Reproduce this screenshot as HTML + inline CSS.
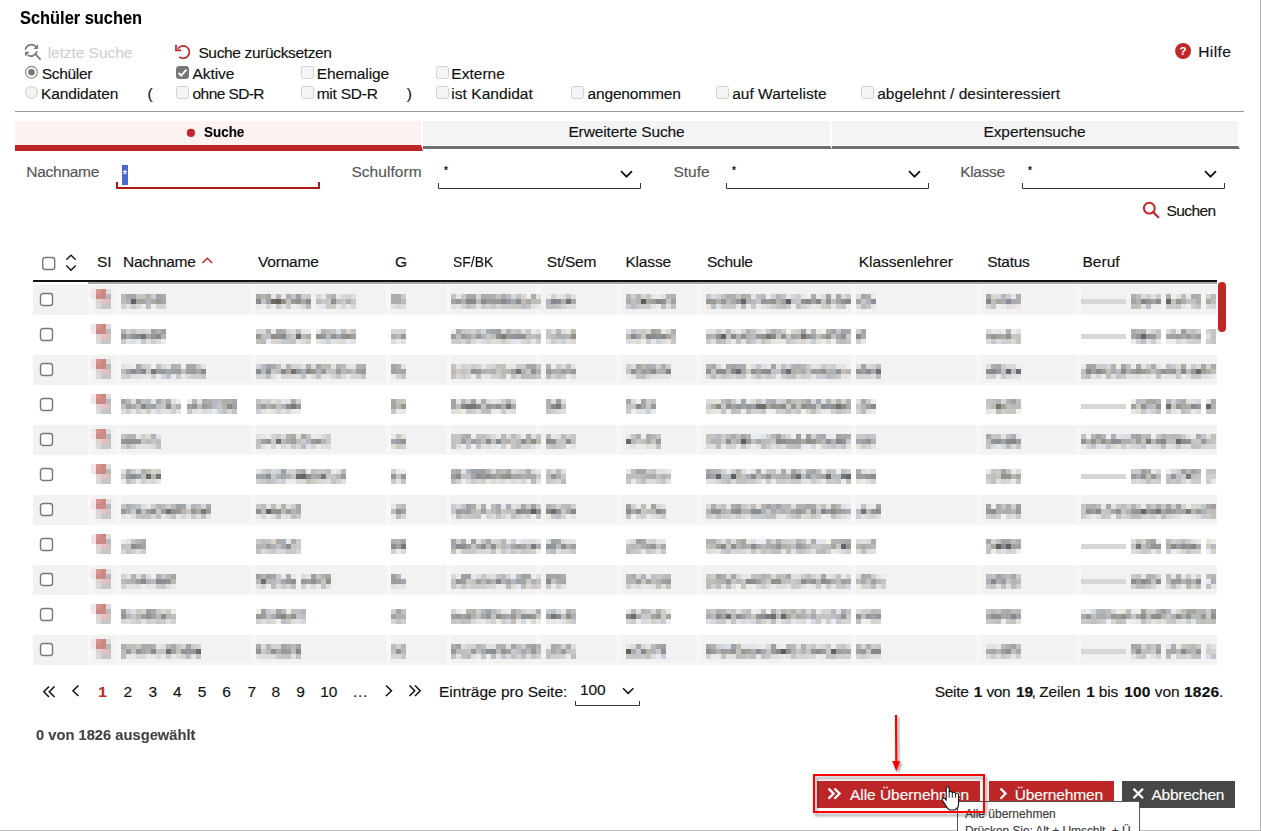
<!DOCTYPE html>
<html><head><meta charset="utf-8"><style>
html,body{margin:0;padding:0;}
body{width:1261px;height:831px;position:relative;overflow:hidden;background:#fff;font-family:"Liberation Sans",sans-serif;}
.t{position:absolute;white-space:pre;line-height:1;-webkit-text-stroke:0.15px currentColor;}
svg{overflow:visible}
</style></head><body>
<div style="position:absolute;left:1260px;top:0px;width:1px;height:831px;background:#b4b4b4"></div>
<div style="position:absolute;left:0px;top:830px;width:1260px;height:1px;background:#bdbdbd"></div>
<svg style="position:absolute;left:20px;top:40px;" width="30" height="24" viewBox="0 0 30 24"><g fill="none" stroke="#7a7a7a" stroke-width="1.8">
<path d="M25.4 49.6 A6.2 6.2 0 0 1 36.2 46.8" transform="translate(-20,-40)"/>
<path d="M37 51.3 A6.2 6.2 0 0 1 27.6 55" transform="translate(-20,-40)"/>
<path d="M35.6 54.4 L40.6 59.6" transform="translate(-20,-40)"/></g>
<g fill="#7a7a7a" transform="translate(-20,-40)"><path d="M33.6 49 L38.2 49 L38 44.3 Z"/><path d="M25 51.8 L29.6 51.8 L25 56.4 Z"/></g></svg>
<svg style="position:absolute;left:170px;top:40px;" width="30" height="24" viewBox="0 0 30 24"><g transform="translate(-170,-40)" fill="none" stroke="#c6232a" stroke-width="1.7">
<path d="M177.8 48.9 A6.2 6.2 0 1 1 179.2 56.8"/>
<path d="M176 44.8 L176 50.3 L181.2 50.3"/></g></svg>
<svg style="position:absolute;left:24px;top:65px;" width="16" height="36" viewBox="0 0 16 36"><circle cx="7.5" cy="7.3" r="5.9" fill="#fff" stroke="#858585" stroke-width="1.1"/>
<circle cx="7.5" cy="7.3" r="3.3" fill="#777"/>
<circle cx="7.5" cy="27.4" r="5.9" fill="#f4f4f4" stroke="#d0d0d0" stroke-width="1.1"/></svg>
<svg style="position:absolute;left:176px;top:66px;" width="13" height="13" viewBox="0 0 13 13"><rect x="0.5" y="0.5" width="12" height="12" rx="2.2" fill="#777" stroke="#777"/><path d="M2.6 7 L5.2 9.6 L10.4 3.6" fill="none" stroke="#fff" stroke-width="1.9"/></svg>
<svg style="position:absolute;left:176px;top:86px;" width="13" height="13" viewBox="0 0 13 13"><rect x="0.5" y="0.5" width="12" height="12" rx="2.2" fill="#f5f5f5" stroke="#d2d2d2"/></svg>
<svg style="position:absolute;left:301px;top:66px;" width="13" height="13" viewBox="0 0 13 13"><rect x="0.5" y="0.5" width="12" height="12" rx="2.2" fill="#f5f5f5" stroke="#d2d2d2"/></svg>
<svg style="position:absolute;left:301px;top:86px;" width="13" height="13" viewBox="0 0 13 13"><rect x="0.5" y="0.5" width="12" height="12" rx="2.2" fill="#f5f5f5" stroke="#d2d2d2"/></svg>
<svg style="position:absolute;left:436px;top:66px;" width="13" height="13" viewBox="0 0 13 13"><rect x="0.5" y="0.5" width="12" height="12" rx="2.2" fill="#f5f5f5" stroke="#d2d2d2"/></svg>
<svg style="position:absolute;left:436px;top:86px;" width="13" height="13" viewBox="0 0 13 13"><rect x="0.5" y="0.5" width="12" height="12" rx="2.2" fill="#f5f5f5" stroke="#d2d2d2"/></svg>
<svg style="position:absolute;left:571px;top:86px;" width="13" height="13" viewBox="0 0 13 13"><rect x="0.5" y="0.5" width="12" height="12" rx="2.2" fill="#f5f5f5" stroke="#d2d2d2"/></svg>
<svg style="position:absolute;left:716px;top:86px;" width="13" height="13" viewBox="0 0 13 13"><rect x="0.5" y="0.5" width="12" height="12" rx="2.2" fill="#f5f5f5" stroke="#d2d2d2"/></svg>
<svg style="position:absolute;left:861px;top:86px;" width="13" height="13" viewBox="0 0 13 13"><rect x="0.5" y="0.5" width="12" height="12" rx="2.2" fill="#f5f5f5" stroke="#d2d2d2"/></svg>
<svg style="position:absolute;left:1175px;top:43px;" width="17" height="17" viewBox="0 0 17 17"><circle cx="8.1" cy="8" r="8" fill="#c0272b"/><text x="8.1" y="12.3" text-anchor="middle" font-family="Liberation Sans" font-weight="bold" font-size="11.5" fill="#fff">?</text></svg>
<div style="position:absolute;left:15px;top:111px;width:1229px;height:1px;background:#999"></div>
<div style="position:absolute;left:15px;top:121px;width:406px;height:24px;background:#fcf2f2"></div>
<div style="position:absolute;left:423px;top:121px;width:407px;height:24px;background:#f4f4f4"></div>
<div style="position:absolute;left:832px;top:121px;width:406px;height:24px;background:#f4f4f4"></div>
<svg style="position:absolute;left:15px;top:145px;" width="409" height="6" viewBox="0 0 409 6"><path d="M0 0 H406 L408 6 H0 Z" fill="#bd2525"/></svg>
<svg style="position:absolute;left:423px;top:146px;" width="410" height="3" viewBox="0 0 410 3"><path d="M0 0 H407 L409 3 H0 Z" fill="#6f6f6f"/></svg>
<svg style="position:absolute;left:832px;top:146px;" width="410" height="3" viewBox="0 0 410 3"><path d="M0 0 H406 L408 3 H0 Z" fill="#6f6f6f"/></svg>
<svg style="position:absolute;left:186px;top:128px;" width="10" height="10" viewBox="0 0 10 10"><circle cx="4.9" cy="4.9" r="4.1" fill="#c0272b"/></svg>
<div style="position:absolute;left:122px;top:165px;width:6px;height:20px;background:#4a68d2"></div>
<svg style="position:absolute;left:122px;top:165px;" width="6" height="20" viewBox="0 0 6 20"><path d="M3 5.3 V9.3 M1.2 6.2 L4.8 8.4 M4.8 6.2 L1.2 8.4" stroke="#fff" stroke-width="1.1"/></svg>
<svg style="position:absolute;left:116px;top:182px;" width="204" height="7" viewBox="0 0 204 7"><path d="M1 0 V6 H203 V0" fill="none" stroke="#ac1a1a" stroke-width="2"/></svg>
<svg style="position:absolute;left:438px;top:183px;" width="203" height="6" viewBox="0 0 203 6"><path d="M0.5 0 V5.5 H202.5 V0" fill="none" stroke="#333" stroke-width="1"/></svg>
<svg style="position:absolute;left:444px;top:166px;" width="6" height="8" viewBox="0 0 6 8"><text x="0" y="8" font-family="Liberation Sans" font-weight="bold" font-size="10" fill="#111">*</text></svg>
<svg style="position:absolute;left:619.5px;top:170px;" width="13" height="8" viewBox="0 0 13 8"><path d="M1 1.2 L6.5 6.7 L12 1.2" fill="none" stroke="#111" stroke-width="1.7"/></svg>
<svg style="position:absolute;left:726px;top:183px;" width="203" height="6" viewBox="0 0 203 6"><path d="M0.5 0 V5.5 H202.5 V0" fill="none" stroke="#333" stroke-width="1"/></svg>
<svg style="position:absolute;left:732px;top:166px;" width="6" height="8" viewBox="0 0 6 8"><text x="0" y="8" font-family="Liberation Sans" font-weight="bold" font-size="10" fill="#111">*</text></svg>
<svg style="position:absolute;left:907.5px;top:170px;" width="13" height="8" viewBox="0 0 13 8"><path d="M1 1.2 L6.5 6.7 L12 1.2" fill="none" stroke="#111" stroke-width="1.7"/></svg>
<svg style="position:absolute;left:1022px;top:183px;" width="203" height="6" viewBox="0 0 203 6"><path d="M0.5 0 V5.5 H202.5 V0" fill="none" stroke="#333" stroke-width="1"/></svg>
<svg style="position:absolute;left:1028px;top:166px;" width="6" height="8" viewBox="0 0 6 8"><text x="0" y="8" font-family="Liberation Sans" font-weight="bold" font-size="10" fill="#111">*</text></svg>
<svg style="position:absolute;left:1203.5px;top:170px;" width="13" height="8" viewBox="0 0 13 8"><path d="M1 1.2 L6.5 6.7 L12 1.2" fill="none" stroke="#111" stroke-width="1.7"/></svg>
<svg style="position:absolute;left:1141px;top:200px;" width="20" height="20" viewBox="0 0 20 20"><circle cx="8.3" cy="8.2" r="5.4" fill="none" stroke="#c0272b" stroke-width="2"/><path d="M12.2 12.1 L17.3 17.2" stroke="#c0272b" stroke-width="2.2" stroke-linecap="round"/></svg>
<svg style="position:absolute;left:41px;top:256px;" width="16" height="16" viewBox="0 0 16 16"><rect x="1.7" y="1.5" width="12" height="12" rx="2.6" fill="#fff" stroke="#777" stroke-width="1.4"/></svg>
<svg style="position:absolute;left:64px;top:253px;" width="14" height="20" viewBox="0 0 14 20"><path d="M2.3 6.8 L7 2.2 L11.7 6.8 M2.3 12.5 L7 17.3 L11.7 12.5" fill="none" stroke="#111" stroke-width="1.3"/></svg>
<svg style="position:absolute;left:200px;top:255px;" width="14" height="10" viewBox="0 0 14 10"><path d="M2.5 8 L7.3 3.3 L12.1 8" fill="none" stroke="#c0272b" stroke-width="1.5"/></svg>
<div style="position:absolute;left:33px;top:280px;width:1184px;height:2px;background:#111"></div>
<div style="position:absolute;left:88px;top:282px;width:1129px;height:2px;background:#a9a9a9"></div>
<div style="position:absolute;left:1218px;top:282px;width:8px;height:50px;background:#c02626;border-radius:4px"></div>
<div style="position:absolute;left:33px;top:285px;width:1184px;height:30px;background:#f2f2f2"></div>
<div style="position:absolute;left:88px;top:285px;width:5px;height:30px;background:#f7f7f7"></div>
<div style="position:absolute;left:116px;top:285px;width:5px;height:30px;background:#f7f7f7"></div>
<div style="position:absolute;left:251px;top:285px;width:5px;height:30px;background:#f7f7f7"></div>
<div style="position:absolute;left:386px;top:285px;width:5px;height:30px;background:#f7f7f7"></div>
<div style="position:absolute;left:446px;top:285px;width:5px;height:30px;background:#f7f7f7"></div>
<div style="position:absolute;left:536px;top:285px;width:5px;height:30px;background:#f7f7f7"></div>
<div style="position:absolute;left:616px;top:285px;width:5px;height:30px;background:#f7f7f7"></div>
<div style="position:absolute;left:696px;top:285px;width:5px;height:30px;background:#f7f7f7"></div>
<div style="position:absolute;left:851px;top:285px;width:5px;height:30px;background:#f7f7f7"></div>
<div style="position:absolute;left:976px;top:285px;width:5px;height:30px;background:#f7f7f7"></div>
<div style="position:absolute;left:1076px;top:285px;width:5px;height:30px;background:#f7f7f7"></div>
<div style="position:absolute;left:88px;top:313px;width:1128px;height:2px;background:#f6f6f6"></div>
<svg style="position:absolute;left:39px;top:292px;" width="15" height="15" viewBox="0 0 15 15"><rect x="1.5" y="1.5" width="12" height="12" rx="2.6" fill="#fff" stroke="#777" stroke-width="1.4"/></svg>
<div style="position:absolute;left:91px;top:289px;width:20px;height:20px;background:linear-gradient(90deg,#f3e6e6 0 5px,#d8948f 5px 10px,#c9897f 10px 15px,#dcdcdc 15px) 0 0/100% 5px no-repeat,linear-gradient(90deg,#f3e5e5 0 5px,#c98a88 5px 15px,#b9b9b9 15px) 0 5px/100% 5px no-repeat,linear-gradient(90deg,transparent 0 5px,#e0d3d3 5px 10px,#e7c2c2 10px 15px,#d8c0c0 15px) 0 10px/100% 5px no-repeat,linear-gradient(90deg,transparent 0 5px,#dadada 5px 10px,#c6c6c6 10px) 0 15px/100% 5px no-repeat"></div>
<div style="position:absolute;left:121px;top:294px;width:45px;height:15px;background:linear-gradient(90deg,#b8b8b8 0px 5px,#a0a6ac 5px 10px,#a9a59f 10px 15px,#c7c3bd 15px 20px,#c6c2bc 20px 25px,#b0b0b0 25px 30px,#cdcdcd 30px 35px,#9ea4aa 35px 40px,#a6acb2 40px 45px) 0 0/100% 5px no-repeat,linear-gradient(90deg,#bdbdbd 0px 5px,#b1b1b1 5px 10px,#636363 10px 15px,#a3a3a3 15px 20px,#a4a4a4 20px 25px,#b5b5b5 25px 30px,#a9a9a9 30px 35px,#9f9b95 35px 40px,#a8a49e 40px 45px) 0 5px/100% 5px no-repeat,linear-gradient(90deg,#d3d3d3 0px 5px,#e1e1e1 5px 10px,#cacaca 10px 15px,#d8d8d8 15px 20px,#ebebeb 20px 25px,#bdbdbd 25px 30px,#e9eff5 30px 35px,#d4d0ca 35px 40px,#d8d4ce 40px 45px) 0 10px/100% 5px no-repeat"></div>
<div style="position:absolute;left:256px;top:294px;width:55px;height:15px;background:linear-gradient(90deg,#a9a59f 0px 5px,#b2b2b2 5px 10px,#a5a5a5 10px 15px,#e5e5e5 15px 20px,#b1b7bd 20px 25px,#ebe7e1 25px 30px,#a9afb5 30px 35px,#c1c7cd 35px 40px,#9ba1a7 40px 45px,#cccccc 45px 50px,#c8c8c8 50px 55px) 0 0/100% 5px no-repeat,linear-gradient(90deg,#898989 0px 5px,#bdc3c9 5px 10px,#a1a1a1 10px 15px,#69655f 15px 20px,#635f59 20px 25px,#928e88 25px 30px,#c7c3bd 30px 35px,#93999f 35px 40px,#8e8e8e 40px 45px,#aba7a1 45px 50px,#888e94 50px 55px) 0 5px/100% 5px no-repeat,linear-gradient(90deg,#ebe7e1 0px 5px,#f1ede7 5px 10px,#d6d6d6 10px 15px,#ececec 15px 20px,#cdc9c3 20px 25px,#e2e2e2 25px 30px,#cbcbcb 30px 35px,#ededed 35px 40px,#e0e6ec 40px 45px,#dad6d0 45px 50px,#b7bdc3 50px 55px) 0 10px/100% 5px no-repeat"></div>
<div style="position:absolute;left:316px;top:294px;width:40px;height:15px;background:linear-gradient(90deg,#d6d6d6 0px 5px,#e9e9e9 5px 10px,#b8bec4 10px 15px,#aeaeae 15px 20px,#e7e7e7 20px 25px,#d9d5cf 25px 30px,#d3d3d3 30px 35px,#e1ddd7 35px 40px) 0 0/100% 5px no-repeat,linear-gradient(90deg,#bbbbbb 0px 5px,#c8c8c8 5px 10px,#ccc8c2 10px 15px,#8e8e8e 15px 20px,#bcbcbc 20px 25px,#c4cad0 25px 30px,#b1ada7 30px 35px,#c8c8c8 35px 40px) 0 5px/100% 5px no-repeat,linear-gradient(90deg,#eaeaea 0px 5px,#e0e6ec 5px 10px,#c9c9c9 10px 15px,#cdc9c3 15px 20px,#e9e9e9 20px 25px,#d8d8d8 25px 30px,#e9e9e9 30px 35px,#d5d5d5 35px 40px) 0 10px/100% 5px no-repeat"></div>
<div style="position:absolute;left:391px;top:294px;width:15px;height:15px;background:linear-gradient(90deg,#adadad 0px 5px,#acacac 5px 10px,#cbcbcb 10px 15px) 0 0/100% 5px no-repeat,linear-gradient(90deg,#b1ada7 0px 5px,#a8aeb4 5px 10px,#bababa 10px 15px) 0 5px/100% 5px no-repeat,linear-gradient(90deg,#e1e1e1 0px 5px,#d9d9d9 5px 10px,#dedede 10px 15px) 0 10px/100% 5px no-repeat"></div>
<div style="position:absolute;left:451px;top:294px;width:90px;height:15px;background:linear-gradient(90deg,#c5c5c5 0px 5px,#e1e7ed 5px 10px,#cbcbcb 10px 15px,#a9a9a9 15px 20px,#aaa6a0 20px 25px,#d4d4d4 25px 30px,#ababab 30px 35px,#aaaaaa 35px 40px,#acb2b8 40px 45px,#c5c5c5 45px 50px,#ababab 50px 55px,#b6bcc2 55px 60px,#d8d8d8 60px 65px,#bec4ca 65px 70px,#d6d2cc 70px 75px,#ededed 75px 80px,#ada9a3 80px 85px,#e3dfd9 85px 90px) 0 0/100% 5px no-repeat,linear-gradient(90deg,#a2a2a2 0px 5px,#979797 5px 10px,#b2aea8 10px 15px,#898989 15px 20px,#8a8a8a 20px 25px,#bcbcbc 25px 30px,#8a8a8a 30px 35px,#9d9d9d 35px 40px,#989898 40px 45px,#9c9892 45px 50px,#858b91 50px 55px,#969ca2 55px 60px,#a4aab0 60px 65px,#8d8983 65px 70px,#bdb9b3 70px 75px,#aca8a2 75px 80px,#bdbdbd 80px 85px,#bebebe 85px 90px) 0 5px/100% 5px no-repeat,linear-gradient(90deg,#d9dfe5 0px 5px,#e5e5e5 5px 10px,#d5d1cb 10px 15px,#c0c0c0 15px 20px,#cdc9c3 20px 25px,#e5e5e5 25px 30px,#c4cad0 30px 35px,#d1d1d1 35px 40px,#c7c7c7 40px 45px,#d6d6d6 45px 50px,#d0ccc6 50px 55px,#cdcdcd 55px 60px,#cac6c0 60px 65px,#c3c9cf 65px 70px,#b8bec4 70px 75px,#c6c6c6 75px 80px,#e1e1e1 80px 85px,#e3e9ef 85px 90px) 0 10px/100% 5px no-repeat"></div>
<div style="position:absolute;left:546px;top:294px;width:30px;height:15px;background:linear-gradient(90deg,#ededed 0px 5px,#d2d2d2 5px 10px,#e6e6e6 10px 15px,#dfdfdf 15px 20px,#c7c7c7 20px 25px,#e1e1e1 25px 30px) 0 0/100% 5px no-repeat,linear-gradient(90deg,#b0b6bc 0px 5px,#848a90 5px 10px,#8d8d8d 10px 15px,#b0b0b0 15px 20px,#747474 20px 25px,#a8a8a8 25px 30px) 0 5px/100% 5px no-repeat,linear-gradient(90deg,#b9bfc5 0px 5px,#bdbdbd 5px 10px,#c4c4c4 10px 15px,#d3d3d3 15px 20px,#dddddd 20px 25px,#e1ddd7 25px 30px) 0 10px/100% 5px no-repeat"></div>
<div style="position:absolute;left:626px;top:294px;width:50px;height:15px;background:linear-gradient(90deg,#afb5bb 0px 5px,#d2cec8 5px 10px,#b4b4b4 10px 15px,#d5d5d5 15px 20px,#cac6c0 20px 25px,#e6e6e6 25px 30px,#e9e9e9 30px 35px,#e0e0e0 35px 40px,#b4b4b4 40px 45px,#b5b1ab 45px 50px) 0 0/100% 5px no-repeat,linear-gradient(90deg,#afaba5 0px 5px,#bdbdbd 5px 10px,#b5b5b5 10px 15px,#5d5d5d 15px 20px,#aaa6a0 20px 25px,#9d9d9d 25px 30px,#868686 30px 35px,#8e8e8e 35px 40px,#bfc5cb 40px 45px,#a0a0a0 45px 50px) 0 5px/100% 5px no-repeat,linear-gradient(90deg,#c8ced4 0px 5px,#bcbcbc 5px 10px,#c4cad0 10px 15px,#cdc9c3 15px 20px,#cdcdcd 20px 25px,#e4e4e4 25px 30px,#eaeaea 30px 35px,#bcbcbc 35px 40px,#dde3e9 40px 45px,#c2beb8 45px 50px) 0 10px/100% 5px no-repeat"></div>
<div style="position:absolute;left:706px;top:294px;width:145px;height:15px;background:linear-gradient(90deg,#c0c6cc 0px 5px,#d6dce2 5px 10px,#d3d3d3 10px 15px,#c4c0ba 15px 20px,#afafaf 20px 25px,#b0b0b0 25px 30px,#c8c4be 30px 35px,#aca8a2 35px 40px,#b2b2b2 40px 45px,#e5e5e5 45px 50px,#bcc2c8 50px 55px,#b6bcc2 55px 60px,#ececec 60px 65px,#cdd3d9 65px 70px,#b0b6bc 70px 75px,#c2c2c2 75px 80px,#eae6e0 80px 85px,#d7d7d7 85px 90px,#c9cfd5 90px 95px,#e9e9e9 95px 100px,#f2eee8 100px 105px,#ababab 105px 110px,#eaeaea 110px 115px,#dcdcdc 115px 120px,#9ea4aa 120px 125px,#e4eaf0 125px 130px,#a9a9a9 130px 135px,#dcd8d2 135px 140px,#c4cad0 140px 145px) 0 0/100% 5px no-repeat,linear-gradient(90deg,#9b9791 0px 5px,#9a9a9a 5px 10px,#b1b1b1 10px 15px,#959595 15px 20px,#bbb7b1 20px 25px,#a7a7a7 25px 30px,#979797 30px 35px,#676767 35px 40px,#b4b4b4 40px 45px,#b4bac0 45px 50px,#c7c7c7 50px 55px,#959595 55px 60px,#9a9a9a 60px 65px,#929292 65px 70px,#b9b5af 70px 75px,#a0a0a0 75px 80px,#5a6066 80px 85px,#c3c3c3 85px 90px,#c5cbd1 90px 95px,#929292 95px 100px,#848a90 100px 105px,#a5a19b 105px 110px,#82888e 110px 115px,#c6c6c6 115px 120px,#949494 120px 125px,#c3bfb9 125px 130px,#a6a6a6 130px 135px,#939393 135px 140px,#888888 140px 145px) 0 5px/100% 5px no-repeat,linear-gradient(90deg,#e7e3dd 0px 5px,#b9bfc5 5px 10px,#dce2e8 10px 15px,#c8c8c8 15px 20px,#c3c9cf 20px 25px,#c8c8c8 25px 30px,#e9e9e9 30px 35px,#bbbbbb 35px 40px,#e7edf3 40px 45px,#c7c7c7 45px 50px,#eaeaea 50px 55px,#e0e0e0 55px 60px,#d5dbe1 60px 65px,#d2cec8 65px 70px,#c0c6cc 70px 75px,#bdbdbd 75px 80px,#cacaca 80px 85px,#f3efe9 85px 90px,#bfbfbf 90px 95px,#d1d1d1 95px 100px,#dadada 100px 105px,#ece8e2 105px 110px,#e5e5e5 110px 115px,#d3cfc9 115px 120px,#ccc8c2 120px 125px,#e3e9ef 125px 130px,#cecece 130px 135px,#c6c6c6 135px 140px,#ededed 140px 145px) 0 10px/100% 5px no-repeat"></div>
<div style="position:absolute;left:856px;top:294px;width:20px;height:15px;background:linear-gradient(90deg,#e0e0e0 0px 5px,#a8a49e 5px 10px,#aeaeae 10px 15px,#e9e9e9 15px 20px) 0 0/100% 5px no-repeat,linear-gradient(90deg,#a4a4a4 0px 5px,#c6c6c6 5px 10px,#acb2b8 10px 15px,#8b9197 15px 20px) 0 5px/100% 5px no-repeat,linear-gradient(90deg,#d5dbe1 0px 5px,#bababa 5px 10px,#bfc5cb 10px 15px,#e9e5df 15px 20px) 0 10px/100% 5px no-repeat"></div>
<div style="position:absolute;left:986px;top:294px;width:35px;height:15px;background:linear-gradient(90deg,#a7a7a7 0px 5px,#d8d4ce 5px 10px,#d2d8de 10px 15px,#b3b9bf 15px 20px,#cccccc 20px 25px,#e0e6ec 25px 30px,#aab0b6 30px 35px) 0 0/100% 5px no-repeat,linear-gradient(90deg,#868686 0px 5px,#bdbdbd 5px 10px,#aba7a1 10px 15px,#ababab 15px 20px,#888e94 20px 25px,#a4aab0 25px 30px,#afaba5 30px 35px) 0 5px/100% 5px no-repeat,linear-gradient(90deg,#d3d3d3 0px 5px,#c4c4c4 5px 10px,#f2eee8 10px 15px,#eaeaea 15px 20px,#e0dcd6 20px 25px,#e2e2e2 25px 30px,#ece8e2 30px 35px) 0 10px/100% 5px no-repeat"></div>
<div style="position:absolute;left:1081px;top:299px;width:45px;height:5px;background:#d9d6d6"></div>
<div style="position:absolute;left:1131px;top:294px;width:30px;height:15px;background:linear-gradient(90deg,#b0b0b0 0px 5px,#b9bfc5 5px 10px,#dedad4 10px 15px,#d1cdc7 15px 20px,#e2e2e2 20px 25px,#c7cdd3 25px 30px) 0 0/100% 5px no-repeat,linear-gradient(90deg,#a2a2a2 0px 5px,#b2b2b2 5px 10px,#878787 10px 15px,#959595 15px 20px,#a5a5a5 20px 25px,#8d8d8d 25px 30px) 0 5px/100% 5px no-repeat,linear-gradient(90deg,#bebebe 0px 5px,#c2beb8 5px 10px,#e0e0e0 10px 15px,#b8bec4 15px 20px,#ebebeb 20px 25px,#ededed 25px 30px) 0 10px/100% 5px no-repeat"></div>
<div style="position:absolute;left:1166px;top:294px;width:35px;height:15px;background:linear-gradient(90deg,#aeaeae 0px 5px,#f1ede7 5px 10px,#e4e0da 10px 15px,#c1bdb7 15px 20px,#e6e6e6 20px 25px,#aaaaaa 25px 30px,#afafaf 30px 35px) 0 0/100% 5px no-repeat,linear-gradient(90deg,#68645e 0px 5px,#c5c5c5 5px 10px,#97938d 10px 15px,#a6acb2 15px 20px,#c1c1c1 20px 25px,#c2c2c2 25px 30px,#b0b0b0 30px 35px) 0 5px/100% 5px no-repeat,linear-gradient(90deg,#c7c7c7 0px 5px,#cccccc 5px 10px,#c9c5bf 10px 15px,#e4e4e4 15px 20px,#ededed 20px 25px,#d0ccc6 25px 30px,#c1c1c1 30px 35px) 0 10px/100% 5px no-repeat"></div>
<div style="position:absolute;left:1206px;top:294px;width:10px;height:15px;background:linear-gradient(90deg,#d4d0ca 0px 5px,#bdb9b3 5px 10px) 0 0/100% 5px no-repeat,linear-gradient(90deg,#aca8a2 0px 5px,#bebebe 5px 10px) 0 5px/100% 5px no-repeat,linear-gradient(90deg,#dbdbdb 0px 5px,#d5d5d5 5px 10px) 0 10px/100% 5px no-repeat"></div>
<svg style="position:absolute;left:39px;top:327px;" width="15" height="15" viewBox="0 0 15 15"><rect x="1.5" y="1.5" width="12" height="12" rx="2.6" fill="#fff" stroke="#777" stroke-width="1.4"/></svg>
<div style="position:absolute;left:91px;top:324px;width:20px;height:20px;background:linear-gradient(90deg,#f3e6e6 0 5px,#d8948f 5px 10px,#c9897f 10px 15px,#dcdcdc 15px) 0 0/100% 5px no-repeat,linear-gradient(90deg,#f3e5e5 0 5px,#c98a88 5px 15px,#b9b9b9 15px) 0 5px/100% 5px no-repeat,linear-gradient(90deg,transparent 0 5px,#e0d3d3 5px 10px,#e7c2c2 10px 15px,#d8c0c0 15px) 0 10px/100% 5px no-repeat,linear-gradient(90deg,transparent 0 5px,#dadada 5px 10px,#c6c6c6 10px) 0 15px/100% 5px no-repeat"></div>
<div style="position:absolute;left:121px;top:329px;width:45px;height:15px;background:linear-gradient(90deg,#b8b4ae 0px 5px,#d2d2d2 5px 10px,#c5c1bb 10px 15px,#ced4da 15px 20px,#d2d2d2 20px 25px,#d9d9d9 25px 30px,#a2a2a2 30px 35px,#b2b2b2 35px 40px,#9f9f9f 40px 45px) 0 0/100% 5px no-repeat,linear-gradient(90deg,#8f8f8f 0px 5px,#a8a8a8 5px 10px,#8d9399 10px 15px,#898989 15px 20px,#767676 20px 25px,#a5a5a5 25px 30px,#91979d 30px 35px,#888888 35px 40px,#b5b5b5 40px 45px) 0 5px/100% 5px no-repeat,linear-gradient(90deg,#c7c7c7 0px 5px,#dee4ea 5px 10px,#d7dde3 10px 15px,#e3e9ef 15px 20px,#c6c6c6 20px 25px,#e0e0e0 25px 30px,#cbcbcb 30px 35px,#dadada 35px 40px,#ececec 40px 45px) 0 10px/100% 5px no-repeat"></div>
<div style="position:absolute;left:256px;top:329px;width:55px;height:15px;background:linear-gradient(90deg,#d6d6d6 0px 5px,#d4dae0 5px 10px,#b5b1ab 10px 15px,#ede9e3 15px 20px,#a3a9af 20px 25px,#b0aca6 25px 30px,#d6d6d6 30px 35px,#d9d9d9 35px 40px,#bcbcbc 40px 45px,#e6e6e6 45px 50px,#eeeae4 50px 55px) 0 0/100% 5px no-repeat,linear-gradient(90deg,#99958f 0px 5px,#bfbfbf 5px 10px,#bac0c6 10px 15px,#8c8c8c 15px 20px,#939393 20px 25px,#83898f 25px 30px,#b2b8be 30px 35px,#c7c7c7 35px 40px,#696969 40px 45px,#bababa 45px 50px,#aaaaaa 50px 55px) 0 5px/100% 5px no-repeat,linear-gradient(90deg,#c4c0ba 0px 5px,#bababa 5px 10px,#ececec 10px 15px,#d9d5cf 15px 20px,#d3d3d3 20px 25px,#c3c9cf 25px 30px,#c5c5c5 30px 35px,#c5c1bb 35px 40px,#e2e2e2 40px 45px,#dadada 45px 50px,#d4d0ca 50px 55px) 0 10px/100% 5px no-repeat"></div>
<div style="position:absolute;left:316px;top:329px;width:40px;height:15px;background:linear-gradient(90deg,#e2e8ee 0px 5px,#b4b4b4 5px 10px,#b9bfc5 10px 15px,#c3c3c3 15px 20px,#d7dde3 20px 25px,#b9b9b9 25px 30px,#d9d5cf 30px 35px,#c2c2c2 35px 40px) 0 0/100% 5px no-repeat,linear-gradient(90deg,#8e8e8e 0px 5px,#92989e 5px 10px,#bbb7b1 10px 15px,#8c9298 15px 20px,#a5abb1 20px 25px,#929292 25px 30px,#928e88 30px 35px,#a0a0a0 35px 40px) 0 5px/100% 5px no-repeat,linear-gradient(90deg,#e6e2dc 0px 5px,#d7dde3 5px 10px,#cad0d6 10px 15px,#e3e3e3 15px 20px,#e0dcd6 20px 25px,#d9d9d9 25px 30px,#e9e9e9 30px 35px,#dce2e8 35px 40px) 0 10px/100% 5px no-repeat"></div>
<div style="position:absolute;left:391px;top:329px;width:15px;height:15px;background:linear-gradient(90deg,#d8d8d8 0px 5px,#d7d7d7 5px 10px,#ced4da 10px 15px) 0 0/100% 5px no-repeat,linear-gradient(90deg,#b0b0b0 0px 5px,#bbbbbb 5px 10px,#979797 10px 15px) 0 5px/100% 5px no-repeat,linear-gradient(90deg,#dadada 0px 5px,#eaeaea 5px 10px,#e2e2e2 10px 15px) 0 10px/100% 5px no-repeat"></div>
<div style="position:absolute;left:451px;top:329px;width:90px;height:15px;background:linear-gradient(90deg,#ececec 0px 5px,#ababab 5px 10px,#c8c8c8 10px 15px,#cacaca 15px 20px,#d2d2d2 20px 25px,#bbc1c7 25px 30px,#d5d5d5 30px 35px,#a4aab0 35px 40px,#9fa5ab 40px 45px,#a0a0a0 45px 50px,#d2d8de 50px 55px,#b0b0b0 55px 60px,#c9c9c9 60px 65px,#c4c0ba 65px 70px,#dddddd 70px 75px,#c0c6cc 75px 80px,#ececec 80px 85px,#e0e0e0 85px 90px) 0 0/100% 5px no-repeat,linear-gradient(90deg,#a09c96 0px 5px,#bebebe 5px 10px,#949aa0 10px 15px,#a8a49e 15px 20px,#b3b9bf 20px 25px,#9a9a9a 25px 30px,#adb3b9 30px 35px,#cbc7c1 35px 40px,#bebebe 40px 45px,#8f8f8f 45px 50px,#797979 50px 55px,#9d9993 55px 60px,#91979d 60px 65px,#909090 65px 70px,#919191 70px 75px,#bbbbbb 75px 80px,#c1bdb7 80px 85px,#b5b5b5 85px 90px) 0 5px/100% 5px no-repeat,linear-gradient(90deg,#d0d0d0 0px 5px,#cdc9c3 5px 10px,#d3d3d3 10px 15px,#c1c1c1 15px 20px,#dcd8d2 20px 25px,#e5e5e5 25px 30px,#d8dee4 30px 35px,#d5d1cb 35px 40px,#e1ddd7 40px 45px,#d9d9d9 45px 50px,#cbcbcb 50px 55px,#d9d5cf 55px 60px,#dbe1e7 60px 65px,#e6e6e6 65px 70px,#d1d7dd 70px 75px,#d0d0d0 75px 80px,#e4e4e4 80px 85px,#cad0d6 85px 90px) 0 10px/100% 5px no-repeat"></div>
<div style="position:absolute;left:546px;top:329px;width:30px;height:15px;background:linear-gradient(90deg,#c7c7c7 0px 5px,#dae0e6 5px 10px,#b6b6b6 10px 15px,#dddddd 15px 20px,#ebe7e1 20px 25px,#bdb9b3 25px 30px) 0 0/100% 5px no-repeat,linear-gradient(90deg,#c4c4c4 0px 5px,#bbbbbb 5px 10px,#afafaf 10px 15px,#aab0b6 15px 20px,#b3b3b3 20px 25px,#928e88 25px 30px) 0 5px/100% 5px no-repeat,linear-gradient(90deg,#e2e2e2 0px 5px,#cdcdcd 5px 10px,#d3d9df 10px 15px,#cfcfcf 15px 20px,#e1ddd7 20px 25px,#ddd9d3 25px 30px) 0 10px/100% 5px no-repeat"></div>
<div style="position:absolute;left:626px;top:329px;width:50px;height:15px;background:linear-gradient(90deg,#dfdfdf 0px 5px,#bec4ca 5px 10px,#cecece 10px 15px,#cbc7c1 15px 20px,#d8d4ce 20px 25px,#a0a0a0 25px 30px,#aeaaa4 30px 35px,#eae6e0 35px 40px,#d8d8d8 40px 45px,#adadad 45px 50px) 0 0/100% 5px no-repeat,linear-gradient(90deg,#b6b6b6 0px 5px,#8b8b8b 5px 10px,#a1a7ad 10px 15px,#cdc9c3 15px 20px,#878787 20px 25px,#8b8b8b 25px 30px,#919191 30px 35px,#8a8a8a 35px 40px,#a9a59f 40px 45px,#bcbcbc 45px 50px) 0 5px/100% 5px no-repeat,linear-gradient(90deg,#d6dce2 0px 5px,#e2e2e2 5px 10px,#ddd9d3 10px 15px,#ececec 15px 20px,#cbcbcb 20px 25px,#e1e7ed 25px 30px,#ccd2d8 30px 35px,#dddddd 35px 40px,#e9e5df 40px 45px,#c7c7c7 45px 50px) 0 10px/100% 5px no-repeat"></div>
<div style="position:absolute;left:706px;top:329px;width:145px;height:15px;background:linear-gradient(90deg,#e6e2dc 0px 5px,#e1e1e1 5px 10px,#cccccc 10px 15px,#dfdfdf 15px 20px,#bababa 20px 25px,#dedede 25px 30px,#e9e9e9 30px 35px,#d1d7dd 35px 40px,#b3b3b3 40px 45px,#c3c3c3 45px 50px,#dcdcdc 50px 55px,#e6e6e6 55px 60px,#cbc7c1 60px 65px,#aeaeae 65px 70px,#bcbcbc 70px 75px,#cecac4 75px 80px,#f4f0ea 80px 85px,#d7d3cd 85px 90px,#cecece 90px 95px,#a0a0a0 95px 100px,#e4e4e4 100px 105px,#b3b3b3 105px 110px,#eaeaea 110px 115px,#f2eee8 115px 120px,#b5b1ab 120px 125px,#a3a3a3 125px 130px,#c3c3c3 130px 135px,#a0a6ac 135px 140px,#a4aab0 140px 145px) 0 0/100% 5px no-repeat,linear-gradient(90deg,#acacac 0px 5px,#b3b3b3 5px 10px,#909090 10px 15px,#60666c 15px 20px,#c3c3c3 20px 25px,#898989 25px 30px,#b7b3ad 30px 35px,#8f8f8f 35px 40px,#b4b4b4 40px 45px,#b5bbc1 45px 50px,#979797 50px 55px,#97938d 55px 60px,#78746e 60px 65px,#848a90 65px 70px,#c5c5c5 70px 75px,#95918b 75px 80px,#c5c5c5 80px 85px,#a4a4a4 85px 90px,#aca8a2 90px 95px,#727272 95px 100px,#8b9197 100px 105px,#9ea4aa 105px 110px,#c5c1bb 110px 115px,#a7a7a7 115px 120px,#938f89 120px 125px,#bec4ca 125px 130px,#a2a8ae 130px 135px,#939393 135px 140px,#cfcbc5 140px 145px) 0 5px/100% 5px no-repeat,linear-gradient(90deg,#cfcbc5 0px 5px,#dfdfdf 5px 10px,#b6bcc2 10px 15px,#c1c1c1 15px 20px,#d5d5d5 20px 25px,#e9e9e9 25px 30px,#c1c1c1 30px 35px,#e5e1db 35px 40px,#bebebe 40px 45px,#c8c8c8 45px 50px,#dedede 50px 55px,#c4c4c4 55px 60px,#d5d1cb 60px 65px,#e4e4e4 65px 70px,#ece8e2 70px 75px,#e9e9e9 75px 80px,#c7c7c7 80px 85px,#c9cfd5 85px 90px,#d8d8d8 90px 95px,#d7d3cd 95px 100px,#dfdfdf 100px 105px,#c6ccd2 105px 110px,#e1e1e1 110px 115px,#ebebeb 115px 120px,#dbd7d1 120px 125px,#f2eee8 125px 130px,#bfbfbf 130px 135px,#bbbbbb 135px 140px,#c4c4c4 140px 145px) 0 10px/100% 5px no-repeat"></div>
<div style="position:absolute;left:856px;top:329px;width:10px;height:15px;background:linear-gradient(90deg,#cdcdcd 0px 5px,#a7a7a7 5px 10px) 0 0/100% 5px no-repeat,linear-gradient(90deg,#898989 0px 5px,#aeaaa4 5px 10px) 0 5px/100% 5px no-repeat,linear-gradient(90deg,#cfcfcf 0px 5px,#e6e6e6 5px 10px) 0 10px/100% 5px no-repeat"></div>
<div style="position:absolute;left:986px;top:329px;width:35px;height:15px;background:linear-gradient(90deg,#dadada 0px 5px,#eaeaea 5px 10px,#dee4ea 10px 15px,#e6ecf2 15px 20px,#b2b2b2 20px 25px,#ededed 25px 30px,#e6e2dc 30px 35px) 0 0/100% 5px no-repeat,linear-gradient(90deg,#a9a9a9 0px 5px,#969696 5px 10px,#a4a09a 10px 15px,#a9a59f 15px 20px,#8f8f8f 20px 25px,#c5c5c5 25px 30px,#c8c4be 30px 35px) 0 5px/100% 5px no-repeat,linear-gradient(90deg,#dbdbdb 0px 5px,#c8c8c8 5px 10px,#dadada 10px 15px,#ccd2d8 15px 20px,#cfcbc5 20px 25px,#d8d8d8 25px 30px,#c7c7c7 30px 35px) 0 10px/100% 5px no-repeat"></div>
<div style="position:absolute;left:1081px;top:334px;width:45px;height:5px;background:#d9d6d6"></div>
<div style="position:absolute;left:1131px;top:329px;width:30px;height:15px;background:linear-gradient(90deg,#b0aca6 0px 5px,#b2b8be 5px 10px,#b2b2b2 10px 15px,#e2e2e2 15px 20px,#d3d3d3 20px 25px,#c3c3c3 25px 30px) 0 0/100% 5px no-repeat,linear-gradient(90deg,#a1a7ad 0px 5px,#91979d 5px 10px,#676767 10px 15px,#969696 15px 20px,#959ba1 20px 25px,#c0bcb6 25px 30px) 0 5px/100% 5px no-repeat,linear-gradient(90deg,#ede9e3 0px 5px,#cecece 5px 10px,#bfbfbf 10px 15px,#dce2e8 15px 20px,#cccccc 20px 25px,#e6e6e6 25px 30px) 0 10px/100% 5px no-repeat"></div>
<div style="position:absolute;left:1166px;top:329px;width:35px;height:15px;background:linear-gradient(90deg,#dadada 0px 5px,#c5c5c5 5px 10px,#e8e8e8 10px 15px,#9f9f9f 15px 20px,#c6c6c6 20px 25px,#c0c0c0 25px 30px,#cfcfcf 30px 35px) 0 0/100% 5px no-repeat,linear-gradient(90deg,#a1a7ad 0px 5px,#9ca2a8 5px 10px,#9b9b9b 10px 15px,#ada9a3 15px 20px,#9a9a9a 20px 25px,#adadad 25px 30px,#9c9c9c 30px 35px) 0 5px/100% 5px no-repeat,linear-gradient(90deg,#ebebeb 0px 5px,#efebe5 5px 10px,#d7d7d7 10px 15px,#e2e2e2 15px 20px,#d4d4d4 20px 25px,#cecece 25px 30px,#cccccc 30px 35px) 0 10px/100% 5px no-repeat"></div>
<div style="position:absolute;left:1206px;top:329px;width:10px;height:15px;background:linear-gradient(90deg,#cbd1d7 0px 5px,#c5c5c5 5px 10px) 0 0/100% 5px no-repeat,linear-gradient(90deg,#e1e1e1 0px 5px,#c3c3c3 5px 10px) 0 5px/100% 5px no-repeat,linear-gradient(90deg,#cecece 0px 5px,#c5c5c5 5px 10px) 0 10px/100% 5px no-repeat"></div>
<div style="position:absolute;left:33px;top:355px;width:1184px;height:30px;background:#f2f2f2"></div>
<div style="position:absolute;left:88px;top:355px;width:5px;height:30px;background:#f7f7f7"></div>
<div style="position:absolute;left:116px;top:355px;width:5px;height:30px;background:#f7f7f7"></div>
<div style="position:absolute;left:251px;top:355px;width:5px;height:30px;background:#f7f7f7"></div>
<div style="position:absolute;left:386px;top:355px;width:5px;height:30px;background:#f7f7f7"></div>
<div style="position:absolute;left:446px;top:355px;width:5px;height:30px;background:#f7f7f7"></div>
<div style="position:absolute;left:536px;top:355px;width:5px;height:30px;background:#f7f7f7"></div>
<div style="position:absolute;left:616px;top:355px;width:5px;height:30px;background:#f7f7f7"></div>
<div style="position:absolute;left:696px;top:355px;width:5px;height:30px;background:#f7f7f7"></div>
<div style="position:absolute;left:851px;top:355px;width:5px;height:30px;background:#f7f7f7"></div>
<div style="position:absolute;left:976px;top:355px;width:5px;height:30px;background:#f7f7f7"></div>
<div style="position:absolute;left:1076px;top:355px;width:5px;height:30px;background:#f7f7f7"></div>
<div style="position:absolute;left:88px;top:383px;width:1128px;height:2px;background:#f6f6f6"></div>
<svg style="position:absolute;left:39px;top:362px;" width="15" height="15" viewBox="0 0 15 15"><rect x="1.5" y="1.5" width="12" height="12" rx="2.6" fill="#fff" stroke="#777" stroke-width="1.4"/></svg>
<div style="position:absolute;left:91px;top:359px;width:20px;height:20px;background:linear-gradient(90deg,#f3e6e6 0 5px,#d8948f 5px 10px,#c9897f 10px 15px,#dcdcdc 15px) 0 0/100% 5px no-repeat,linear-gradient(90deg,#f3e5e5 0 5px,#c98a88 5px 15px,#b9b9b9 15px) 0 5px/100% 5px no-repeat,linear-gradient(90deg,transparent 0 5px,#e0d3d3 5px 10px,#e7c2c2 10px 15px,#d8c0c0 15px) 0 10px/100% 5px no-repeat,linear-gradient(90deg,transparent 0 5px,#dadada 5px 10px,#c6c6c6 10px) 0 15px/100% 5px no-repeat"></div>
<div style="position:absolute;left:121px;top:364px;width:85px;height:15px;background:linear-gradient(90deg,#e7e3dd 0px 5px,#e6e6e6 5px 10px,#eeeeee 10px 15px,#ababab 15px 20px,#cdc9c3 20px 25px,#cdd3d9 25px 30px,#f4f0ea 30px 35px,#bbc1c7 35px 40px,#d2d8de 40px 45px,#e2e2e2 45px 50px,#aeaeae 50px 55px,#b4b4b4 55px 60px,#eeeeee 60px 65px,#a8a8a8 65px 70px,#ada9a3 70px 75px,#c8c8c8 75px 80px,#e5e1db 80px 85px) 0 0/100% 5px no-repeat,linear-gradient(90deg,#bababa 0px 5px,#9aa0a6 5px 10px,#8c8c8c 10px 15px,#999fa5 15px 20px,#898989 20px 25px,#c7c7c7 25px 30px,#787878 30px 35px,#9b9b9b 35px 40px,#9a9a9a 40px 45px,#a3a9af 45px 50px,#9ca2a8 50px 55px,#9b9b9b 55px 60px,#c1bdb7 60px 65px,#9e9e9e 65px 70px,#9f9b95 70px 75px,#aaaaaa 75px 80px,#8a8a8a 80px 85px) 0 5px/100% 5px no-repeat,linear-gradient(90deg,#d2cec8 0px 5px,#cecac4 5px 10px,#e2ded8 10px 15px,#dae0e6 15px 20px,#e5e5e5 20px 25px,#ebe7e1 25px 30px,#c8ced4 30px 35px,#ebebeb 35px 40px,#d4d4d4 40px 45px,#bcc2c8 45px 50px,#e4eaf0 50px 55px,#c2c8ce 55px 60px,#e7e7e7 60px 65px,#d6d6d6 65px 70px,#cecece 70px 75px,#d0ccc6 75px 80px,#bfc5cb 80px 85px) 0 10px/100% 5px no-repeat"></div>
<div style="position:absolute;left:256px;top:364px;width:110px;height:15px;background:linear-gradient(90deg,#d4d4d4 0px 5px,#b7bdc3 5px 10px,#a0a6ac 10px 15px,#a5abb1 15px 20px,#bfbfbf 20px 25px,#ebe7e1 25px 30px,#b5b5b5 30px 35px,#d4d4d4 35px 40px,#cfd5db 40px 45px,#e2e2e2 45px 50px,#adadad 50px 55px,#dfdbd5 55px 60px,#a8a49e 60px 65px,#bdb9b3 65px 70px,#bdb9b3 70px 75px,#e2e2e2 75px 80px,#b3b3b3 80px 85px,#bababa 85px 90px,#e3dfd9 90px 95px,#e9e5df 95px 100px,#b2b2b2 100px 105px,#afafaf 105px 110px) 0 0/100% 5px no-repeat,linear-gradient(90deg,#878d93 0px 5px,#b4bac0 5px 10px,#8c8c8c 10px 15px,#c5c5c5 15px 20px,#bebebe 20px 25px,#898989 25px 30px,#aeaaa4 30px 35px,#727272 35px 40px,#979797 40px 45px,#adb3b9 45px 50px,#8a8a8a 50px 55px,#99958f 55px 60px,#b2b8be 60px 65px,#969696 65px 70px,#c1c7cd 70px 75px,#c2c2c2 75px 80px,#9c9c9c 80px 85px,#b9b9b9 85px 90px,#aeaeae 90px 95px,#bac0c6 95px 100px,#a4a09a 100px 105px,#999999 105px 110px) 0 5px/100% 5px no-repeat,linear-gradient(90deg,#cdd3d9 0px 5px,#d8d4ce 5px 10px,#bdbdbd 10px 15px,#e1e1e1 15px 20px,#f2eee8 20px 25px,#d9d5cf 25px 30px,#d6d6d6 30px 35px,#dbdbdb 35px 40px,#d7dde3 40px 45px,#c1c1c1 45px 50px,#ebe7e1 50px 55px,#dbdbdb 55px 60px,#c2c2c2 60px 65px,#e6e2dc 65px 70px,#e0e6ec 70px 75px,#d6d6d6 75px 80px,#c6c6c6 80px 85px,#dadada 85px 90px,#e9e9e9 90px 95px,#cfd5db 95px 100px,#d8d8d8 100px 105px,#c2c2c2 105px 110px) 0 10px/100% 5px no-repeat"></div>
<div style="position:absolute;left:391px;top:364px;width:15px;height:15px;background:linear-gradient(90deg,#a6a6a6 0px 5px,#b4b0aa 5px 10px,#e2e2e2 10px 15px) 0 0/100% 5px no-repeat,linear-gradient(90deg,#a2a2a2 0px 5px,#a4aab0 5px 10px,#a3a3a3 10px 15px) 0 5px/100% 5px no-repeat,linear-gradient(90deg,#e5ebf1 0px 5px,#cdd3d9 5px 10px,#c0c6cc 10px 15px) 0 10px/100% 5px no-repeat"></div>
<div style="position:absolute;left:451px;top:364px;width:90px;height:15px;background:linear-gradient(90deg,#c3c3c3 0px 5px,#e4e4e4 5px 10px,#d6d2cc 10px 15px,#d1d7dd 15px 20px,#cccccc 20px 25px,#ced4da 25px 30px,#ebe7e1 30px 35px,#dbd7d1 35px 40px,#d3d3d3 40px 45px,#c0c0c0 45px 50px,#c4c0ba 50px 55px,#ece8e2 55px 60px,#e9e5df 60px 65px,#c9c9c9 65px 70px,#cbcbcb 70px 75px,#a8a8a8 75px 80px,#aba7a1 80px 85px,#c2c2c2 85px 90px) 0 0/100% 5px no-repeat,linear-gradient(90deg,#bcb8b2 0px 5px,#cfcbc5 5px 10px,#c4c0ba 10px 15px,#c7c7c7 15px 20px,#95918b 20px 25px,#9c9892 25px 30px,#aab0b6 30px 35px,#b6b6b6 35px 40px,#b0b0b0 40px 45px,#cac6c0 45px 50px,#b8b8b8 50px 55px,#bab6b0 55px 60px,#9f9f9f 60px 65px,#75716b 65px 70px,#b1ada7 70px 75px,#c0c6cc 75px 80px,#939393 80px 85px,#b3afa9 85px 90px) 0 5px/100% 5px no-repeat,linear-gradient(90deg,#c5c1bb 0px 5px,#d6d6d6 5px 10px,#cdcdcd 10px 15px,#d5d5d5 15px 20px,#e7edf3 20px 25px,#c1c1c1 25px 30px,#e9e5df 30px 35px,#e0e6ec 35px 40px,#d2d2d2 40px 45px,#cecece 45px 50px,#b9bfc5 50px 55px,#eeeae4 55px 60px,#c2c2c2 60px 65px,#d4dae0 65px 70px,#b6bcc2 70px 75px,#bbbbbb 75px 80px,#bcbcbc 80px 85px,#c8c8c8 85px 90px) 0 10px/100% 5px no-repeat"></div>
<div style="position:absolute;left:546px;top:364px;width:30px;height:15px;background:linear-gradient(90deg,#b3b3b3 0px 5px,#f1ede7 5px 10px,#cbcbcb 10px 15px,#dcdcdc 15px 20px,#bcbcbc 20px 25px,#e4e4e4 25px 30px) 0 0/100% 5px no-repeat,linear-gradient(90deg,#9a9a9a 0px 5px,#a4aab0 5px 10px,#b1ada7 10px 15px,#9c9c9c 15px 20px,#a2a8ae 20px 25px,#9b9791 25px 30px) 0 5px/100% 5px no-repeat,linear-gradient(90deg,#bababa 0px 5px,#cdd3d9 5px 10px,#bec4ca 10px 15px,#cacaca 15px 20px,#eaeaea 20px 25px,#dedad4 25px 30px) 0 10px/100% 5px no-repeat"></div>
<div style="position:absolute;left:626px;top:364px;width:45px;height:15px;background:linear-gradient(90deg,#c9cfd5 0px 5px,#dcdcdc 5px 10px,#a4a4a4 10px 15px,#bbb7b1 15px 20px,#acacac 20px 25px,#acb2b8 25px 30px,#cfcfcf 30px 35px,#aeaeae 35px 40px,#cfcfcf 40px 45px) 0 0/100% 5px no-repeat,linear-gradient(90deg,#c7c3bd 0px 5px,#929292 5px 10px,#adb3b9 10px 15px,#9c9c9c 15px 20px,#9da3a9 20px 25px,#8f8b85 25px 30px,#b0b0b0 30px 35px,#aeaeae 35px 40px,#868686 40px 45px) 0 5px/100% 5px no-repeat,linear-gradient(90deg,#ededed 0px 5px,#e5e1db 5px 10px,#c2c2c2 10px 15px,#bebebe 15px 20px,#d6d6d6 20px 25px,#d8dee4 25px 30px,#e0e0e0 30px 35px,#dde3e9 35px 40px,#e2e2e2 40px 45px) 0 10px/100% 5px no-repeat"></div>
<div style="position:absolute;left:706px;top:364px;width:145px;height:15px;background:linear-gradient(90deg,#b5b5b5 0px 5px,#a9a9a9 5px 10px,#cfd5db 10px 15px,#eeeeee 15px 20px,#aca8a2 20px 25px,#a3a3a3 25px 30px,#a9afb5 30px 35px,#aaaaaa 35px 40px,#eeeae4 40px 45px,#dddddd 45px 50px,#c2c8ce 50px 55px,#dbe1e7 55px 60px,#e7e7e7 60px 65px,#a4a4a4 65px 70px,#e4e4e4 70px 75px,#bfbfbf 75px 80px,#cdd3d9 80px 85px,#afb5bb 85px 90px,#afafaf 90px 95px,#b2b8be 95px 100px,#cccccc 100px 105px,#e4e4e4 105px 110px,#dce2e8 110px 115px,#cbc7c1 115px 120px,#d5d5d5 120px 125px,#c9cfd5 125px 130px,#e5e5e5 130px 135px,#e4e4e4 135px 140px,#f4f0ea 140px 145px) 0 0/100% 5px no-repeat,linear-gradient(90deg,#938f89 0px 5px,#c3c3c3 5px 10px,#8c8c8c 10px 15px,#8c8c8c 15px 20px,#b6b6b6 20px 25px,#888888 25px 30px,#686e74 30px 35px,#a9a59f 35px 40px,#c9c9c9 40px 45px,#94908a 45px 50px,#a3a3a3 50px 55px,#909090 55px 60px,#8d8d8d 60px 65px,#c0c6cc 65px 70px,#c7c7c7 70px 75px,#949aa0 75px 80px,#6c6c6c 80px 85px,#b1ada7 85px 90px,#b4b4b4 90px 95px,#ababab 95px 100px,#bdc3c9 100px 105px,#9b9b9b 105px 110px,#a0a0a0 110px 115px,#95918b 115px 120px,#abb1b7 120px 125px,#abb1b7 125px 130px,#939393 130px 135px,#c1bdb7 135px 140px,#b5b5b5 140px 145px) 0 5px/100% 5px no-repeat,linear-gradient(90deg,#d6d6d6 0px 5px,#bababa 5px 10px,#d4d4d4 10px 15px,#c6c6c6 15px 20px,#c9cfd5 20px 25px,#d5d5d5 25px 30px,#cacaca 30px 35px,#c1c7cd 35px 40px,#e9e9e9 40px 45px,#d1d7dd 45px 50px,#c1c1c1 50px 55px,#d5d5d5 55px 60px,#c6c6c6 60px 65px,#d1d1d1 65px 70px,#eeeae4 70px 75px,#cdcdcd 75px 80px,#bcc2c8 80px 85px,#bfbfbf 85px 90px,#dbd7d1 90px 95px,#cecece 95px 100px,#d1d1d1 100px 105px,#e1e1e1 105px 110px,#c9cfd5 110px 115px,#c9cfd5 115px 120px,#bababa 120px 125px,#bdbdbd 125px 130px,#c4cad0 130px 135px,#e5e5e5 135px 140px,#e6e6e6 140px 145px) 0 10px/100% 5px no-repeat"></div>
<div style="position:absolute;left:856px;top:364px;width:25px;height:15px;background:linear-gradient(90deg,#dae0e6 0px 5px,#9ea4aa 5px 10px,#d8d8d8 10px 15px,#ced4da 15px 20px,#bdbdbd 20px 25px) 0 0/100% 5px no-repeat,linear-gradient(90deg,#939393 0px 5px,#9ba1a7 5px 10px,#868c92 10px 15px,#a9a9a9 15px 20px,#6e6e6e 20px 25px) 0 5px/100% 5px no-repeat,linear-gradient(90deg,#d2d2d2 0px 5px,#d2d2d2 5px 10px,#d3d3d3 10px 15px,#dcdcdc 15px 20px,#bcbcbc 20px 25px) 0 10px/100% 5px no-repeat"></div>
<div style="position:absolute;left:986px;top:364px;width:35px;height:15px;background:linear-gradient(90deg,#e2ded8 0px 5px,#b0b0b0 5px 10px,#a7a7a7 10px 15px,#cccccc 15px 20px,#ddd9d3 20px 25px,#d6d6d6 25px 30px,#eeeeee 30px 35px) 0 0/100% 5px no-repeat,linear-gradient(90deg,#8f8f8f 0px 5px,#82888e 5px 10px,#93999f 10px 15px,#c0c0c0 15px 20px,#666666 20px 25px,#b8bec4 25px 30px,#696f75 30px 35px) 0 5px/100% 5px no-repeat,linear-gradient(90deg,#d2d2d2 0px 5px,#c9cfd5 5px 10px,#efebe5 10px 15px,#cacaca 15px 20px,#d3d9df 20px 25px,#e3e3e3 25px 30px,#e3e3e3 30px 35px) 0 10px/100% 5px no-repeat"></div>
<div style="position:absolute;left:1081px;top:364px;width:135px;height:15px;background:linear-gradient(90deg,#e9e9e9 0px 5px,#a3a3a3 5px 10px,#a8a49e 10px 15px,#cecece 15px 20px,#cbcbcb 20px 25px,#d0d6dc 25px 30px,#b5b1ab 30px 35px,#eeeae4 35px 40px,#a6a6a6 40px 45px,#bcc2c8 45px 50px,#ede9e3 50px 55px,#a9a59f 55px 60px,#dde3e9 60px 65px,#cdcdcd 65px 70px,#a7adb3 70px 75px,#e2e2e2 75px 80px,#f3efe9 80px 85px,#b9bfc5 85px 90px,#cacaca 90px 95px,#d9d9d9 95px 100px,#aeaaa4 100px 105px,#e8e8e8 105px 110px,#c5cbd1 110px 115px,#dbdbdb 115px 120px,#a6a6a6 120px 125px,#d4d0ca 125px 130px,#aaaaaa 130px 135px) 0 0/100% 5px no-repeat,linear-gradient(90deg,#bfbfbf 0px 5px,#888888 5px 10px,#9d9d9d 10px 15px,#898989 15px 20px,#9c9892 20px 25px,#c1bdb7 25px 30px,#acacac 30px 35px,#bbbbbb 35px 40px,#8e8a84 40px 45px,#b1b1b1 45px 50px,#9d9d9d 50px 55px,#919191 55px 60px,#9c9c9c 60px 65px,#aca8a2 65px 70px,#c1c1c1 70px 75px,#aaaaaa 75px 80px,#919191 80px 85px,#9e9e9e 85px 90px,#8f959b 90px 95px,#c1c1c1 95px 100px,#878787 100px 105px,#bbbbbb 105px 110px,#9b9791 110px 115px,#686868 115px 120px,#9f9b95 120px 125px,#adadad 125px 130px,#c1bdb7 130px 135px) 0 5px/100% 5px no-repeat,linear-gradient(90deg,#c6c6c6 0px 5px,#bcbcbc 5px 10px,#e4e4e4 10px 15px,#d8d4ce 15px 20px,#eaeaea 20px 25px,#bebebe 25px 30px,#d9dfe5 30px 35px,#bdc3c9 35px 40px,#cbcbcb 40px 45px,#e3e3e3 45px 50px,#e2e2e2 50px 55px,#dbdbdb 55px 60px,#ebe7e1 60px 65px,#e5e1db 65px 70px,#ececec 70px 75px,#c1c1c1 75px 80px,#e9e9e9 80px 85px,#e3e3e3 85px 90px,#e4e4e4 90px 95px,#c9c9c9 95px 100px,#ebebeb 100px 105px,#e2e2e2 105px 110px,#c6c6c6 110px 115px,#c6c6c6 115px 120px,#d9dfe5 120px 125px,#e2e2e2 125px 130px,#eaeaea 130px 135px) 0 10px/100% 5px no-repeat"></div>
<svg style="position:absolute;left:39px;top:397px;" width="15" height="15" viewBox="0 0 15 15"><rect x="1.5" y="1.5" width="12" height="12" rx="2.6" fill="#fff" stroke="#777" stroke-width="1.4"/></svg>
<div style="position:absolute;left:91px;top:394px;width:20px;height:20px;background:linear-gradient(90deg,#f3e6e6 0 5px,#d8948f 5px 10px,#c9897f 10px 15px,#dcdcdc 15px) 0 0/100% 5px no-repeat,linear-gradient(90deg,#f3e5e5 0 5px,#c98a88 5px 15px,#b9b9b9 15px) 0 5px/100% 5px no-repeat,linear-gradient(90deg,transparent 0 5px,#e0d3d3 5px 10px,#e7c2c2 10px 15px,#d8c0c0 15px) 0 10px/100% 5px no-repeat,linear-gradient(90deg,transparent 0 5px,#dadada 5px 10px,#c6c6c6 10px) 0 15px/100% 5px no-repeat"></div>
<div style="position:absolute;left:121px;top:399px;width:60px;height:15px;background:linear-gradient(90deg,#a5a5a5 0px 5px,#bababa 5px 10px,#dedede 10px 15px,#a0a0a0 15px 20px,#c0c0c0 20px 25px,#b5bbc1 25px 30px,#dee4ea 30px 35px,#a6a6a6 35px 40px,#c2c2c2 40px 45px,#aeaaa4 45px 50px,#dce2e8 50px 55px,#e7edf3 55px 60px) 0 0/100% 5px no-repeat,linear-gradient(90deg,#c2c2c2 0px 5px,#a0a0a0 5px 10px,#aeaaa4 10px 15px,#bebebe 15px 20px,#868686 20px 25px,#a0a6ac 25px 30px,#9d9d9d 30px 35px,#bcc2c8 35px 40px,#c5c5c5 40px 45px,#8b8b8b 45px 50px,#c7c7c7 50px 55px,#b0b0b0 55px 60px) 0 5px/100% 5px no-repeat,linear-gradient(90deg,#dddddd 0px 5px,#d2cec8 5px 10px,#e5e5e5 10px 15px,#d1d1d1 15px 20px,#e5e1db 20px 25px,#cacaca 25px 30px,#e8e8e8 30px 35px,#d3d9df 35px 40px,#dce2e8 40px 45px,#e1e1e1 45px 50px,#cfcfcf 50px 55px,#dfe5eb 55px 60px) 0 10px/100% 5px no-repeat"></div>
<div style="position:absolute;left:187px;top:399px;width:50px;height:15px;background:linear-gradient(90deg,#ececec 0px 5px,#b5b5b5 5px 10px,#dde3e9 10px 15px,#aaaaaa 15px 20px,#b1ada7 20px 25px,#b3b9bf 25px 30px,#bdbdbd 30px 35px,#adadad 35px 40px,#aeaeae 40px 45px,#a3a9af 45px 50px) 0 0/100% 5px no-repeat,linear-gradient(90deg,#9ca2a8 0px 5px,#939393 5px 10px,#bebebe 10px 15px,#9b9b9b 15px 20px,#a5a5a5 20px 25px,#b5bbc1 25px 30px,#c0c6cc 30px 35px,#b0b0b0 35px 40px,#888888 40px 45px,#9aa0a6 45px 50px) 0 5px/100% 5px no-repeat,linear-gradient(90deg,#c6c6c6 0px 5px,#e1e1e1 5px 10px,#e0e6ec 10px 15px,#dbdbdb 15px 20px,#d9dfe5 20px 25px,#e6ecf2 25px 30px,#cad0d6 30px 35px,#c3c3c3 35px 40px,#d5d5d5 40px 45px,#c6c2bc 45px 50px) 0 10px/100% 5px no-repeat"></div>
<div style="position:absolute;left:256px;top:399px;width:45px;height:15px;background:linear-gradient(90deg,#c0c0c0 0px 5px,#d4d4d4 5px 10px,#cccccc 10px 15px,#e4e0da 15px 20px,#d4d4d4 20px 25px,#e6e6e6 25px 30px,#e0e0e0 30px 35px,#a9a9a9 35px 40px,#d5d1cb 40px 45px) 0 0/100% 5px no-repeat,linear-gradient(90deg,#abb1b7 0px 5px,#9a9690 5px 10px,#b3b3b3 10px 15px,#a4a09a 15px 20px,#c5c1bb 20px 25px,#acb2b8 25px 30px,#8a8a8a 30px 35px,#7b7771 35px 40px,#91979d 40px 45px) 0 5px/100% 5px no-repeat,linear-gradient(90deg,#c7cdd3 0px 5px,#e3e3e3 5px 10px,#eae6e0 10px 15px,#e2e2e2 15px 20px,#d0d0d0 20px 25px,#dfdfdf 25px 30px,#d0d6dc 30px 35px,#e7e7e7 35px 40px,#ebebeb 40px 45px) 0 10px/100% 5px no-repeat"></div>
<div style="position:absolute;left:391px;top:399px;width:15px;height:15px;background:linear-gradient(90deg,#aaa6a0 0px 5px,#c3c3c3 5px 10px,#c9c5bf 10px 15px) 0 0/100% 5px no-repeat,linear-gradient(90deg,#a7a39d 0px 5px,#b8b8b8 5px 10px,#99958f 10px 15px) 0 5px/100% 5px no-repeat,linear-gradient(90deg,#c7c7c7 0px 5px,#ececec 5px 10px,#e9e9e9 10px 15px) 0 10px/100% 5px no-repeat"></div>
<div style="position:absolute;left:451px;top:399px;width:65px;height:15px;background:linear-gradient(90deg,#aaa6a0 0px 5px,#e4e4e4 5px 10px,#bab6b0 10px 15px,#cdd3d9 15px 20px,#9ea4aa 20px 25px,#e6e6e6 25px 30px,#ada9a3 30px 35px,#dddddd 35px 40px,#e7e7e7 40px 45px,#e6e2dc 45px 50px,#c8ced4 50px 55px,#b3b3b3 55px 60px,#d7d7d7 60px 65px) 0 0/100% 5px no-repeat,linear-gradient(90deg,#9fa5ab 0px 5px,#c3bfb9 5px 10px,#868686 10px 15px,#757575 15px 20px,#777777 20px 25px,#8a8a8a 25px 30px,#c2c2c2 30px 35px,#939393 35px 40px,#a0a0a0 40px 45px,#8e8e8e 45px 50px,#adadad 50px 55px,#78746e 55px 60px,#a6a6a6 60px 65px) 0 5px/100% 5px no-repeat,linear-gradient(90deg,#dfdfdf 0px 5px,#e3dfd9 5px 10px,#efebe5 10px 15px,#c2c8ce 15px 20px,#cecece 20px 25px,#e0dcd6 25px 30px,#bebebe 30px 35px,#b7bdc3 35px 40px,#eaeaea 40px 45px,#eaeaea 45px 50px,#cdc9c3 50px 55px,#e1e1e1 55px 60px,#dedede 60px 65px) 0 10px/100% 5px no-repeat"></div>
<div style="position:absolute;left:546px;top:399px;width:20px;height:15px;background:linear-gradient(90deg,#b2aea8 0px 5px,#dddddd 5px 10px,#9f9f9f 10px 15px,#e0e0e0 15px 20px) 0 0/100% 5px no-repeat,linear-gradient(90deg,#b4b0aa 0px 5px,#858b91 5px 10px,#79756f 10px 15px,#bebebe 15px 20px) 0 5px/100% 5px no-repeat,linear-gradient(90deg,#bcc2c8 0px 5px,#d0d0d0 5px 10px,#dcd8d2 10px 15px,#dfdfdf 15px 20px) 0 10px/100% 5px no-repeat"></div>
<div style="position:absolute;left:626px;top:399px;width:30px;height:15px;background:linear-gradient(90deg,#a3a9af 0px 5px,#dbdbdb 5px 10px,#f3efe9 10px 15px,#a4a4a4 15px 20px,#cecece 20px 25px,#bfbfbf 25px 30px) 0 0/100% 5px no-repeat,linear-gradient(90deg,#c4c4c4 0px 5px,#c4c4c4 5px 10px,#888888 10px 15px,#a9a59f 15px 20px,#c6c6c6 20px 25px,#93999f 25px 30px) 0 5px/100% 5px no-repeat,linear-gradient(90deg,#cacaca 0px 5px,#ededed 5px 10px,#e1e1e1 10px 15px,#dde3e9 15px 20px,#cbd1d7 20px 25px,#e4eaf0 25px 30px) 0 10px/100% 5px no-repeat"></div>
<div style="position:absolute;left:706px;top:399px;width:145px;height:15px;background:linear-gradient(90deg,#dcdcdc 0px 5px,#e4e0da 5px 10px,#e1e1e1 10px 15px,#bcbcbc 15px 20px,#ababab 20px 25px,#cacaca 25px 30px,#e8e8e8 30px 35px,#a2a8ae 35px 40px,#e3e9ef 40px 45px,#dedad4 45px 50px,#c2c2c2 50px 55px,#d6dce2 55px 60px,#b3b3b3 60px 65px,#afafaf 65px 70px,#d2d2d2 70px 75px,#cad0d6 75px 80px,#aaa6a0 80px 85px,#c1bdb7 85px 90px,#c6c6c6 90px 95px,#bab6b0 95px 100px,#a7a7a7 100px 105px,#d6d6d6 105px 110px,#a2a8ae 110px 115px,#e1e1e1 115px 120px,#b1b1b1 120px 125px,#dad6d0 125px 130px,#b4b0aa 130px 135px,#d3d3d3 135px 140px,#b3afa9 140px 145px) 0 0/100% 5px no-repeat,linear-gradient(90deg,#c8c8c8 0px 5px,#b2aea8 5px 10px,#8d8983 10px 15px,#c7c7c7 15px 20px,#8b9197 20px 25px,#a4a09a 25px 30px,#92989e 30px 35px,#9ba1a7 35px 40px,#8f959b 40px 45px,#9e9e9e 45px 50px,#707070 50px 55px,#706c66 55px 60px,#aba7a1 60px 65px,#94908a 65px 70px,#9b9791 70px 75px,#8a8a8a 75px 80px,#cbc7c1 80px 85px,#959595 85px 90px,#c1c1c1 90px 95px,#8d8d8d 95px 100px,#969696 100px 105px,#90969c 105px 110px,#c4c4c4 110px 115px,#878d93 115px 120px,#8f959b 120px 125px,#8e8e8e 125px 130px,#707070 130px 135px,#878787 135px 140px,#aaaaaa 140px 145px) 0 5px/100% 5px no-repeat,linear-gradient(90deg,#dfdbd5 0px 5px,#e3e3e3 5px 10px,#e6e6e6 10px 15px,#c3c3c3 15px 20px,#e4eaf0 20px 25px,#c1bdb7 25px 30px,#c3c3c3 30px 35px,#eaeaea 35px 40px,#b6bcc2 40px 45px,#d2d2d2 45px 50px,#d3d3d3 50px 55px,#c1c7cd 55px 60px,#e9eff5 60px 65px,#ebebeb 65px 70px,#d1cdc7 70px 75px,#cdcdcd 75px 80px,#b6bcc2 80px 85px,#d1d1d1 85px 90px,#c7c3bd 90px 95px,#f1ede7 95px 100px,#d5d5d5 100px 105px,#c2beb8 105px 110px,#d8d8d8 110px 115px,#e8e8e8 115px 120px,#ebebeb 120px 125px,#cfcfcf 125px 130px,#bbc1c7 130px 135px,#c9c9c9 135px 140px,#cfcfcf 140px 145px) 0 10px/100% 5px no-repeat"></div>
<div style="position:absolute;left:856px;top:399px;width:20px;height:15px;background:linear-gradient(90deg,#dfdfdf 0px 5px,#a8a8a8 5px 10px,#cdcdcd 10px 15px,#f1ede7 15px 20px) 0 0/100% 5px no-repeat,linear-gradient(90deg,#c9c5bf 0px 5px,#b1b7bd 5px 10px,#9e9e9e 10px 15px,#8a8a8a 15px 20px) 0 5px/100% 5px no-repeat,linear-gradient(90deg,#d2d2d2 0px 5px,#bababa 5px 10px,#e4e0da 10px 15px,#e7edf3 15px 20px) 0 10px/100% 5px no-repeat"></div>
<div style="position:absolute;left:986px;top:399px;width:35px;height:15px;background:linear-gradient(90deg,#bdc3c9 0px 5px,#bfbfbf 5px 10px,#adb3b9 10px 15px,#dad6d0 15px 20px,#acb2b8 20px 25px,#a1a1a1 25px 30px,#c0c0c0 30px 35px) 0 0/100% 5px no-repeat,linear-gradient(90deg,#c2c8ce 0px 5px,#bbb7b1 5px 10px,#77736d 10px 15px,#9f9f9f 15px 20px,#bebebe 20px 25px,#bbb7b1 25px 30px,#b6bcc2 30px 35px) 0 5px/100% 5px no-repeat,linear-gradient(90deg,#e4e4e4 0px 5px,#ede9e3 5px 10px,#bababa 10px 15px,#cecac4 15px 20px,#c9c5bf 20px 25px,#c5c5c5 25px 30px,#f3efe9 30px 35px) 0 10px/100% 5px no-repeat"></div>
<div style="position:absolute;left:1081px;top:404px;width:45px;height:5px;background:#d9d6d6"></div>
<div style="position:absolute;left:1131px;top:399px;width:30px;height:15px;background:linear-gradient(90deg,#efebe5 0px 5px,#b5bbc1 5px 10px,#bcc2c8 10px 15px,#a9a59f 15px 20px,#a6a6a6 20px 25px,#b4b4b4 25px 30px) 0 0/100% 5px no-repeat,linear-gradient(90deg,#a39f99 0px 5px,#cbc7c1 5px 10px,#8c9298 10px 15px,#b6b6b6 15px 20px,#bcbcbc 20px 25px,#939393 25px 30px) 0 5px/100% 5px no-repeat,linear-gradient(90deg,#e9e5df 0px 5px,#e2ded8 5px 10px,#cac6c0 10px 15px,#d6dce2 15px 20px,#d0d0d0 20px 25px,#b7bdc3 25px 30px) 0 10px/100% 5px no-repeat"></div>
<div style="position:absolute;left:1166px;top:399px;width:35px;height:15px;background:linear-gradient(90deg,#b6b6b6 0px 5px,#ccd2d8 5px 10px,#b3b9bf 10px 15px,#ababab 15px 20px,#e1e1e1 20px 25px,#dae0e6 25px 30px,#d8d8d8 30px 35px) 0 0/100% 5px no-repeat,linear-gradient(90deg,#726e68 0px 5px,#c5c5c5 5px 10px,#939393 10px 15px,#a9a9a9 15px 20px,#afaba5 20px 25px,#8a8a8a 25px 30px,#93999f 30px 35px) 0 5px/100% 5px no-repeat,linear-gradient(90deg,#cacaca 0px 5px,#e2e2e2 5px 10px,#eaeaea 10px 15px,#bfbfbf 15px 20px,#c8c8c8 20px 25px,#e9e9e9 25px 30px,#e0dcd6 30px 35px) 0 10px/100% 5px no-repeat"></div>
<div style="position:absolute;left:1206px;top:399px;width:10px;height:15px;background:linear-gradient(90deg,#e1e1e1 0px 5px,#b1ada7 5px 10px) 0 0/100% 5px no-repeat,linear-gradient(90deg,#656565 0px 5px,#b5b1ab 5px 10px) 0 5px/100% 5px no-repeat,linear-gradient(90deg,#c5c5c5 0px 5px,#c5c5c5 5px 10px) 0 10px/100% 5px no-repeat"></div>
<div style="position:absolute;left:33px;top:425px;width:1184px;height:30px;background:#f2f2f2"></div>
<div style="position:absolute;left:88px;top:425px;width:5px;height:30px;background:#f7f7f7"></div>
<div style="position:absolute;left:116px;top:425px;width:5px;height:30px;background:#f7f7f7"></div>
<div style="position:absolute;left:251px;top:425px;width:5px;height:30px;background:#f7f7f7"></div>
<div style="position:absolute;left:386px;top:425px;width:5px;height:30px;background:#f7f7f7"></div>
<div style="position:absolute;left:446px;top:425px;width:5px;height:30px;background:#f7f7f7"></div>
<div style="position:absolute;left:536px;top:425px;width:5px;height:30px;background:#f7f7f7"></div>
<div style="position:absolute;left:616px;top:425px;width:5px;height:30px;background:#f7f7f7"></div>
<div style="position:absolute;left:696px;top:425px;width:5px;height:30px;background:#f7f7f7"></div>
<div style="position:absolute;left:851px;top:425px;width:5px;height:30px;background:#f7f7f7"></div>
<div style="position:absolute;left:976px;top:425px;width:5px;height:30px;background:#f7f7f7"></div>
<div style="position:absolute;left:1076px;top:425px;width:5px;height:30px;background:#f7f7f7"></div>
<div style="position:absolute;left:88px;top:453px;width:1128px;height:2px;background:#f6f6f6"></div>
<svg style="position:absolute;left:39px;top:432px;" width="15" height="15" viewBox="0 0 15 15"><rect x="1.5" y="1.5" width="12" height="12" rx="2.6" fill="#fff" stroke="#777" stroke-width="1.4"/></svg>
<div style="position:absolute;left:91px;top:429px;width:20px;height:20px;background:linear-gradient(90deg,#f3e6e6 0 5px,#d8948f 5px 10px,#c9897f 10px 15px,#dcdcdc 15px) 0 0/100% 5px no-repeat,linear-gradient(90deg,#f3e5e5 0 5px,#c98a88 5px 15px,#b9b9b9 15px) 0 5px/100% 5px no-repeat,linear-gradient(90deg,transparent 0 5px,#e0d3d3 5px 10px,#e7c2c2 10px 15px,#d8c0c0 15px) 0 10px/100% 5px no-repeat,linear-gradient(90deg,transparent 0 5px,#dadada 5px 10px,#c6c6c6 10px) 0 15px/100% 5px no-repeat"></div>
<div style="position:absolute;left:121px;top:434px;width:40px;height:15px;background:linear-gradient(90deg,#c7c3bd 0px 5px,#b8b4ae 5px 10px,#b3b3b3 10px 15px,#e7e7e7 15px 20px,#cfcfcf 20px 25px,#dedad4 25px 30px,#b4b0aa 30px 35px,#dce2e8 35px 40px) 0 0/100% 5px no-repeat,linear-gradient(90deg,#979797 0px 5px,#8c9298 5px 10px,#8d9399 10px 15px,#929292 15px 20px,#c6c2bc 20px 25px,#b9b9b9 25px 30px,#c6c6c6 30px 35px,#b9bfc5 35px 40px) 0 5px/100% 5px no-repeat,linear-gradient(90deg,#c9cfd5 0px 5px,#bfbfbf 5px 10px,#cfcfcf 10px 15px,#e1e1e1 15px 20px,#e3e3e3 20px 25px,#dde3e9 25px 30px,#dcdcdc 30px 35px,#bcc2c8 35px 40px) 0 10px/100% 5px no-repeat"></div>
<div style="position:absolute;left:256px;top:434px;width:75px;height:15px;background:linear-gradient(90deg,#e0e0e0 0px 5px,#e8e4de 5px 10px,#eaeaea 10px 15px,#d3d3d3 15px 20px,#c6ccd2 20px 25px,#dddddd 25px 30px,#acb2b8 30px 35px,#ada9a3 35px 40px,#e4e0da 40px 45px,#aaa6a0 45px 50px,#c3c3c3 50px 55px,#ebebeb 55px 60px,#e6e6e6 60px 65px,#d9d9d9 65px 70px,#cccccc 70px 75px) 0 0/100% 5px no-repeat,linear-gradient(90deg,#bebebe 0px 5px,#a2a2a2 5px 10px,#90969c 10px 15px,#cdc9c3 15px 20px,#6e6e6e 20px 25px,#bcb8b2 25px 30px,#a9a9a9 30px 35px,#9e9e9e 35px 40px,#bcbcbc 40px 45px,#c5cbd1 45px 50px,#b2b8be 50px 55px,#9a9a9a 55px 60px,#929292 60px 65px,#b3b3b3 65px 70px,#c9c9c9 70px 75px) 0 5px/100% 5px no-repeat,linear-gradient(90deg,#c3c3c3 0px 5px,#dde3e9 5px 10px,#f0ece6 10px 15px,#d4d4d4 15px 20px,#ebebeb 20px 25px,#d7d7d7 25px 30px,#e3e3e3 30px 35px,#c7c7c7 35px 40px,#dad6d0 40px 45px,#bababa 45px 50px,#dce2e8 50px 55px,#d4d4d4 55px 60px,#e9e9e9 60px 65px,#dfdfdf 65px 70px,#dedede 70px 75px) 0 10px/100% 5px no-repeat"></div>
<div style="position:absolute;left:391px;top:434px;width:15px;height:15px;background:linear-gradient(90deg,#e9e9e9 0px 5px,#c8c4be 5px 10px,#e4e0da 10px 15px) 0 0/100% 5px no-repeat,linear-gradient(90deg,#a5a5a5 0px 5px,#989ea4 5px 10px,#939393 10px 15px) 0 5px/100% 5px no-repeat,linear-gradient(90deg,#e0dcd6 0px 5px,#cbc7c1 5px 10px,#d0ccc6 10px 15px) 0 10px/100% 5px no-repeat"></div>
<div style="position:absolute;left:451px;top:434px;width:90px;height:15px;background:linear-gradient(90deg,#c5c5c5 0px 5px,#c5c5c5 5px 10px,#b4b0aa 10px 15px,#acacac 15px 20px,#e8eef4 20px 25px,#c1c1c1 25px 30px,#bebebe 30px 35px,#cccccc 35px 40px,#d9d9d9 40px 45px,#e8e8e8 45px 50px,#b6b6b6 50px 55px,#dfdbd5 55px 60px,#bcbcbc 60px 65px,#cad0d6 65px 70px,#eaeaea 70px 75px,#adadad 75px 80px,#dbe1e7 80px 85px,#c1c7cd 85px 90px) 0 0/100% 5px no-repeat,linear-gradient(90deg,#c2c2c2 0px 5px,#c5c5c5 5px 10px,#9c9c9c 10px 15px,#b7bdc3 15px 20px,#a0a0a0 20px 25px,#a6acb2 25px 30px,#bdbdbd 30px 35px,#8d8983 35px 40px,#b8bec4 40px 45px,#898989 45px 50px,#b6b6b6 50px 55px,#b1ada7 55px 60px,#cac6c0 60px 65px,#b4bac0 65px 70px,#8c8c8c 70px 75px,#b4b0aa 75px 80px,#8f8b85 80px 85px,#bcb8b2 85px 90px) 0 5px/100% 5px no-repeat,linear-gradient(90deg,#c2c2c2 0px 5px,#d8dee4 5px 10px,#e8eef4 10px 15px,#c7c7c7 15px 20px,#f3efe9 20px 25px,#bfc5cb 25px 30px,#e0e0e0 30px 35px,#dddddd 35px 40px,#e3e3e3 40px 45px,#e3e9ef 45px 50px,#cecece 50px 55px,#efebe5 55px 60px,#c3c3c3 60px 65px,#bababa 65px 70px,#d4d4d4 70px 75px,#cfcfcf 75px 80px,#dfdfdf 80px 85px,#ebebeb 85px 90px) 0 10px/100% 5px no-repeat"></div>
<div style="position:absolute;left:546px;top:434px;width:30px;height:15px;background:linear-gradient(90deg,#b4bac0 0px 5px,#e7e7e7 5px 10px,#e0e0e0 10px 15px,#b4bac0 15px 20px,#cfcfcf 20px 25px,#c6c6c6 25px 30px) 0 0/100% 5px no-repeat,linear-gradient(90deg,#8b8b8b 0px 5px,#909090 5px 10px,#c3c3c3 10px 15px,#c5c5c5 15px 20px,#928e88 20px 25px,#c1c1c1 25px 30px) 0 5px/100% 5px no-repeat,linear-gradient(90deg,#c7c7c7 0px 5px,#bfbfbf 5px 10px,#c1c7cd 10px 15px,#cdcdcd 15px 20px,#ededed 20px 25px,#e4e4e4 25px 30px) 0 10px/100% 5px no-repeat"></div>
<div style="position:absolute;left:626px;top:434px;width:35px;height:15px;background:linear-gradient(90deg,#e4e4e4 0px 5px,#c4c4c4 5px 10px,#b0aca6 10px 15px,#eeeeee 15px 20px,#a5abb1 20px 25px,#b8b4ae 25px 30px,#c5c5c5 30px 35px) 0 0/100% 5px no-repeat,linear-gradient(90deg,#6a6a6a 0px 5px,#b2b8be 5px 10px,#cbc7c1 10px 15px,#c3bfb9 15px 20px,#aeaaa4 20px 25px,#c5c5c5 25px 30px,#93999f 30px 35px) 0 5px/100% 5px no-repeat,linear-gradient(90deg,#e9e9e9 0px 5px,#e2e2e2 5px 10px,#ece8e2 10px 15px,#e9e9e9 15px 20px,#e0e0e0 20px 25px,#e4e4e4 25px 30px,#c2c2c2 30px 35px) 0 10px/100% 5px no-repeat"></div>
<div style="position:absolute;left:706px;top:434px;width:145px;height:15px;background:linear-gradient(90deg,#c5c1bb 0px 5px,#c0c6cc 5px 10px,#bcbcbc 10px 15px,#cecece 15px 20px,#bcbcbc 20px 25px,#aaaaaa 25px 30px,#b9bfc5 30px 35px,#a7a39d 35px 40px,#b5b5b5 40px 45px,#e6ecf2 45px 50px,#eaeaea 50px 55px,#e0e6ec 55px 60px,#cfcfcf 60px 65px,#b8b4ae 65px 70px,#9ba1a7 70px 75px,#c7c7c7 75px 80px,#d4d4d4 80px 85px,#eeeeee 85px 90px,#9f9f9f 90px 95px,#ececec 95px 100px,#9f9f9f 100px 105px,#d4d0ca 105px 110px,#afafaf 110px 115px,#a3a9af 115px 120px,#e1e7ed 120px 125px,#ececec 125px 130px,#a4a4a4 130px 135px,#a3a9af 135px 140px,#aaaaaa 140px 145px) 0 0/100% 5px no-repeat,linear-gradient(90deg,#c6c6c6 0px 5px,#b6b2ac 5px 10px,#b3b9bf 10px 15px,#c9c5bf 15px 20px,#909090 20px 25px,#bcbcbc 25px 30px,#adadad 30px 35px,#5e5e5e 35px 40px,#92989e 40px 45px,#c4c0ba 45px 50px,#a2a8ae 50px 55px,#bababa 55px 60px,#bebebe 60px 65px,#cac6c0 65px 70px,#868c92 70px 75px,#8c8c8c 75px 80px,#9a9a9a 80px 85px,#92989e 85px 90px,#9c9c9c 90px 95px,#a9a59f 95px 100px,#8e8e8e 100px 105px,#96928c 105px 110px,#aeaaa4 110px 115px,#b8b8b8 115px 120px,#919191 120px 125px,#b2b2b2 125px 130px,#82888e 130px 135px,#939393 135px 140px,#c5cbd1 140px 145px) 0 5px/100% 5px no-repeat,linear-gradient(90deg,#dcdcdc 0px 5px,#e3dfd9 5px 10px,#bdbdbd 10px 15px,#e9e9e9 15px 20px,#d3d3d3 20px 25px,#cfd5db 25px 30px,#eaeaea 30px 35px,#c7c3bd 35px 40px,#dddddd 40px 45px,#ececec 45px 50px,#dfe5eb 50px 55px,#bcbcbc 55px 60px,#c8ced4 60px 65px,#dfdfdf 65px 70px,#d6d2cc 70px 75px,#dfdfdf 75px 80px,#c2c2c2 80px 85px,#bfbfbf 85px 90px,#b6bcc2 90px 95px,#e3e9ef 95px 100px,#e9e9e9 100px 105px,#d8d8d8 105px 110px,#f1ede7 110px 115px,#d0d6dc 115px 120px,#cdcdcd 120px 125px,#c5c5c5 125px 130px,#d4d4d4 130px 135px,#bfc5cb 135px 140px,#e2e2e2 140px 145px) 0 10px/100% 5px no-repeat"></div>
<div style="position:absolute;left:856px;top:434px;width:20px;height:15px;background:linear-gradient(90deg,#c8c8c8 0px 5px,#c3c9cf 5px 10px,#bfbfbf 10px 15px,#c1c7cd 15px 20px) 0 0/100% 5px no-repeat,linear-gradient(90deg,#a0a6ac 0px 5px,#9e9e9e 5px 10px,#949494 10px 15px,#b2b2b2 15px 20px) 0 5px/100% 5px no-repeat,linear-gradient(90deg,#e4e0da 0px 5px,#cccccc 5px 10px,#d5d5d5 10px 15px,#dfe5eb 15px 20px) 0 10px/100% 5px no-repeat"></div>
<div style="position:absolute;left:986px;top:434px;width:35px;height:15px;background:linear-gradient(90deg,#a7a7a7 0px 5px,#c2c8ce 5px 10px,#c5c5c5 10px 15px,#e2e2e2 15px 20px,#c0c0c0 20px 25px,#a9afb5 25px 30px,#e4eaf0 30px 35px) 0 0/100% 5px no-repeat,linear-gradient(90deg,#bfbfbf 0px 5px,#8f959b 5px 10px,#8e8e8e 10px 15px,#9da3a9 15px 20px,#83898f 20px 25px,#868686 25px 30px,#9c9c9c 30px 35px) 0 5px/100% 5px no-repeat,linear-gradient(90deg,#c3c3c3 0px 5px,#d5dbe1 5px 10px,#e2e8ee 10px 15px,#d4dae0 15px 20px,#bbbbbb 20px 25px,#dfdbd5 25px 30px,#c5c5c5 30px 35px) 0 10px/100% 5px no-repeat"></div>
<div style="position:absolute;left:1081px;top:434px;width:135px;height:15px;background:linear-gradient(90deg,#c2beb8 0px 5px,#ededed 5px 10px,#aeb4ba 10px 15px,#a2a2a2 15px 20px,#b4b4b4 20px 25px,#e9eff5 25px 30px,#b1b1b1 30px 35px,#dee4ea 35px 40px,#dae0e6 40px 45px,#dbdbdb 45px 50px,#a2a8ae 50px 55px,#a5a19b 55px 60px,#bcbcbc 60px 65px,#b6b6b6 65px 70px,#ededed 70px 75px,#c6c6c6 75px 80px,#abb1b7 80px 85px,#b9b9b9 85px 90px,#b5b5b5 90px 95px,#bcbcbc 95px 100px,#c5cbd1 100px 105px,#e2e2e2 105px 110px,#ebebeb 110px 115px,#ababab 115px 120px,#bec4ca 120px 125px,#dedede 125px 130px,#c2beb8 130px 135px) 0 0/100% 5px no-repeat,linear-gradient(90deg,#949494 0px 5px,#b3b3b3 5px 10px,#939393 10px 15px,#b5b5b5 15px 20px,#95918b 20px 25px,#a8a8a8 25px 30px,#8f8f8f 30px 35px,#8f8f8f 35px 40px,#ababab 40px 45px,#acacac 45px 50px,#bebebe 50px 55px,#9e9e9e 55px 60px,#c3bfb9 60px 65px,#797979 65px 70px,#b7b7b7 70px 75px,#929292 75px 80px,#878787 80px 85px,#bebebe 85px 90px,#c0c0c0 90px 95px,#6d6963 95px 100px,#908c86 100px 105px,#8c9298 105px 110px,#c4c4c4 110px 115px,#c9c9c9 115px 120px,#999999 120px 125px,#bdb9b3 125px 130px,#c4c4c4 130px 135px) 0 5px/100% 5px no-repeat,linear-gradient(90deg,#e6e6e6 0px 5px,#d2d2d2 5px 10px,#c0c6cc 10px 15px,#dce2e8 15px 20px,#dae0e6 20px 25px,#c1c7cd 25px 30px,#dad6d0 30px 35px,#e1e1e1 35px 40px,#c8ced4 40px 45px,#e0e0e0 45px 50px,#d5d5d5 50px 55px,#d2d2d2 55px 60px,#c0c6cc 60px 65px,#e0e6ec 65px 70px,#d7dde3 70px 75px,#d8d8d8 75px 80px,#b6bcc2 80px 85px,#e5e5e5 85px 90px,#dadada 90px 95px,#c9c9c9 95px 100px,#dddddd 100px 105px,#e3dfd9 105px 110px,#bfbfbf 110px 115px,#c1c1c1 115px 120px,#d4d0ca 120px 125px,#d8d8d8 125px 130px,#d5d5d5 130px 135px) 0 10px/100% 5px no-repeat"></div>
<svg style="position:absolute;left:39px;top:467px;" width="15" height="15" viewBox="0 0 15 15"><rect x="1.5" y="1.5" width="12" height="12" rx="2.6" fill="#fff" stroke="#777" stroke-width="1.4"/></svg>
<div style="position:absolute;left:91px;top:464px;width:20px;height:20px;background:linear-gradient(90deg,#f3e6e6 0 5px,#d8948f 5px 10px,#c9897f 10px 15px,#dcdcdc 15px) 0 0/100% 5px no-repeat,linear-gradient(90deg,#f3e5e5 0 5px,#c98a88 5px 15px,#b9b9b9 15px) 0 5px/100% 5px no-repeat,linear-gradient(90deg,transparent 0 5px,#e0d3d3 5px 10px,#e7c2c2 10px 15px,#d8c0c0 15px) 0 10px/100% 5px no-repeat,linear-gradient(90deg,transparent 0 5px,#dadada 5px 10px,#c6c6c6 10px) 0 15px/100% 5px no-repeat"></div>
<div style="position:absolute;left:121px;top:469px;width:40px;height:15px;background:linear-gradient(90deg,#e1e1e1 0px 5px,#aeaeae 5px 10px,#c8ced4 10px 15px,#dddddd 15px 20px,#b1b1b1 20px 25px,#c2beb8 25px 30px,#d8d4ce 30px 35px,#d1cdc7 35px 40px) 0 0/100% 5px no-repeat,linear-gradient(90deg,#c5c1bb 0px 5px,#92989e 5px 10px,#878d93 10px 15px,#969ca2 15px 20px,#c1bdb7 20px 25px,#6c6862 25px 30px,#b5b5b5 30px 35px,#737373 35px 40px) 0 5px/100% 5px no-repeat,linear-gradient(90deg,#e6ecf2 0px 5px,#bdbdbd 5px 10px,#d0d0d0 10px 15px,#ebe7e1 15px 20px,#cfcfcf 20px 25px,#dcdcdc 25px 30px,#d7d7d7 30px 35px,#e2e8ee 35px 40px) 0 10px/100% 5px no-repeat"></div>
<div style="position:absolute;left:256px;top:469px;width:90px;height:15px;background:linear-gradient(90deg,#ebe7e1 0px 5px,#d1d1d1 5px 10px,#c0c6cc 10px 15px,#d4dae0 15px 20px,#d2d2d2 20px 25px,#9ca2a8 25px 30px,#d4d0ca 30px 35px,#d4d4d4 35px 40px,#b7b7b7 40px 45px,#aeaaa4 45px 50px,#e9e9e9 50px 55px,#b8bec4 55px 60px,#cdc9c3 60px 65px,#c8c8c8 65px 70px,#b9bfc5 70px 75px,#ececec 75px 80px,#e1e1e1 80px 85px,#bbb7b1 85px 90px) 0 0/100% 5px no-repeat,linear-gradient(90deg,#a0a6ac 0px 5px,#9fa5ab 5px 10px,#909090 10px 15px,#c1c7cd 15px 20px,#b2aea8 20px 25px,#a0a6ac 25px 30px,#b3afa9 30px 35px,#c0c6cc 35px 40px,#6e6a64 40px 45px,#5d6369 45px 50px,#918d87 50px 55px,#a9a9a9 55px 60px,#9ea4aa 60px 65px,#79756f 65px 70px,#c6c6c6 70px 75px,#c6c2bc 75px 80px,#b5b5b5 80px 85px,#9e9a94 85px 90px) 0 5px/100% 5px no-repeat,linear-gradient(90deg,#d0d0d0 0px 5px,#c9c9c9 5px 10px,#bebebe 10px 15px,#c5c5c5 15px 20px,#d0d6dc 20px 25px,#cbd1d7 25px 30px,#ededed 30px 35px,#ebebeb 35px 40px,#d9d9d9 40px 45px,#dbdbdb 45px 50px,#c4c0ba 50px 55px,#cdc9c3 55px 60px,#d8d4ce 60px 65px,#dcdcdc 65px 70px,#e1ddd7 70px 75px,#bfc5cb 75px 80px,#d0d0d0 80px 85px,#e0e0e0 85px 90px) 0 10px/100% 5px no-repeat"></div>
<div style="position:absolute;left:391px;top:469px;width:15px;height:15px;background:linear-gradient(90deg,#d2cec8 0px 5px,#eaeaea 5px 10px,#eeeeee 10px 15px) 0 0/100% 5px no-repeat,linear-gradient(90deg,#969696 0px 5px,#c5c5c5 5px 10px,#989898 10px 15px) 0 5px/100% 5px no-repeat,linear-gradient(90deg,#cacaca 0px 5px,#e5e5e5 5px 10px,#c2c2c2 10px 15px) 0 10px/100% 5px no-repeat"></div>
<div style="position:absolute;left:451px;top:469px;width:90px;height:15px;background:linear-gradient(90deg,#b5b1ab 0px 5px,#a7adb3 5px 10px,#e2e2e2 10px 15px,#b3b9bf 15px 20px,#9ba1a7 20px 25px,#9ca2a8 25px 30px,#9ba1a7 30px 35px,#b9b5af 35px 40px,#d7d7d7 40px 45px,#b2b2b2 45px 50px,#bcbcbc 50px 55px,#aeaaa4 55px 60px,#d7d7d7 60px 65px,#d0ccc6 65px 70px,#c6ccd2 70px 75px,#aeaeae 75px 80px,#dddddd 80px 85px,#e8e8e8 85px 90px) 0 0/100% 5px no-repeat,linear-gradient(90deg,#989ea4 0px 5px,#8c8c8c 5px 10px,#c5c5c5 10px 15px,#c5c5c5 15px 20px,#a1a7ad 20px 25px,#8d8d8d 25px 30px,#969696 30px 35px,#8e8e8e 35px 40px,#9c9c9c 40px 45px,#a4a4a4 45px 50px,#97938d 50px 55px,#918d87 55px 60px,#a6a6a6 60px 65px,#a2a2a2 65px 70px,#a9afb5 70px 75px,#a7a7a7 75px 80px,#a8a8a8 80px 85px,#c5cbd1 85px 90px) 0 5px/100% 5px no-repeat,linear-gradient(90deg,#c0bcb6 0px 5px,#cfcfcf 5px 10px,#ececec 10px 15px,#d4dae0 15px 20px,#cdc9c3 20px 25px,#d6d6d6 25px 30px,#cfcfcf 30px 35px,#e9e5df 35px 40px,#d9d9d9 40px 45px,#e1e1e1 45px 50px,#dcdcdc 50px 55px,#e0e6ec 55px 60px,#d4dae0 60px 65px,#dde3e9 65px 70px,#d6d6d6 70px 75px,#e9e9e9 75px 80px,#bbbbbb 80px 85px,#dfdfdf 85px 90px) 0 10px/100% 5px no-repeat"></div>
<div style="position:absolute;left:546px;top:469px;width:20px;height:15px;background:linear-gradient(90deg,#c5c5c5 0px 5px,#ddd9d3 5px 10px,#bebab4 10px 15px,#dedede 15px 20px) 0 0/100% 5px no-repeat,linear-gradient(90deg,#b8bec4 0px 5px,#959595 5px 10px,#afafaf 10px 15px,#c6c6c6 15px 20px) 0 5px/100% 5px no-repeat,linear-gradient(90deg,#c2c8ce 0px 5px,#d1cdc7 5px 10px,#d7d7d7 10px 15px,#bababa 15px 20px) 0 10px/100% 5px no-repeat"></div>
<div style="position:absolute;left:626px;top:469px;width:45px;height:15px;background:linear-gradient(90deg,#e9e9e9 0px 5px,#bebebe 5px 10px,#aaa6a0 10px 15px,#a9a9a9 15px 20px,#cdcdcd 20px 25px,#c7c7c7 25px 30px,#e0e0e0 30px 35px,#e5e1db 35px 40px,#eae6e0 40px 45px) 0 0/100% 5px no-repeat,linear-gradient(90deg,#bababa 0px 5px,#bac0c6 5px 10px,#bac0c6 10px 15px,#b4b4b4 15px 20px,#a8aeb4 20px 25px,#aaaaaa 25px 30px,#c2c2c2 30px 35px,#b3b3b3 35px 40px,#c0bcb6 40px 45px) 0 5px/100% 5px no-repeat,linear-gradient(90deg,#c8c8c8 0px 5px,#eae6e0 5px 10px,#d2cec8 10px 15px,#c3bfb9 15px 20px,#d8dee4 20px 25px,#dcdcdc 25px 30px,#cdd3d9 30px 35px,#c6c6c6 35px 40px,#e2e2e2 40px 45px) 0 10px/100% 5px no-repeat"></div>
<div style="position:absolute;left:706px;top:469px;width:145px;height:15px;background:linear-gradient(90deg,#a5abb1 0px 5px,#b1b7bd 5px 10px,#b9b9b9 10px 15px,#ced4da 15px 20px,#e8e8e8 20px 25px,#c8ced4 25px 30px,#b3b3b3 30px 35px,#dcdcdc 35px 40px,#eaf0f6 40px 45px,#dee4ea 45px 50px,#a8a8a8 50px 55px,#e4eaf0 55px 60px,#c8c8c8 60px 65px,#c4c4c4 65px 70px,#e9e9e9 70px 75px,#aaaaaa 75px 80px,#e4e4e4 80px 85px,#a1a1a1 85px 90px,#b8bec4 90px 95px,#dbdbdb 95px 100px,#aeaeae 100px 105px,#a2a8ae 105px 110px,#bdbdbd 110px 115px,#e6e6e6 115px 120px,#c2beb8 120px 125px,#c8c8c8 125px 130px,#e9eff5 130px 135px,#c0c0c0 135px 140px,#cecece 140px 145px) 0 0/100% 5px no-repeat,linear-gradient(90deg,#979797 0px 5px,#a4a4a4 5px 10px,#5d6369 10px 15px,#b7bdc3 15px 20px,#bbbbbb 20px 25px,#5e5e5e 25px 30px,#b4b4b4 30px 35px,#c3bfb9 35px 40px,#a7adb3 40px 45px,#8e8a84 45px 50px,#b4bac0 50px 55px,#aaa6a0 55px 60px,#929292 60px 65px,#b6b6b6 65px 70px,#aab0b6 70px 75px,#acacac 75px 80px,#b3b3b3 80px 85px,#888e94 85px 90px,#6a6a6a 90px 95px,#b7bdc3 95px 100px,#91979d 100px 105px,#b7b7b7 105px 110px,#acacac 110px 115px,#a5a19b 115px 120px,#696f75 120px 125px,#b6bcc2 125px 130px,#bbbbbb 130px 135px,#70767c 135px 140px,#646464 140px 145px) 0 5px/100% 5px no-repeat,linear-gradient(90deg,#e1e1e1 0px 5px,#dce2e8 5px 10px,#d5d5d5 10px 15px,#c0c6cc 15px 20px,#bebebe 20px 25px,#d8d8d8 25px 30px,#c6c2bc 30px 35px,#bfbfbf 35px 40px,#c8c8c8 40px 45px,#c8c8c8 45px 50px,#d7d7d7 50px 55px,#e7edf3 55px 60px,#cacaca 60px 65px,#e8e8e8 65px 70px,#cacaca 70px 75px,#cecac4 75px 80px,#d3cfc9 80px 85px,#c7c7c7 85px 90px,#c9c9c9 90px 95px,#dfdfdf 95px 100px,#e3e3e3 100px 105px,#cbcbcb 105px 110px,#d9d9d9 110px 115px,#e8e8e8 115px 120px,#c6c6c6 120px 125px,#cccccc 125px 130px,#c4c4c4 130px 135px,#ededed 135px 140px,#c2beb8 140px 145px) 0 10px/100% 5px no-repeat"></div>
<div style="position:absolute;left:856px;top:469px;width:20px;height:15px;background:linear-gradient(90deg,#b0aca6 0px 5px,#dedede 5px 10px,#dfe5eb 10px 15px,#dcdcdc 15px 20px) 0 0/100% 5px no-repeat,linear-gradient(90deg,#9c9c9c 0px 5px,#9d9d9d 5px 10px,#939393 10px 15px,#8d8d8d 15px 20px) 0 5px/100% 5px no-repeat,linear-gradient(90deg,#e6e2dc 0px 5px,#ebebeb 5px 10px,#dfdfdf 10px 15px,#d5d1cb 15px 20px) 0 10px/100% 5px no-repeat"></div>
<div style="position:absolute;left:986px;top:469px;width:35px;height:15px;background:linear-gradient(90deg,#e9e9e9 0px 5px,#c0c6cc 5px 10px,#cacaca 10px 15px,#a5a5a5 15px 20px,#c1c1c1 20px 25px,#ebebeb 25px 30px,#dfdbd5 30px 35px) 0 0/100% 5px no-repeat,linear-gradient(90deg,#c4c4c4 0px 5px,#c3bfb9 5px 10px,#cac6c0 10px 15px,#8f8f8f 15px 20px,#949494 20px 25px,#b9b5af 25px 30px,#a8a49e 30px 35px) 0 5px/100% 5px no-repeat,linear-gradient(90deg,#cfcfcf 0px 5px,#bfbfbf 5px 10px,#e0e0e0 10px 15px,#d9d5cf 15px 20px,#dad6d0 20px 25px,#e3e9ef 25px 30px,#c6c6c6 30px 35px) 0 10px/100% 5px no-repeat"></div>
<div style="position:absolute;left:1081px;top:474px;width:45px;height:5px;background:#d9d6d6"></div>
<div style="position:absolute;left:1131px;top:469px;width:30px;height:15px;background:linear-gradient(90deg,#cccccc 0px 5px,#c4cad0 5px 10px,#9ca2a8 10px 15px,#aeaaa4 15px 20px,#e8e8e8 20px 25px,#d6d6d6 25px 30px) 0 0/100% 5px no-repeat,linear-gradient(90deg,#969ca2 0px 5px,#ababab 5px 10px,#919191 10px 15px,#c2beb8 15px 20px,#949494 20px 25px,#b8b8b8 25px 30px) 0 5px/100% 5px no-repeat,linear-gradient(90deg,#d4d4d4 0px 5px,#dbdbdb 5px 10px,#d3d3d3 10px 15px,#c0c0c0 15px 20px,#ccd2d8 20px 25px,#cad0d6 25px 30px) 0 10px/100% 5px no-repeat"></div>
<div style="position:absolute;left:1166px;top:469px;width:35px;height:15px;background:linear-gradient(90deg,#f2eee8 0px 5px,#d8d8d8 5px 10px,#cad0d6 10px 15px,#a0a0a0 15px 20px,#b1b7bd 20px 25px,#a3a3a3 25px 30px,#b2b2b2 30px 35px) 0 0/100% 5px no-repeat,linear-gradient(90deg,#b8bec4 0px 5px,#959595 5px 10px,#c0c0c0 10px 15px,#c8c8c8 15px 20px,#78746e 20px 25px,#bdbdbd 25px 30px,#c2c2c2 30px 35px) 0 5px/100% 5px no-repeat,linear-gradient(90deg,#bfbfbf 0px 5px,#c6c6c6 5px 10px,#bcc2c8 10px 15px,#d7d7d7 15px 20px,#e4e4e4 20px 25px,#cbcbcb 25px 30px,#d1cdc7 30px 35px) 0 10px/100% 5px no-repeat"></div>
<div style="position:absolute;left:1206px;top:469px;width:10px;height:15px;background:linear-gradient(90deg,#c5c5c5 0px 5px,#c6c2bc 5px 10px) 0 0/100% 5px no-repeat,linear-gradient(90deg,#c8ced4 0px 5px,#d0d0d0 5px 10px) 0 5px/100% 5px no-repeat,linear-gradient(90deg,#c6ccd2 0px 5px,#e1e7ed 5px 10px) 0 10px/100% 5px no-repeat"></div>
<div style="position:absolute;left:33px;top:495px;width:1184px;height:30px;background:#f2f2f2"></div>
<div style="position:absolute;left:88px;top:495px;width:5px;height:30px;background:#f7f7f7"></div>
<div style="position:absolute;left:116px;top:495px;width:5px;height:30px;background:#f7f7f7"></div>
<div style="position:absolute;left:251px;top:495px;width:5px;height:30px;background:#f7f7f7"></div>
<div style="position:absolute;left:386px;top:495px;width:5px;height:30px;background:#f7f7f7"></div>
<div style="position:absolute;left:446px;top:495px;width:5px;height:30px;background:#f7f7f7"></div>
<div style="position:absolute;left:536px;top:495px;width:5px;height:30px;background:#f7f7f7"></div>
<div style="position:absolute;left:616px;top:495px;width:5px;height:30px;background:#f7f7f7"></div>
<div style="position:absolute;left:696px;top:495px;width:5px;height:30px;background:#f7f7f7"></div>
<div style="position:absolute;left:851px;top:495px;width:5px;height:30px;background:#f7f7f7"></div>
<div style="position:absolute;left:976px;top:495px;width:5px;height:30px;background:#f7f7f7"></div>
<div style="position:absolute;left:1076px;top:495px;width:5px;height:30px;background:#f7f7f7"></div>
<div style="position:absolute;left:88px;top:523px;width:1128px;height:2px;background:#f6f6f6"></div>
<svg style="position:absolute;left:39px;top:502px;" width="15" height="15" viewBox="0 0 15 15"><rect x="1.5" y="1.5" width="12" height="12" rx="2.6" fill="#fff" stroke="#777" stroke-width="1.4"/></svg>
<div style="position:absolute;left:91px;top:499px;width:20px;height:20px;background:linear-gradient(90deg,#f3e6e6 0 5px,#d8948f 5px 10px,#c9897f 10px 15px,#dcdcdc 15px) 0 0/100% 5px no-repeat,linear-gradient(90deg,#f3e5e5 0 5px,#c98a88 5px 15px,#b9b9b9 15px) 0 5px/100% 5px no-repeat,linear-gradient(90deg,transparent 0 5px,#e0d3d3 5px 10px,#e7c2c2 10px 15px,#d8c0c0 15px) 0 10px/100% 5px no-repeat,linear-gradient(90deg,transparent 0 5px,#dadada 5px 10px,#c6c6c6 10px) 0 15px/100% 5px no-repeat"></div>
<div style="position:absolute;left:121px;top:504px;width:90px;height:15px;background:linear-gradient(90deg,#c8c4be 0px 5px,#aab0b6 5px 10px,#b9b9b9 10px 15px,#bbc1c7 15px 20px,#dcdcdc 20px 25px,#e8e8e8 25px 30px,#c5cbd1 30px 35px,#b4b4b4 35px 40px,#bbbbbb 40px 45px,#cfcbc5 45px 50px,#b9b9b9 50px 55px,#9f9f9f 55px 60px,#a0a6ac 60px 65px,#dce2e8 65px 70px,#aeb4ba 70px 75px,#bababa 75px 80px,#d6d6d6 80px 85px,#aeaaa4 85px 90px) 0 0/100% 5px no-repeat,linear-gradient(90deg,#979797 0px 5px,#a9afb5 5px 10px,#c4cad0 10px 15px,#858b91 15px 20px,#bfbfbf 20px 25px,#9aa0a6 25px 30px,#8c8c8c 30px 35px,#c8c8c8 35px 40px,#9f9b95 40px 45px,#6b7177 45px 50px,#929292 50px 55px,#969696 55px 60px,#b8b4ae 60px 65px,#c7c3bd 65px 70px,#969696 70px 75px,#ababab 75px 80px,#7b7771 80px 85px,#9b9b9b 85px 90px) 0 5px/100% 5px no-repeat,linear-gradient(90deg,#dee4ea 0px 5px,#ece8e2 5px 10px,#dddddd 10px 15px,#bec4ca 15px 20px,#c0c0c0 20px 25px,#c0c0c0 25px 30px,#d6d6d6 30px 35px,#bebebe 35px 40px,#e6e6e6 40px 45px,#d5d5d5 45px 50px,#c6c2bc 50px 55px,#e7e7e7 55px 60px,#d5d5d5 60px 65px,#e3e3e3 65px 70px,#cacaca 70px 75px,#dae0e6 75px 80px,#c1c1c1 80px 85px,#e0e6ec 85px 90px) 0 10px/100% 5px no-repeat"></div>
<div style="position:absolute;left:256px;top:504px;width:45px;height:15px;background:linear-gradient(90deg,#c8c8c8 0px 5px,#bbbbbb 5px 10px,#e3e3e3 10px 15px,#bcbcbc 15px 20px,#e5e1db 20px 25px,#b4b0aa 25px 30px,#dfdfdf 30px 35px,#cacaca 35px 40px,#aca8a2 40px 45px) 0 0/100% 5px no-repeat,linear-gradient(90deg,#8f8f8f 0px 5px,#bcbcbc 5px 10px,#646464 10px 15px,#909090 15px 20px,#909090 20px 25px,#b8b8b8 25px 30px,#989898 30px 35px,#b4b4b4 35px 40px,#a3a9af 40px 45px) 0 5px/100% 5px no-repeat,linear-gradient(90deg,#e7e7e7 0px 5px,#d7d7d7 5px 10px,#ebebeb 10px 15px,#dfdfdf 15px 20px,#c1c1c1 20px 25px,#e4e4e4 25px 30px,#e1ddd7 30px 35px,#b9bfc5 35px 40px,#cdc9c3 40px 45px) 0 10px/100% 5px no-repeat"></div>
<div style="position:absolute;left:391px;top:504px;width:15px;height:15px;background:linear-gradient(90deg,#e7e7e7 0px 5px,#c2c2c2 5px 10px,#bababa 10px 15px) 0 0/100% 5px no-repeat,linear-gradient(90deg,#bdb9b3 0px 5px,#94908a 5px 10px,#a2a2a2 10px 15px) 0 5px/100% 5px no-repeat,linear-gradient(90deg,#e7edf3 0px 5px,#c1bdb7 5px 10px,#d5d5d5 10px 15px) 0 10px/100% 5px no-repeat"></div>
<div style="position:absolute;left:451px;top:504px;width:90px;height:15px;background:linear-gradient(90deg,#c7cdd3 0px 5px,#d9d9d9 5px 10px,#c0c6cc 10px 15px,#a2a2a2 15px 20px,#adadad 20px 25px,#e3e3e3 25px 30px,#adadad 30px 35px,#f3efe9 35px 40px,#bbbbbb 40px 45px,#a3a9af 45px 50px,#e3e9ef 50px 55px,#adadad 55px 60px,#e1e1e1 60px 65px,#d9d9d9 65px 70px,#a7a7a7 70px 75px,#c5cbd1 75px 80px,#9da3a9 80px 85px,#cbcbcb 85px 90px) 0 0/100% 5px no-repeat,linear-gradient(90deg,#c5c5c5 0px 5px,#9d9993 5px 10px,#9ea4aa 10px 15px,#9aa0a6 15px 20px,#bcb8b2 20px 25px,#c4c4c4 25px 30px,#a39f99 30px 35px,#c9c9c9 35px 40px,#bcbcbc 40px 45px,#aaaaaa 45px 50px,#c8c8c8 50px 55px,#bfbfbf 55px 60px,#bfbfbf 60px 65px,#878787 65px 70px,#8f8f8f 70px 75px,#929292 75px 80px,#5f5f5f 80px 85px,#8e8e8e 85px 90px) 0 5px/100% 5px no-repeat,linear-gradient(90deg,#ece8e2 0px 5px,#bababa 5px 10px,#cccccc 10px 15px,#c6c6c6 15px 20px,#c4c4c4 20px 25px,#bfbfbf 25px 30px,#e9eff5 30px 35px,#d2d2d2 35px 40px,#dedede 40px 45px,#c3c3c3 45px 50px,#d7d3cd 50px 55px,#dce2e8 55px 60px,#c0c0c0 60px 65px,#d2d2d2 65px 70px,#dfdbd5 70px 75px,#d2d2d2 75px 80px,#e9eff5 80px 85px,#c5c5c5 85px 90px) 0 10px/100% 5px no-repeat"></div>
<div style="position:absolute;left:546px;top:504px;width:30px;height:15px;background:linear-gradient(90deg,#b2b2b2 0px 5px,#bebebe 5px 10px,#cfd5db 10px 15px,#c0bcb6 15px 20px,#b7b7b7 20px 25px,#d1d1d1 25px 30px) 0 0/100% 5px no-repeat,linear-gradient(90deg,#8c8882 0px 5px,#6c6c6c 5px 10px,#939393 10px 15px,#c7c7c7 15px 20px,#aaaaaa 20px 25px,#82888e 25px 30px) 0 5px/100% 5px no-repeat,linear-gradient(90deg,#ede9e3 0px 5px,#c9c9c9 5px 10px,#bbc1c7 10px 15px,#d5d5d5 15px 20px,#ededed 20px 25px,#e6e2dc 25px 30px) 0 10px/100% 5px no-repeat"></div>
<div style="position:absolute;left:626px;top:504px;width:40px;height:15px;background:linear-gradient(90deg,#a1a1a1 0px 5px,#cdd3d9 5px 10px,#eeeae4 10px 15px,#c0bcb6 15px 20px,#ededed 20px 25px,#a5a19b 25px 30px,#d9d9d9 30px 35px,#e4e0da 35px 40px) 0 0/100% 5px no-repeat,linear-gradient(90deg,#8c8c8c 0px 5px,#a9a9a9 5px 10px,#94908a 10px 15px,#c8c8c8 15px 20px,#bcbcbc 20px 25px,#bababa 25px 30px,#878d93 30px 35px,#9c9c9c 35px 40px) 0 5px/100% 5px no-repeat,linear-gradient(90deg,#c3bfb9 0px 5px,#ededed 5px 10px,#d1d7dd 10px 15px,#cfcfcf 15px 20px,#e8e8e8 20px 25px,#e0e0e0 25px 30px,#ddd9d3 30px 35px,#d0ccc6 35px 40px) 0 10px/100% 5px no-repeat"></div>
<div style="position:absolute;left:706px;top:504px;width:145px;height:15px;background:linear-gradient(90deg,#d8d8d8 0px 5px,#afafaf 5px 10px,#d0d0d0 10px 15px,#c4c0ba 15px 20px,#e4e4e4 20px 25px,#acacac 25px 30px,#a3a3a3 30px 35px,#c5c5c5 35px 40px,#d2d2d2 40px 45px,#bcbcbc 45px 50px,#e4e0da 50px 55px,#b6b2ac 55px 60px,#a6a29c 60px 65px,#afb5bb 65px 70px,#9ba1a7 70px 75px,#b4bac0 75px 80px,#b8b8b8 80px 85px,#e0dcd6 85px 90px,#b1b1b1 90px 95px,#afafaf 95px 100px,#a8a8a8 100px 105px,#a8a8a8 105px 110px,#d4d4d4 110px 115px,#c3bfb9 115px 120px,#e2e2e2 120px 125px,#aba7a1 125px 130px,#bababa 130px 135px,#dce2e8 135px 140px,#e9e9e9 140px 145px) 0 0/100% 5px no-repeat,linear-gradient(90deg,#afb5bb 0px 5px,#928e88 5px 10px,#8f8f8f 10px 15px,#b1b1b1 15px 20px,#b9b9b9 20px 25px,#97938d 25px 30px,#8b8b8b 30px 35px,#aeb4ba 35px 40px,#b4b0aa 40px 45px,#8c8c8c 45px 50px,#878d93 50px 55px,#aab0b6 55px 60px,#c6c6c6 60px 65px,#aaaaaa 65px 70px,#bababa 70px 75px,#b1b1b1 75px 80px,#b9b9b9 80px 85px,#a3a3a3 85px 90px,#959595 90px 95px,#a3a3a3 95px 100px,#c9c9c9 100px 105px,#979797 105px 110px,#c1c7cd 110px 115px,#878787 115px 120px,#9a9a9a 120px 125px,#8a8a8a 125px 130px,#9d9d9d 130px 135px,#a6a29c 135px 140px,#a8aeb4 140px 145px) 0 5px/100% 5px no-repeat,linear-gradient(90deg,#cccccc 0px 5px,#d9d5cf 5px 10px,#bcc2c8 10px 15px,#cecece 15px 20px,#d0d0d0 20px 25px,#dbdbdb 25px 30px,#cbcbcb 30px 35px,#dbd7d1 35px 40px,#e0e0e0 40px 45px,#c4cad0 45px 50px,#c4cad0 50px 55px,#c8c8c8 55px 60px,#c0c0c0 60px 65px,#bdbdbd 65px 70px,#e5e1db 70px 75px,#e8e8e8 75px 80px,#d2d2d2 80px 85px,#c7c7c7 85px 90px,#bcbcbc 90px 95px,#ddd9d3 95px 100px,#d8d4ce 100px 105px,#c7c7c7 105px 110px,#d4d4d4 110px 115px,#f1ede7 115px 120px,#e3e9ef 120px 125px,#c1c1c1 125px 130px,#d7d3cd 130px 135px,#dbe1e7 135px 140px,#e5e5e5 140px 145px) 0 10px/100% 5px no-repeat"></div>
<div style="position:absolute;left:856px;top:504px;width:25px;height:15px;background:linear-gradient(90deg,#e9eff5 0px 5px,#c2c2c2 5px 10px,#e7e7e7 10px 15px,#ececec 15px 20px,#a7a7a7 20px 25px) 0 0/100% 5px no-repeat,linear-gradient(90deg,#b7bdc3 0px 5px,#75716b 5px 10px,#b9b9b9 10px 15px,#91979d 15px 20px,#8f8b85 20px 25px) 0 5px/100% 5px no-repeat,linear-gradient(90deg,#cad0d6 0px 5px,#dfdfdf 5px 10px,#d6d6d6 10px 15px,#d1d1d1 15px 20px,#e3dfd9 20px 25px) 0 10px/100% 5px no-repeat"></div>
<div style="position:absolute;left:986px;top:504px;width:35px;height:15px;background:linear-gradient(90deg,#a3a3a3 0px 5px,#ececec 5px 10px,#a8a8a8 10px 15px,#c4c4c4 15px 20px,#aeaaa4 20px 25px,#cfcfcf 25px 30px,#9f9f9f 30px 35px) 0 0/100% 5px no-repeat,linear-gradient(90deg,#979797 0px 5px,#8d8d8d 5px 10px,#b2aea8 10px 15px,#afafaf 15px 20px,#a5abb1 20px 25px,#b8b4ae 25px 30px,#979797 30px 35px) 0 5px/100% 5px no-repeat,linear-gradient(90deg,#cccccc 0px 5px,#c6c6c6 5px 10px,#cdcdcd 10px 15px,#f3efe9 15px 20px,#d8d8d8 20px 25px,#dfdfdf 25px 30px,#cacaca 30px 35px) 0 10px/100% 5px no-repeat"></div>
<div style="position:absolute;left:1081px;top:504px;width:135px;height:15px;background:linear-gradient(90deg,#c0c6cc 0px 5px,#b3b3b3 5px 10px,#b0b0b0 10px 15px,#bbbbbb 15px 20px,#e3e9ef 20px 25px,#aaa6a0 25px 30px,#dfe5eb 30px 35px,#c8c4be 35px 40px,#bcbcbc 40px 45px,#c9cfd5 45px 50px,#b3b3b3 50px 55px,#cccccc 55px 60px,#e8e8e8 60px 65px,#b5b5b5 65px 70px,#c2c8ce 70px 75px,#aeaeae 75px 80px,#c5c5c5 80px 85px,#a5a5a5 85px 90px,#cecece 90px 95px,#a1a1a1 95px 100px,#d5d1cb 100px 105px,#ede9e3 105px 110px,#d7d7d7 110px 115px,#d8d4ce 115px 120px,#c0c6cc 120px 125px,#aaaaaa 125px 130px,#9f9f9f 130px 135px) 0 0/100% 5px no-repeat,linear-gradient(90deg,#c6c6c6 0px 5px,#938f89 5px 10px,#9c9c9c 10px 15px,#898989 15px 20px,#c9c5bf 20px 25px,#c1c1c1 25px 30px,#a7a7a7 30px 35px,#919191 35px 40px,#bfc5cb 40px 45px,#b3b3b3 45px 50px,#989898 50px 55px,#959595 55px 60px,#656565 60px 65px,#949aa0 65px 70px,#8b8b8b 70px 75px,#727272 75px 80px,#a6a6a6 80px 85px,#98948e 85px 90px,#9b9b9b 90px 95px,#a8a8a8 95px 100px,#a6a29c 100px 105px,#7a7a7a 105px 110px,#b2b2b2 110px 115px,#999999 115px 120px,#abb1b7 120px 125px,#bebebe 125px 130px,#bfbfbf 130px 135px) 0 5px/100% 5px no-repeat,linear-gradient(90deg,#cccccc 0px 5px,#dddddd 5px 10px,#e3e9ef 10px 15px,#dddddd 15px 20px,#c7c7c7 20px 25px,#cbcbcb 25px 30px,#ececec 30px 35px,#c5c1bb 35px 40px,#d4d4d4 40px 45px,#cccccc 45px 50px,#bcbcbc 50px 55px,#bdbdbd 55px 60px,#cecece 60px 65px,#d5d5d5 65px 70px,#cacaca 70px 75px,#e1ddd7 75px 80px,#b9bfc5 80px 85px,#d8d4ce 85px 90px,#dbdbdb 90px 95px,#e0e0e0 95px 100px,#ececec 100px 105px,#ebebeb 105px 110px,#e4e4e4 110px 115px,#d8dee4 115px 120px,#cacaca 120px 125px,#cfcbc5 125px 130px,#c3bfb9 130px 135px) 0 10px/100% 5px no-repeat"></div>
<svg style="position:absolute;left:39px;top:537px;" width="15" height="15" viewBox="0 0 15 15"><rect x="1.5" y="1.5" width="12" height="12" rx="2.6" fill="#fff" stroke="#777" stroke-width="1.4"/></svg>
<div style="position:absolute;left:91px;top:534px;width:20px;height:20px;background:linear-gradient(90deg,#f3e6e6 0 5px,#d8948f 5px 10px,#c9897f 10px 15px,#dcdcdc 15px) 0 0/100% 5px no-repeat,linear-gradient(90deg,#f3e5e5 0 5px,#c98a88 5px 15px,#b9b9b9 15px) 0 5px/100% 5px no-repeat,linear-gradient(90deg,transparent 0 5px,#e0d3d3 5px 10px,#e7c2c2 10px 15px,#d8c0c0 15px) 0 10px/100% 5px no-repeat,linear-gradient(90deg,transparent 0 5px,#dadada 5px 10px,#c6c6c6 10px) 0 15px/100% 5px no-repeat"></div>
<div style="position:absolute;left:121px;top:539px;width:25px;height:15px;background:linear-gradient(90deg,#e6ecf2 0px 5px,#e3e3e3 5px 10px,#c2c2c2 10px 15px,#b5b5b5 15px 20px,#aaaaaa 20px 25px) 0 0/100% 5px no-repeat,linear-gradient(90deg,#c2beb8 0px 5px,#c5c5c5 5px 10px,#8f8b85 10px 15px,#979797 15px 20px,#a3a3a3 20px 25px) 0 5px/100% 5px no-repeat,linear-gradient(90deg,#d5d5d5 0px 5px,#c3c3c3 5px 10px,#d2cec8 10px 15px,#dddddd 15px 20px,#c5cbd1 20px 25px) 0 10px/100% 5px no-repeat"></div>
<div style="position:absolute;left:256px;top:539px;width:45px;height:15px;background:linear-gradient(90deg,#c9c9c9 0px 5px,#bbc1c7 5px 10px,#c3c3c3 10px 15px,#d9d5cf 15px 20px,#ada9a3 20px 25px,#a9afb5 25px 30px,#e3e9ef 30px 35px,#adadad 35px 40px,#cdcdcd 40px 45px) 0 0/100% 5px no-repeat,linear-gradient(90deg,#b3b3b3 0px 5px,#b8b4ae 5px 10px,#9aa0a6 10px 15px,#b1b1b1 15px 20px,#bcc2c8 20px 25px,#a4aab0 25px 30px,#8e8e8e 30px 35px,#c7c7c7 35px 40px,#ccc8c2 40px 45px) 0 5px/100% 5px no-repeat,linear-gradient(90deg,#c0c0c0 0px 5px,#dadada 5px 10px,#d0d0d0 10px 15px,#c8c8c8 15px 20px,#d3d9df 20px 25px,#d7d7d7 25px 30px,#c4c4c4 30px 35px,#cacaca 35px 40px,#d1d7dd 40px 45px) 0 10px/100% 5px no-repeat"></div>
<div style="position:absolute;left:391px;top:539px;width:15px;height:15px;background:linear-gradient(90deg,#adadad 0px 5px,#b7b3ad 5px 10px,#a5a5a5 10px 15px) 0 0/100% 5px no-repeat,linear-gradient(90deg,#8d8d8d 0px 5px,#a0a0a0 5px 10px,#777777 10px 15px) 0 5px/100% 5px no-repeat,linear-gradient(90deg,#d2cec8 0px 5px,#e6ecf2 5px 10px,#d5dbe1 10px 15px) 0 10px/100% 5px no-repeat"></div>
<div style="position:absolute;left:451px;top:539px;width:90px;height:15px;background:linear-gradient(90deg,#a7a39d 0px 5px,#d2cec8 5px 10px,#acacac 10px 15px,#eeeeee 15px 20px,#a0a0a0 20px 25px,#e3e3e3 25px 30px,#c5c5c5 30px 35px,#a1a7ad 35px 40px,#d7d7d7 40px 45px,#d0d0d0 45px 50px,#b2b8be 50px 55px,#e6e6e6 55px 60px,#cecece 60px 65px,#e8eef4 65px 70px,#e0e0e0 70px 75px,#dbe1e7 75px 80px,#dedede 80px 85px,#eae6e0 85px 90px) 0 0/100% 5px no-repeat,linear-gradient(90deg,#a5a5a5 0px 5px,#878d93 5px 10px,#8f8f8f 10px 15px,#a1a1a1 15px 20px,#c6c6c6 20px 25px,#a5a5a5 25px 30px,#8d8d8d 30px 35px,#b5bbc1 35px 40px,#8c8c8c 40px 45px,#c7c3bd 45px 50px,#b8b8b8 50px 55px,#bcc2c8 55px 60px,#a8a8a8 60px 65px,#969ca2 65px 70px,#a2a2a2 70px 75px,#b6b6b6 75px 80px,#757b81 80px 85px,#a7adb3 85px 90px) 0 5px/100% 5px no-repeat,linear-gradient(90deg,#c3bfb9 0px 5px,#ece8e2 5px 10px,#cecac4 10px 15px,#c9c9c9 15px 20px,#ccc8c2 20px 25px,#dbd7d1 25px 30px,#d6d6d6 30px 35px,#dadada 35px 40px,#c3c3c3 40px 45px,#e4e4e4 45px 50px,#c8c8c8 50px 55px,#d7d7d7 55px 60px,#c4cad0 60px 65px,#d2d2d2 65px 70px,#c8c4be 70px 75px,#cacaca 75px 80px,#d3cfc9 80px 85px,#f1ede7 85px 90px) 0 10px/100% 5px no-repeat"></div>
<div style="position:absolute;left:546px;top:539px;width:30px;height:15px;background:linear-gradient(90deg,#dbdbdb 0px 5px,#9ba1a7 5px 10px,#a1a7ad 10px 15px,#dadada 15px 20px,#e2e2e2 20px 25px,#e6e6e6 25px 30px) 0 0/100% 5px no-repeat,linear-gradient(90deg,#8d9399 0px 5px,#8f959b 5px 10px,#bababa 10px 15px,#8b8b8b 15px 20px,#b0b0b0 20px 25px,#a1a1a1 25px 30px) 0 5px/100% 5px no-repeat,linear-gradient(90deg,#c1c1c1 0px 5px,#bababa 5px 10px,#dfdfdf 10px 15px,#d8d4ce 15px 20px,#d4d4d4 20px 25px,#c3c9cf 25px 30px) 0 10px/100% 5px no-repeat"></div>
<div style="position:absolute;left:626px;top:539px;width:40px;height:15px;background:linear-gradient(90deg,#e6e6e6 0px 5px,#d9d9d9 5px 10px,#9f9f9f 10px 15px,#a8a8a8 15px 20px,#d4d4d4 20px 25px,#d0d0d0 25px 30px,#e5e5e5 30px 35px,#e9e5df 35px 40px) 0 0/100% 5px no-repeat,linear-gradient(90deg,#bebebe 0px 5px,#b4b4b4 5px 10px,#bcbcbc 10px 15px,#acacac 15px 20px,#a1a1a1 20px 25px,#949494 25px 30px,#bfbfbf 30px 35px,#a8a8a8 35px 40px) 0 5px/100% 5px no-repeat,linear-gradient(90deg,#bababa 0px 5px,#cac6c0 5px 10px,#cdc9c3 10px 15px,#e3e3e3 15px 20px,#c3c9cf 20px 25px,#d1d1d1 25px 30px,#e3dfd9 30px 35px,#c7c7c7 35px 40px) 0 10px/100% 5px no-repeat"></div>
<div style="position:absolute;left:706px;top:539px;width:145px;height:15px;background:linear-gradient(90deg,#b2b2b2 0px 5px,#aab0b6 5px 10px,#c9c9c9 10px 15px,#dddddd 15px 20px,#b6bcc2 20px 25px,#e0dcd6 25px 30px,#b8b4ae 30px 35px,#a8a49e 35px 40px,#e6e6e6 40px 45px,#dedede 45px 50px,#eaf0f6 50px 55px,#ededed 55px 60px,#b3b9bf 60px 65px,#d3d3d3 65px 70px,#adadad 70px 75px,#cdc9c3 75px 80px,#cecece 80px 85px,#d4d4d4 85px 90px,#b0b6bc 90px 95px,#c3c3c3 95px 100px,#e2e8ee 100px 105px,#adadad 105px 110px,#e4eaf0 110px 115px,#e7e7e7 115px 120px,#f4f0ea 120px 125px,#b8b4ae 125px 130px,#b3b3b3 130px 135px,#a7adb3 135px 140px,#aca8a2 140px 145px) 0 0/100% 5px no-repeat,linear-gradient(90deg,#c2beb8 0px 5px,#bcbcbc 5px 10px,#a09c96 10px 15px,#858b91 15px 20px,#cac6c0 20px 25px,#928e88 25px 30px,#afb5bb 30px 35px,#a6a6a6 35px 40px,#b0b0b0 40px 45px,#8a8a8a 45px 50px,#a9a9a9 50px 55px,#b5bbc1 55px 60px,#afaba5 60px 65px,#a9a9a9 65px 70px,#949494 70px 75px,#adadad 75px 80px,#b4b4b4 80px 85px,#c1bdb7 85px 90px,#93999f 90px 95px,#a7a7a7 95px 100px,#b7b7b7 100px 105px,#c4c4c4 105px 110px,#c7c7c7 110px 115px,#c2beb8 115px 120px,#b8bec4 120px 125px,#a5a5a5 125px 130px,#cac6c0 130px 135px,#5f656b 135px 140px,#98948e 140px 145px) 0 5px/100% 5px no-repeat,linear-gradient(90deg,#d7dde3 0px 5px,#e3dfd9 5px 10px,#e5e5e5 10px 15px,#c9c9c9 15px 20px,#c1c1c1 20px 25px,#d2d8de 25px 30px,#d6d2cc 30px 35px,#d8d8d8 35px 40px,#e0e0e0 40px 45px,#c9c5bf 45px 50px,#dcd8d2 50px 55px,#c3c3c3 55px 60px,#cecac4 60px 65px,#c1c1c1 65px 70px,#bfbfbf 70px 75px,#e9e5df 75px 80px,#bfbfbf 80px 85px,#dde3e9 85px 90px,#c4c4c4 90px 95px,#c8c4be 95px 100px,#d2d2d2 100px 105px,#e5e1db 105px 110px,#bcbcbc 110px 115px,#bababa 115px 120px,#cccccc 120px 125px,#eaeaea 125px 130px,#e7e3dd 130px 135px,#d2d8de 135px 140px,#cad0d6 140px 145px) 0 10px/100% 5px no-repeat"></div>
<div style="position:absolute;left:856px;top:539px;width:20px;height:15px;background:linear-gradient(90deg,#dadada 0px 5px,#e2e2e2 5px 10px,#d6dce2 10px 15px,#acacac 15px 20px) 0 0/100% 5px no-repeat,linear-gradient(90deg,#b8b4ae 0px 5px,#acacac 5px 10px,#b3b3b3 10px 15px,#b9b9b9 15px 20px) 0 5px/100% 5px no-repeat,linear-gradient(90deg,#dedad4 0px 5px,#bebebe 5px 10px,#dcdcdc 10px 15px,#e1e1e1 15px 20px) 0 10px/100% 5px no-repeat"></div>
<div style="position:absolute;left:986px;top:539px;width:35px;height:15px;background:linear-gradient(90deg,#aca8a2 0px 5px,#d7d3cd 5px 10px,#c0c0c0 10px 15px,#a5a5a5 15px 20px,#a8a8a8 20px 25px,#c0bcb6 25px 30px,#b0b0b0 30px 35px) 0 0/100% 5px no-repeat,linear-gradient(90deg,#c5c5c5 0px 5px,#a9a59f 5px 10px,#606060 10px 15px,#8d8d8d 15px 20px,#606060 20px 25px,#a1a1a1 25px 30px,#a5a19b 30px 35px) 0 5px/100% 5px no-repeat,linear-gradient(90deg,#c3c3c3 0px 5px,#f1ede7 5px 10px,#d6d6d6 10px 15px,#dae0e6 15px 20px,#ccd2d8 20px 25px,#d7d7d7 25px 30px,#ededed 30px 35px) 0 10px/100% 5px no-repeat"></div>
<div style="position:absolute;left:1081px;top:544px;width:45px;height:5px;background:#d9d6d6"></div>
<div style="position:absolute;left:1131px;top:539px;width:30px;height:15px;background:linear-gradient(90deg,#dbdbdb 0px 5px,#c3bfb9 5px 10px,#d6d2cc 10px 15px,#adadad 15px 20px,#a6a29c 20px 25px,#ebebeb 25px 30px) 0 0/100% 5px no-repeat,linear-gradient(90deg,#bfbfbf 0px 5px,#747474 5px 10px,#c0bcb6 10px 15px,#a9a9a9 15px 20px,#929292 20px 25px,#979797 25px 30px) 0 5px/100% 5px no-repeat,linear-gradient(90deg,#dcdcdc 0px 5px,#d8d4ce 5px 10px,#c8c8c8 10px 15px,#cccccc 15px 20px,#e8e8e8 20px 25px,#d1d1d1 25px 30px) 0 10px/100% 5px no-repeat"></div>
<div style="position:absolute;left:1166px;top:539px;width:35px;height:15px;background:linear-gradient(90deg,#bdb9b3 0px 5px,#d1d1d1 5px 10px,#cacaca 10px 15px,#bbbbbb 15px 20px,#cfcbc5 20px 25px,#dedede 25px 30px,#e8e8e8 30px 35px) 0 0/100% 5px no-repeat,linear-gradient(90deg,#ababab 0px 5px,#8a8a8a 5px 10px,#9f9f9f 10px 15px,#868c92 15px 20px,#949494 20px 25px,#868686 25px 30px,#ada9a3 30px 35px) 0 5px/100% 5px no-repeat,linear-gradient(90deg,#c8ced4 0px 5px,#ededed 5px 10px,#e4e4e4 10px 15px,#d9d5cf 15px 20px,#c5c5c5 20px 25px,#d1d1d1 25px 30px,#d5d1cb 30px 35px) 0 10px/100% 5px no-repeat"></div>
<div style="position:absolute;left:1206px;top:539px;width:10px;height:15px;background:linear-gradient(90deg,#e7e3dd 0px 5px,#f1ede7 5px 10px) 0 0/100% 5px no-repeat,linear-gradient(90deg,#ccc8c2 0px 5px,#b4bac0 5px 10px) 0 5px/100% 5px no-repeat,linear-gradient(90deg,#e9eff5 0px 5px,#d3cfc9 5px 10px) 0 10px/100% 5px no-repeat"></div>
<div style="position:absolute;left:33px;top:565px;width:1184px;height:30px;background:#f2f2f2"></div>
<div style="position:absolute;left:88px;top:565px;width:5px;height:30px;background:#f7f7f7"></div>
<div style="position:absolute;left:116px;top:565px;width:5px;height:30px;background:#f7f7f7"></div>
<div style="position:absolute;left:251px;top:565px;width:5px;height:30px;background:#f7f7f7"></div>
<div style="position:absolute;left:386px;top:565px;width:5px;height:30px;background:#f7f7f7"></div>
<div style="position:absolute;left:446px;top:565px;width:5px;height:30px;background:#f7f7f7"></div>
<div style="position:absolute;left:536px;top:565px;width:5px;height:30px;background:#f7f7f7"></div>
<div style="position:absolute;left:616px;top:565px;width:5px;height:30px;background:#f7f7f7"></div>
<div style="position:absolute;left:696px;top:565px;width:5px;height:30px;background:#f7f7f7"></div>
<div style="position:absolute;left:851px;top:565px;width:5px;height:30px;background:#f7f7f7"></div>
<div style="position:absolute;left:976px;top:565px;width:5px;height:30px;background:#f7f7f7"></div>
<div style="position:absolute;left:1076px;top:565px;width:5px;height:30px;background:#f7f7f7"></div>
<div style="position:absolute;left:88px;top:593px;width:1128px;height:2px;background:#f6f6f6"></div>
<svg style="position:absolute;left:39px;top:572px;" width="15" height="15" viewBox="0 0 15 15"><rect x="1.5" y="1.5" width="12" height="12" rx="2.6" fill="#fff" stroke="#777" stroke-width="1.4"/></svg>
<div style="position:absolute;left:91px;top:569px;width:20px;height:20px;background:linear-gradient(90deg,#f3e6e6 0 5px,#d8948f 5px 10px,#c9897f 10px 15px,#dcdcdc 15px) 0 0/100% 5px no-repeat,linear-gradient(90deg,#f3e5e5 0 5px,#c98a88 5px 15px,#b9b9b9 15px) 0 5px/100% 5px no-repeat,linear-gradient(90deg,transparent 0 5px,#e0d3d3 5px 10px,#e7c2c2 10px 15px,#d8c0c0 15px) 0 10px/100% 5px no-repeat,linear-gradient(90deg,transparent 0 5px,#dadada 5px 10px,#c6c6c6 10px) 0 15px/100% 5px no-repeat"></div>
<div style="position:absolute;left:121px;top:574px;width:55px;height:15px;background:linear-gradient(90deg,#d4d4d4 0px 5px,#dfdfdf 5px 10px,#acb2b8 10px 15px,#dfdbd5 15px 20px,#b5b5b5 20px 25px,#dbdbdb 25px 30px,#e9eff5 30px 35px,#aeaeae 35px 40px,#c8c8c8 40px 45px,#b8b8b8 45px 50px,#a8a49e 50px 55px) 0 0/100% 5px no-repeat,linear-gradient(90deg,#b8b8b8 0px 5px,#b3b3b3 5px 10px,#aeaeae 10px 15px,#9c9c9c 15px 20px,#8a8a8a 20px 25px,#b2b2b2 25px 30px,#b4bac0 30px 35px,#8b8b8b 35px 40px,#8a9096 40px 45px,#979797 45px 50px,#b8b8b8 50px 55px) 0 5px/100% 5px no-repeat,linear-gradient(90deg,#cdd3d9 0px 5px,#dee4ea 5px 10px,#e4e0da 10px 15px,#d9dfe5 15px 20px,#e9eff5 20px 25px,#e7e3dd 25px 30px,#e5ebf1 30px 35px,#cdcdcd 35px 40px,#c9c9c9 40px 45px,#dbe1e7 45px 50px,#ece8e2 50px 55px) 0 10px/100% 5px no-repeat"></div>
<div style="position:absolute;left:256px;top:574px;width:40px;height:15px;background:linear-gradient(90deg,#a0a0a0 0px 5px,#b7b3ad 5px 10px,#a1a1a1 10px 15px,#a4a4a4 15px 20px,#cacaca 20px 25px,#eaeaea 25px 30px,#a4aab0 30px 35px,#e8e8e8 35px 40px) 0 0/100% 5px no-repeat,linear-gradient(90deg,#b9b9b9 0px 5px,#6d6d6d 5px 10px,#b6b6b6 10px 15px,#b8b8b8 15px 20px,#c3c3c3 20px 25px,#a2a8ae 25px 30px,#999999 30px 35px,#909090 35px 40px) 0 5px/100% 5px no-repeat,linear-gradient(90deg,#e5e1db 0px 5px,#d4d0ca 5px 10px,#ececec 10px 15px,#b7bdc3 15px 20px,#dbdbdb 20px 25px,#c8c8c8 25px 30px,#d4d4d4 30px 35px,#bebebe 35px 40px) 0 10px/100% 5px no-repeat"></div>
<div style="position:absolute;left:301px;top:574px;width:30px;height:15px;background:linear-gradient(90deg,#d7dde3 0px 5px,#e3e3e3 5px 10px,#9f9f9f 10px 15px,#bfc5cb 15px 20px,#b1b1b1 20px 25px,#a3a3a3 25px 30px) 0 0/100% 5px no-repeat,linear-gradient(90deg,#999999 0px 5px,#9f9f9f 5px 10px,#94908a 10px 15px,#a4a4a4 15px 20px,#c8c4be 20px 25px,#938f89 25px 30px) 0 5px/100% 5px no-repeat,linear-gradient(90deg,#d0d0d0 0px 5px,#ececec 5px 10px,#dbdbdb 10px 15px,#ede9e3 15px 20px,#c2c2c2 20px 25px,#e1e1e1 25px 30px) 0 10px/100% 5px no-repeat"></div>
<div style="position:absolute;left:391px;top:574px;width:15px;height:15px;background:linear-gradient(90deg,#a0a0a0 0px 5px,#b8b8b8 5px 10px,#eaf0f6 10px 15px) 0 0/100% 5px no-repeat,linear-gradient(90deg,#9c9c9c 0px 5px,#9e9e9e 5px 10px,#9fa5ab 10px 15px) 0 5px/100% 5px no-repeat,linear-gradient(90deg,#dfdfdf 0px 5px,#e6e6e6 5px 10px,#e3e3e3 10px 15px) 0 10px/100% 5px no-repeat"></div>
<div style="position:absolute;left:451px;top:574px;width:90px;height:15px;background:linear-gradient(90deg,#d7d7d7 0px 5px,#e7edf3 5px 10px,#9ba1a7 10px 15px,#9ba1a7 15px 20px,#e5ebf1 20px 25px,#dddddd 25px 30px,#c6c6c6 30px 35px,#dbdbdb 35px 40px,#dfdfdf 40px 45px,#c5c5c5 45px 50px,#b5bbc1 50px 55px,#d4d4d4 55px 60px,#e6ecf2 60px 65px,#bbbbbb 65px 70px,#a1a1a1 70px 75px,#a4a4a4 75px 80px,#eeeeee 80px 85px,#e1ddd7 85px 90px) 0 0/100% 5px no-repeat,linear-gradient(90deg,#c0c0c0 0px 5px,#949494 5px 10px,#9e9e9e 10px 15px,#c8c8c8 15px 20px,#c3c3c3 20px 25px,#9f9f9f 25px 30px,#b8b8b8 30px 35px,#9f9f9f 35px 40px,#adb3b9 40px 45px,#868686 45px 50px,#b1b1b1 50px 55px,#9ca2a8 55px 60px,#b3b9bf 60px 65px,#9ea4aa 65px 70px,#a8a49e 70px 75px,#c9c9c9 75px 80px,#b1b1b1 80px 85px,#c1c1c1 85px 90px) 0 5px/100% 5px no-repeat,linear-gradient(90deg,#c5c5c5 0px 5px,#dbdbdb 5px 10px,#bfc5cb 10px 15px,#d7d7d7 15px 20px,#cacaca 20px 25px,#cccccc 25px 30px,#cdcdcd 30px 35px,#d6d6d6 35px 40px,#dcd8d2 40px 45px,#ececec 45px 50px,#e9e9e9 50px 55px,#bababa 55px 60px,#ddd9d3 60px 65px,#e1e7ed 65px 70px,#b7bdc3 70px 75px,#dbd7d1 75px 80px,#c9c9c9 80px 85px,#d2cec8 85px 90px) 0 10px/100% 5px no-repeat"></div>
<div style="position:absolute;left:546px;top:574px;width:20px;height:15px;background:linear-gradient(90deg,#a2a2a2 0px 5px,#a9a9a9 5px 10px,#a4a4a4 10px 15px,#b1ada7 15px 20px) 0 0/100% 5px no-repeat,linear-gradient(90deg,#8b8b8b 0px 5px,#c3c3c3 5px 10px,#adadad 10px 15px,#a7a7a7 15px 20px) 0 5px/100% 5px no-repeat,linear-gradient(90deg,#c9c9c9 0px 5px,#ececec 5px 10px,#cad0d6 10px 15px,#e3e3e3 15px 20px) 0 10px/100% 5px no-repeat"></div>
<div style="position:absolute;left:626px;top:574px;width:45px;height:15px;background:linear-gradient(90deg,#b5b5b5 0px 5px,#aeaaa4 5px 10px,#ced4da 10px 15px,#adb3b9 15px 20px,#e6e6e6 20px 25px,#bac0c6 25px 30px,#c9c5bf 30px 35px,#bebebe 35px 40px,#bdb9b3 40px 45px) 0 0/100% 5px no-repeat,linear-gradient(90deg,#b4b4b4 0px 5px,#b3b9bf 5px 10px,#9d9993 10px 15px,#c5c5c5 15px 20px,#9e9e9e 20px 25px,#c0bcb6 25px 30px,#b4b4b4 30px 35px,#a1a1a1 35px 40px,#9b9b9b 40px 45px) 0 5px/100% 5px no-repeat,linear-gradient(90deg,#d1d1d1 0px 5px,#e4e4e4 5px 10px,#dcd8d2 10px 15px,#eae6e0 15px 20px,#e6e6e6 20px 25px,#e0e0e0 25px 30px,#c2beb8 30px 35px,#e1ddd7 35px 40px,#c1c1c1 40px 45px) 0 10px/100% 5px no-repeat"></div>
<div style="position:absolute;left:706px;top:574px;width:145px;height:15px;background:linear-gradient(90deg,#c9c5bf 0px 5px,#cfcbc5 5px 10px,#a3a3a3 10px 15px,#b2aea8 15px 20px,#d5dbe1 20px 25px,#aaa6a0 25px 30px,#d2d2d2 30px 35px,#e6e6e6 35px 40px,#e7e7e7 40px 45px,#c1c1c1 45px 50px,#c3bfb9 50px 55px,#afafaf 55px 60px,#b7b7b7 60px 65px,#dcd8d2 65px 70px,#bcbcbc 70px 75px,#bcc2c8 75px 80px,#a8a49e 80px 85px,#dae0e6 85px 90px,#e1e1e1 90px 95px,#cbcbcb 95px 100px,#bdbdbd 100px 105px,#d3d3d3 105px 110px,#e1ddd7 110px 115px,#aaa6a0 115px 120px,#e2e2e2 120px 125px,#dfdbd5 125px 130px,#c1c1c1 130px 135px,#ece8e2 135px 140px,#d4d4d4 140px 145px) 0 0/100% 5px no-repeat,linear-gradient(90deg,#bcbcbc 0px 5px,#bdbdbd 5px 10px,#b9b5af 10px 15px,#b1b1b1 15px 20px,#989898 20px 25px,#c5c5c5 25px 30px,#b7b7b7 30px 35px,#c2c2c2 35px 40px,#888888 40px 45px,#898f95 45px 50px,#a0a0a0 50px 55px,#b8b8b8 55px 60px,#c9c9c9 60px 65px,#918d87 65px 70px,#938f89 70px 75px,#bfbbb5 75px 80px,#c3c3c3 80px 85px,#c8c8c8 85px 90px,#bebebe 90px 95px,#8b8b8b 95px 100px,#9e9e9e 100px 105px,#95918b 105px 110px,#b7b7b7 110px 115px,#8d8d8d 115px 120px,#939393 120px 125px,#afafaf 125px 130px,#bac0c6 130px 135px,#a29e98 135px 140px,#a6a6a6 140px 145px) 0 5px/100% 5px no-repeat,linear-gradient(90deg,#bababa 0px 5px,#d1d1d1 5px 10px,#bcbcbc 10px 15px,#dde3e9 15px 20px,#bdbdbd 20px 25px,#e1e1e1 25px 30px,#f3efe9 30px 35px,#c6c2bc 35px 40px,#eeeae4 40px 45px,#ededed 45px 50px,#d5dbe1 50px 55px,#cdcdcd 55px 60px,#dedede 60px 65px,#e5ebf1 65px 70px,#e0dcd6 70px 75px,#dddddd 75px 80px,#e5e5e5 80px 85px,#cacaca 85px 90px,#cfcfcf 90px 95px,#dedede 95px 100px,#ebebeb 100px 105px,#e3e3e3 105px 110px,#cacaca 110px 115px,#ececec 115px 120px,#cdcdcd 120px 125px,#e3e3e3 125px 130px,#cbc7c1 130px 135px,#c8c4be 135px 140px,#d3d9df 140px 145px) 0 10px/100% 5px no-repeat"></div>
<div style="position:absolute;left:856px;top:574px;width:30px;height:15px;background:linear-gradient(90deg,#dedede 0px 5px,#aba7a1 5px 10px,#b1ada7 10px 15px,#cecece 15px 20px,#e4e4e4 20px 25px,#ececec 25px 30px) 0 0/100% 5px no-repeat,linear-gradient(90deg,#b5bbc1 0px 5px,#afaba5 5px 10px,#c2c2c2 10px 15px,#a1a1a1 15px 20px,#b6b6b6 20px 25px,#c7c3bd 25px 30px) 0 5px/100% 5px no-repeat,linear-gradient(90deg,#eaeaea 0px 5px,#d5d1cb 5px 10px,#d6d2cc 10px 15px,#bababa 15px 20px,#e1e1e1 20px 25px,#cbd1d7 25px 30px) 0 10px/100% 5px no-repeat"></div>
<div style="position:absolute;left:986px;top:574px;width:35px;height:15px;background:linear-gradient(90deg,#b7bdc3 0px 5px,#c1c1c1 5px 10px,#a3a3a3 10px 15px,#b1b1b1 15px 20px,#bcbcbc 20px 25px,#aaa6a0 25px 30px,#cbcbcb 30px 35px) 0 0/100% 5px no-repeat,linear-gradient(90deg,#acb2b8 0px 5px,#8a8a8a 5px 10px,#aab0b6 10px 15px,#9c9c9c 15px 20px,#c0c6cc 20px 25px,#b5b5b5 25px 30px,#bbbbbb 30px 35px) 0 5px/100% 5px no-repeat,linear-gradient(90deg,#c7cdd3 0px 5px,#c3c3c3 5px 10px,#dfdfdf 10px 15px,#b9bfc5 15px 20px,#dfdfdf 20px 25px,#bbbbbb 25px 30px,#d1d1d1 30px 35px) 0 10px/100% 5px no-repeat"></div>
<div style="position:absolute;left:1081px;top:579px;width:45px;height:5px;background:#d9d6d6"></div>
<div style="position:absolute;left:1131px;top:574px;width:30px;height:15px;background:linear-gradient(90deg,#cfcbc5 0px 5px,#c5c1bb 5px 10px,#e4e4e4 10px 15px,#b4b4b4 15px 20px,#b6b6b6 20px 25px,#d1d1d1 25px 30px) 0 0/100% 5px no-repeat,linear-gradient(90deg,#898f95 0px 5px,#9e9e9e 5px 10px,#8c8c8c 10px 15px,#979797 15px 20px,#c2c2c2 20px 25px,#8a8a8a 25px 30px) 0 5px/100% 5px no-repeat,linear-gradient(90deg,#d0d0d0 0px 5px,#bcbcbc 5px 10px,#bfbfbf 10px 15px,#c3c9cf 15px 20px,#d2d8de 20px 25px,#eaeaea 25px 30px) 0 10px/100% 5px no-repeat"></div>
<div style="position:absolute;left:1166px;top:574px;width:35px;height:15px;background:linear-gradient(90deg,#b5bbc1 0px 5px,#e4e4e4 5px 10px,#a9afb5 10px 15px,#e8e8e8 15px 20px,#cccccc 20px 25px,#e9e9e9 25px 30px,#d2cec8 30px 35px) 0 0/100% 5px no-repeat,linear-gradient(90deg,#bebebe 0px 5px,#9a9a9a 5px 10px,#9b9b9b 10px 15px,#b4b4b4 15px 20px,#a0a0a0 20px 25px,#b3b3b3 25px 30px,#898989 30px 35px) 0 5px/100% 5px no-repeat,linear-gradient(90deg,#d8d8d8 0px 5px,#b7bdc3 5px 10px,#d9d9d9 10px 15px,#eeeae4 15px 20px,#bababa 20px 25px,#d6d2cc 25px 30px,#c0bcb6 30px 35px) 0 10px/100% 5px no-repeat"></div>
<div style="position:absolute;left:1206px;top:574px;width:10px;height:15px;background:linear-gradient(90deg,#bebebe 0px 5px,#b6b6b6 5px 10px) 0 0/100% 5px no-repeat,linear-gradient(90deg,#e4eaf0 0px 5px,#a8aeb4 5px 10px) 0 5px/100% 5px no-repeat,linear-gradient(90deg,#bac0c6 0px 5px,#e3e3e3 5px 10px) 0 10px/100% 5px no-repeat"></div>
<svg style="position:absolute;left:39px;top:607px;" width="15" height="15" viewBox="0 0 15 15"><rect x="1.5" y="1.5" width="12" height="12" rx="2.6" fill="#fff" stroke="#777" stroke-width="1.4"/></svg>
<div style="position:absolute;left:91px;top:604px;width:20px;height:20px;background:linear-gradient(90deg,#f3e6e6 0 5px,#d8948f 5px 10px,#c9897f 10px 15px,#dcdcdc 15px) 0 0/100% 5px no-repeat,linear-gradient(90deg,#f3e5e5 0 5px,#c98a88 5px 15px,#b9b9b9 15px) 0 5px/100% 5px no-repeat,linear-gradient(90deg,transparent 0 5px,#e0d3d3 5px 10px,#e7c2c2 10px 15px,#d8c0c0 15px) 0 10px/100% 5px no-repeat,linear-gradient(90deg,transparent 0 5px,#dadada 5px 10px,#c6c6c6 10px) 0 15px/100% 5px no-repeat"></div>
<div style="position:absolute;left:121px;top:609px;width:55px;height:15px;background:linear-gradient(90deg,#a0a0a0 0px 5px,#d1d1d1 5px 10px,#dce2e8 10px 15px,#ccc8c2 15px 20px,#d4d4d4 20px 25px,#9f9f9f 25px 30px,#a9a9a9 30px 35px,#cfcbc5 35px 40px,#d7d7d7 40px 45px,#cecac4 45px 50px,#ececec 50px 55px) 0 0/100% 5px no-repeat,linear-gradient(90deg,#8e949a 0px 5px,#b5b5b5 5px 10px,#c6c6c6 10px 15px,#b6b6b6 15px 20px,#a29e98 20px 25px,#8a9096 25px 30px,#a3a3a3 30px 35px,#bebab4 35px 40px,#8f8b85 40px 45px,#b6b6b6 45px 50px,#bdbdbd 50px 55px) 0 5px/100% 5px no-repeat,linear-gradient(90deg,#dad6d0 0px 5px,#dedede 5px 10px,#d4d4d4 10px 15px,#cdcdcd 15px 20px,#e1e1e1 20px 25px,#d0d0d0 25px 30px,#d3d3d3 30px 35px,#c3c9cf 35px 40px,#c4cad0 40px 45px,#dfdfdf 45px 50px,#d2d2d2 50px 55px) 0 10px/100% 5px no-repeat"></div>
<div style="position:absolute;left:256px;top:609px;width:50px;height:15px;background:linear-gradient(90deg,#f0ece6 0px 5px,#a1a1a1 5px 10px,#cacaca 10px 15px,#d5d5d5 15px 20px,#a4a4a4 20px 25px,#b8b8b8 25px 30px,#ece8e2 30px 35px,#c1c1c1 35px 40px,#c0c0c0 40px 45px,#b6b6b6 45px 50px) 0 0/100% 5px no-repeat,linear-gradient(90deg,#9a9a9a 0px 5px,#9c9c9c 5px 10px,#bebebe 10px 15px,#a8aeb4 15px 20px,#8c9298 20px 25px,#868686 25px 30px,#aca8a2 30px 35px,#94908a 35px 40px,#c1c1c1 40px 45px,#bcc2c8 45px 50px) 0 5px/100% 5px no-repeat,linear-gradient(90deg,#d0d0d0 0px 5px,#dfdfdf 5px 10px,#d4d4d4 10px 15px,#d8d8d8 15px 20px,#ededed 20px 25px,#bfbfbf 25px 30px,#c2c8ce 30px 35px,#dfdfdf 35px 40px,#e2e2e2 40px 45px,#d1d7dd 45px 50px) 0 10px/100% 5px no-repeat"></div>
<div style="position:absolute;left:391px;top:609px;width:15px;height:15px;background:linear-gradient(90deg,#d1cdc7 0px 5px,#a4a4a4 5px 10px,#bfbfbf 10px 15px) 0 0/100% 5px no-repeat,linear-gradient(90deg,#a5a19b 0px 5px,#abb1b7 5px 10px,#b3b3b3 10px 15px) 0 5px/100% 5px no-repeat,linear-gradient(90deg,#d6d6d6 0px 5px,#c5c5c5 5px 10px,#cdcdcd 10px 15px) 0 10px/100% 5px no-repeat"></div>
<div style="position:absolute;left:451px;top:609px;width:90px;height:15px;background:linear-gradient(90deg,#d5d5d5 0px 5px,#e7e7e7 5px 10px,#f4f0ea 10px 15px,#b8b4ae 15px 20px,#b7b3ad 20px 25px,#cfcfcf 25px 30px,#afb5bb 30px 35px,#9ca2a8 35px 40px,#b2b8be 40px 45px,#cacaca 45px 50px,#e5e5e5 50px 55px,#eeeae4 55px 60px,#a9a9a9 60px 65px,#b8bec4 65px 70px,#d5d1cb 70px 75px,#dddddd 75px 80px,#dbdbdb 80px 85px,#afafaf 85px 90px) 0 0/100% 5px no-repeat,linear-gradient(90deg,#9ba1a7 0px 5px,#989898 5px 10px,#a3a3a3 10px 15px,#96928c 15px 20px,#b2aea8 20px 25px,#c4c4c4 25px 30px,#a8a49e 30px 35px,#93999f 35px 40px,#c3c3c3 40px 45px,#8f8f8f 45px 50px,#a19d97 50px 55px,#a6acb2 55px 60px,#9d9993 60px 65px,#bbbbbb 65px 70px,#8a9096 70px 75px,#8d8d8d 75px 80px,#989898 80px 85px,#c4c4c4 85px 90px) 0 5px/100% 5px no-repeat,linear-gradient(90deg,#c5c5c5 0px 5px,#c9c9c9 5px 10px,#bcbcbc 10px 15px,#c1c1c1 15px 20px,#dadada 20px 25px,#e2e2e2 25px 30px,#eaeaea 30px 35px,#dcd8d2 35px 40px,#d2d2d2 40px 45px,#e8e8e8 45px 50px,#cdcdcd 50px 55px,#d2d8de 55px 60px,#c1bdb7 60px 65px,#ece8e2 65px 70px,#d1d7dd 70px 75px,#f1ede7 75px 80px,#d8d8d8 80px 85px,#f0ece6 85px 90px) 0 10px/100% 5px no-repeat"></div>
<div style="position:absolute;left:546px;top:609px;width:30px;height:15px;background:linear-gradient(90deg,#c5cbd1 0px 5px,#bac0c6 5px 10px,#d2d8de 10px 15px,#e3e9ef 15px 20px,#aeaeae 20px 25px,#bcbcbc 25px 30px) 0 0/100% 5px no-repeat,linear-gradient(90deg,#9c9c9c 0px 5px,#757575 5px 10px,#8b8b8b 10px 15px,#bebebe 15px 20px,#928e88 20px 25px,#aeaeae 25px 30px) 0 5px/100% 5px no-repeat,linear-gradient(90deg,#e9e9e9 0px 5px,#e8e8e8 5px 10px,#e5ebf1 10px 15px,#e2e2e2 15px 20px,#d6d2cc 20px 25px,#c4cad0 25px 30px) 0 10px/100% 5px no-repeat"></div>
<div style="position:absolute;left:626px;top:609px;width:45px;height:15px;background:linear-gradient(90deg,#e6e6e6 0px 5px,#bdb9b3 5px 10px,#e1e1e1 10px 15px,#b5b5b5 15px 20px,#bcbcbc 20px 25px,#dbd7d1 25px 30px,#b3afa9 30px 35px,#c8ced4 35px 40px,#ebe7e1 40px 45px) 0 0/100% 5px no-repeat,linear-gradient(90deg,#8c8882 0px 5px,#6b6b6b 5px 10px,#aaaaaa 10px 15px,#c8c8c8 15px 20px,#c8c8c8 20px 25px,#a8a49e 25px 30px,#959595 30px 35px,#cfcbc5 35px 40px,#a6a29c 40px 45px) 0 5px/100% 5px no-repeat,linear-gradient(90deg,#d4d4d4 0px 5px,#cbcbcb 5px 10px,#e8eef4 10px 15px,#dbdbdb 15px 20px,#dddddd 20px 25px,#d2cec8 25px 30px,#d2d8de 30px 35px,#c9c9c9 35px 40px,#ececec 40px 45px) 0 10px/100% 5px no-repeat"></div>
<div style="position:absolute;left:706px;top:609px;width:145px;height:15px;background:linear-gradient(90deg,#bfbfbf 0px 5px,#c4cad0 5px 10px,#b3afa9 10px 15px,#b5b5b5 15px 20px,#cccccc 20px 25px,#c3c3c3 25px 30px,#e4e0da 30px 35px,#cacaca 35px 40px,#c2beb8 40px 45px,#e9eff5 45px 50px,#e9e9e9 50px 55px,#c1c1c1 55px 60px,#f2eee8 60px 65px,#acb2b8 65px 70px,#d6d2cc 70px 75px,#b4b4b4 75px 80px,#c4c0ba 80px 85px,#b6b2ac 85px 90px,#cdc9c3 90px 95px,#b5b5b5 95px 100px,#d9d9d9 100px 105px,#bababa 105px 110px,#e9e9e9 110px 115px,#d4d4d4 115px 120px,#d4d4d4 120px 125px,#b7b7b7 125px 130px,#dce2e8 130px 135px,#adadad 135px 140px,#c1c1c1 140px 145px) 0 0/100% 5px no-repeat,linear-gradient(90deg,#adadad 0px 5px,#b2b8be 5px 10px,#888888 10px 15px,#a2a2a2 15px 20px,#6c6c6c 20px 25px,#b2b8be 25px 30px,#8e8e8e 30px 35px,#9ca2a8 35px 40px,#b6b6b6 40px 45px,#c8c4be 45px 50px,#939393 50px 55px,#878d93 55px 60px,#787878 60px 65px,#6e6e6e 65px 70px,#b6b6b6 70px 75px,#666666 75px 80px,#a8a49e 80px 85px,#bcc2c8 85px 90px,#aba7a1 90px 95px,#b0b0b0 95px 100px,#b8bec4 100px 105px,#a4aab0 105px 110px,#c6c6c6 110px 115px,#c3c3c3 115px 120px,#c3c3c3 120px 125px,#b8bec4 125px 130px,#b0b6bc 130px 135px,#939393 135px 140px,#c9c9c9 140px 145px) 0 5px/100% 5px no-repeat,linear-gradient(90deg,#e0e0e0 0px 5px,#d1d7dd 5px 10px,#cbcbcb 10px 15px,#c6c6c6 15px 20px,#e2e2e2 20px 25px,#c4c4c4 25px 30px,#e3e3e3 30px 35px,#d4dae0 35px 40px,#e0e0e0 40px 45px,#d3d9df 45px 50px,#bebebe 50px 55px,#d0d0d0 55px 60px,#dddddd 60px 65px,#bcbcbc 65px 70px,#e8e4de 70px 75px,#d8d8d8 75px 80px,#c7cdd3 80px 85px,#e0e6ec 85px 90px,#e0e0e0 90px 95px,#d9d9d9 95px 100px,#ededed 100px 105px,#d4dae0 105px 110px,#c9c9c9 110px 115px,#ececec 115px 120px,#cecece 120px 125px,#e7edf3 125px 130px,#c8c8c8 130px 135px,#d6d2cc 135px 140px,#cfd5db 140px 145px) 0 10px/100% 5px no-repeat"></div>
<div style="position:absolute;left:856px;top:609px;width:25px;height:15px;background:linear-gradient(90deg,#dadada 0px 5px,#cecece 5px 10px,#cdcdcd 10px 15px,#bbbbbb 15px 20px,#c0bcb6 20px 25px) 0 0/100% 5px no-repeat,linear-gradient(90deg,#929292 0px 5px,#bcbcbc 5px 10px,#969696 10px 15px,#9ca2a8 15px 20px,#90969c 20px 25px) 0 5px/100% 5px no-repeat,linear-gradient(90deg,#bfbfbf 0px 5px,#ededed 5px 10px,#ececec 10px 15px,#d4d0ca 15px 20px,#d8d4ce 20px 25px) 0 10px/100% 5px no-repeat"></div>
<div style="position:absolute;left:986px;top:609px;width:35px;height:15px;background:linear-gradient(90deg,#c5c5c5 0px 5px,#bababa 5px 10px,#c5c1bb 10px 15px,#afafaf 15px 20px,#aaaaaa 20px 25px,#bcbcbc 25px 30px,#b9b9b9 30px 35px) 0 0/100% 5px no-repeat,linear-gradient(90deg,#a6a6a6 0px 5px,#898f95 5px 10px,#919191 10px 15px,#a9a9a9 15px 20px,#9ea4aa 20px 25px,#868686 25px 30px,#9ca2a8 30px 35px) 0 5px/100% 5px no-repeat,linear-gradient(90deg,#c6c6c6 0px 5px,#c8c8c8 5px 10px,#c0c0c0 10px 15px,#ededed 15px 20px,#c7c7c7 20px 25px,#c5c1bb 25px 30px,#e4e0da 30px 35px) 0 10px/100% 5px no-repeat"></div>
<div style="position:absolute;left:1081px;top:609px;width:135px;height:15px;background:linear-gradient(90deg,#e4e4e4 0px 5px,#e8eef4 5px 10px,#d7d7d7 10px 15px,#b4bac0 15px 20px,#b4b4b4 20px 25px,#bdbdbd 25px 30px,#d5d5d5 30px 35px,#e5ebf1 35px 40px,#e7e3dd 40px 45px,#bdbdbd 45px 50px,#eaeaea 50px 55px,#ededed 55px 60px,#a5a19b 60px 65px,#ccc8c2 65px 70px,#cdd3d9 70px 75px,#b2b2b2 75px 80px,#a0a0a0 80px 85px,#b5b5b5 85px 90px,#e1e7ed 90px 95px,#dad6d0 95px 100px,#c2beb8 100px 105px,#a8a49e 105px 110px,#a9a59f 110px 115px,#b5b5b5 115px 120px,#b1b7bd 120px 125px,#cdcdcd 125px 130px,#9ba1a7 130px 135px) 0 0/100% 5px no-repeat,linear-gradient(90deg,#ababab 0px 5px,#979797 5px 10px,#bfbfbf 10px 15px,#a7adb3 15px 20px,#aeaaa4 20px 25px,#b8b8b8 25px 30px,#989898 30px 35px,#a19d97 35px 40px,#928e88 40px 45px,#a7a39d 45px 50px,#c5c5c5 50px 55px,#a3a3a3 55px 60px,#8c8c8c 60px 65px,#bbbbbb 65px 70px,#8e8e8e 70px 75px,#8e8a84 75px 80px,#b2aea8 80px 85px,#c6c6c6 85px 90px,#afafaf 90px 95px,#868c92 95px 100px,#aeaeae 100px 105px,#959595 105px 110px,#b3b9bf 110px 115px,#b7b7b7 115px 120px,#9b9791 120px 125px,#cac6c0 125px 130px,#909090 130px 135px) 0 5px/100% 5px no-repeat,linear-gradient(90deg,#c9c9c9 0px 5px,#c6c6c6 5px 10px,#c1c1c1 10px 15px,#c6c6c6 15px 20px,#cdcdcd 20px 25px,#e7edf3 25px 30px,#d3d3d3 30px 35px,#c0bcb6 35px 40px,#c4c4c4 40px 45px,#e9eff5 45px 50px,#eeeae4 50px 55px,#e8e8e8 55px 60px,#c0c0c0 60px 65px,#d4d4d4 65px 70px,#e1e1e1 70px 75px,#dbd7d1 75px 80px,#e0e0e0 80px 85px,#cbcbcb 85px 90px,#c7c7c7 90px 95px,#e1ddd7 95px 100px,#dde3e9 100px 105px,#cecece 105px 110px,#e3e3e3 110px 115px,#c2c2c2 115px 120px,#c0bcb6 120px 125px,#c2c2c2 125px 130px,#bdbdbd 130px 135px) 0 10px/100% 5px no-repeat"></div>
<div style="position:absolute;left:33px;top:635px;width:1184px;height:30px;background:#f2f2f2"></div>
<div style="position:absolute;left:88px;top:635px;width:5px;height:30px;background:#f7f7f7"></div>
<div style="position:absolute;left:116px;top:635px;width:5px;height:30px;background:#f7f7f7"></div>
<div style="position:absolute;left:251px;top:635px;width:5px;height:30px;background:#f7f7f7"></div>
<div style="position:absolute;left:386px;top:635px;width:5px;height:30px;background:#f7f7f7"></div>
<div style="position:absolute;left:446px;top:635px;width:5px;height:30px;background:#f7f7f7"></div>
<div style="position:absolute;left:536px;top:635px;width:5px;height:30px;background:#f7f7f7"></div>
<div style="position:absolute;left:616px;top:635px;width:5px;height:30px;background:#f7f7f7"></div>
<div style="position:absolute;left:696px;top:635px;width:5px;height:30px;background:#f7f7f7"></div>
<div style="position:absolute;left:851px;top:635px;width:5px;height:30px;background:#f7f7f7"></div>
<div style="position:absolute;left:976px;top:635px;width:5px;height:30px;background:#f7f7f7"></div>
<div style="position:absolute;left:1076px;top:635px;width:5px;height:30px;background:#f7f7f7"></div>
<div style="position:absolute;left:88px;top:663px;width:1128px;height:2px;background:#f6f6f6"></div>
<svg style="position:absolute;left:39px;top:642px;" width="15" height="15" viewBox="0 0 15 15"><rect x="1.5" y="1.5" width="12" height="12" rx="2.6" fill="#fff" stroke="#777" stroke-width="1.4"/></svg>
<div style="position:absolute;left:91px;top:639px;width:20px;height:20px;background:linear-gradient(90deg,#f3e6e6 0 5px,#d8948f 5px 10px,#c9897f 10px 15px,#dcdcdc 15px) 0 0/100% 5px no-repeat,linear-gradient(90deg,#f3e5e5 0 5px,#c98a88 5px 15px,#b9b9b9 15px) 0 5px/100% 5px no-repeat,linear-gradient(90deg,transparent 0 5px,#e0d3d3 5px 10px,#e7c2c2 10px 15px,#d8c0c0 15px) 0 10px/100% 5px no-repeat,linear-gradient(90deg,transparent 0 5px,#dadada 5px 10px,#c6c6c6 10px) 0 15px/100% 5px no-repeat"></div>
<div style="position:absolute;left:121px;top:644px;width:80px;height:15px;background:linear-gradient(90deg,#acacac 0px 5px,#c0bcb6 5px 10px,#c1bdb7 10px 15px,#c7c7c7 15px 20px,#afaba5 20px 25px,#aaaaaa 25px 30px,#b3afa9 30px 35px,#e6e6e6 35px 40px,#dfdfdf 40px 45px,#b9b9b9 45px 50px,#aba7a1 50px 55px,#c5c5c5 55px 60px,#cfd5db 60px 65px,#a3a3a3 65px 70px,#cbcbcb 70px 75px,#d2d2d2 75px 80px) 0 0/100% 5px no-repeat,linear-gradient(90deg,#bebab4 0px 5px,#979797 5px 10px,#bcc2c8 10px 15px,#97938d 15px 20px,#a7a7a7 20px 25px,#b2b2b2 25px 30px,#8a8a8a 30px 35px,#c3c3c3 35px 40px,#c2c2c2 40px 45px,#727272 45px 50px,#a0a0a0 50px 55px,#c5c1bb 55px 60px,#939393 60px 65px,#979797 65px 70px,#99958f 70px 75px,#656b71 75px 80px) 0 5px/100% 5px no-repeat,linear-gradient(90deg,#bbbbbb 0px 5px,#e6e6e6 5px 10px,#e9e9e9 10px 15px,#d7d7d7 15px 20px,#dfdbd5 20px 25px,#e8e8e8 25px 30px,#e2e8ee 30px 35px,#d3d9df 35px 40px,#e6e6e6 40px 45px,#c9c9c9 45px 50px,#e7e7e7 50px 55px,#e0dcd6 55px 60px,#d4d4d4 60px 65px,#b8bec4 65px 70px,#e5e5e5 70px 75px,#c4c4c4 75px 80px) 0 10px/100% 5px no-repeat"></div>
<div style="position:absolute;left:256px;top:644px;width:45px;height:15px;background:linear-gradient(90deg,#a5abb1 0px 5px,#dbdbdb 5px 10px,#afb5bb 10px 15px,#d4d4d4 15px 20px,#d1d1d1 20px 25px,#9fa5ab 25px 30px,#afafaf 30px 35px,#bababa 35px 40px,#a9a59f 40px 45px) 0 0/100% 5px no-repeat,linear-gradient(90deg,#8d9399 0px 5px,#c9c9c9 5px 10px,#b8b8b8 10px 15px,#8f8f8f 15px 20px,#b0aca6 20px 25px,#93999f 25px 30px,#9f9b95 30px 35px,#b7bdc3 35px 40px,#888888 40px 45px) 0 5px/100% 5px no-repeat,linear-gradient(90deg,#e1e1e1 0px 5px,#dbdbdb 5px 10px,#dedede 10px 15px,#dfdbd5 15px 20px,#cbc7c1 20px 25px,#c4c4c4 25px 30px,#c1c1c1 30px 35px,#e2e2e2 35px 40px,#c3c3c3 40px 45px) 0 10px/100% 5px no-repeat"></div>
<div style="position:absolute;left:391px;top:644px;width:15px;height:15px;background:linear-gradient(90deg,#b5bbc1 0px 5px,#d1d1d1 5px 10px,#b5b5b5 10px 15px) 0 0/100% 5px no-repeat,linear-gradient(90deg,#c4c0ba 0px 5px,#949494 5px 10px,#b2b8be 10px 15px) 0 5px/100% 5px no-repeat,linear-gradient(90deg,#cfd5db 0px 5px,#d9d9d9 5px 10px,#c5c5c5 10px 15px) 0 10px/100% 5px no-repeat"></div>
<div style="position:absolute;left:451px;top:644px;width:90px;height:15px;background:linear-gradient(90deg,#b0b0b0 0px 5px,#a2a2a2 5px 10px,#e0e0e0 10px 15px,#d4d4d4 15px 20px,#d4d0ca 20px 25px,#b7b3ad 25px 30px,#bebebe 30px 35px,#e1e1e1 35px 40px,#e1e1e1 40px 45px,#aab0b6 45px 50px,#b5b1ab 50px 55px,#dfdfdf 55px 60px,#a4a4a4 60px 65px,#bcbcbc 65px 70px,#cfcbc5 70px 75px,#a8a8a8 75px 80px,#a2a2a2 80px 85px,#b4b4b4 85px 90px) 0 0/100% 5px no-repeat,linear-gradient(90deg,#979797 0px 5px,#bdbdbd 5px 10px,#b9bfc5 10px 15px,#c5c5c5 15px 20px,#9a9a9a 20px 25px,#bfbfbf 25px 30px,#a4aab0 30px 35px,#8a9096 35px 40px,#8c8c8c 40px 45px,#bcbcbc 45px 50px,#959595 50px 55px,#a1a1a1 55px 60px,#c9c9c9 60px 65px,#bac0c6 65px 70px,#a2a8ae 70px 75px,#bababa 75px 80px,#9a9a9a 80px 85px,#bababa 85px 90px) 0 5px/100% 5px no-repeat,linear-gradient(90deg,#c3c3c3 0px 5px,#e2e2e2 5px 10px,#c2c2c2 10px 15px,#b6bcc2 15px 20px,#dedede 20px 25px,#e6ecf2 25px 30px,#c6c2bc 30px 35px,#ebebeb 35px 40px,#b8bec4 40px 45px,#dee4ea 45px 50px,#bdc3c9 50px 55px,#d3d9df 55px 60px,#bcc2c8 60px 65px,#d7d3cd 65px 70px,#c0c0c0 70px 75px,#dddddd 75px 80px,#c4c4c4 80px 85px,#cdd3d9 85px 90px) 0 10px/100% 5px no-repeat"></div>
<div style="position:absolute;left:546px;top:644px;width:30px;height:15px;background:linear-gradient(90deg,#ededed 0px 5px,#a4aab0 5px 10px,#adb3b9 10px 15px,#d2d2d2 15px 20px,#ababab 20px 25px,#dae0e6 25px 30px) 0 0/100% 5px no-repeat,linear-gradient(90deg,#c2c2c2 0px 5px,#a9a9a9 5px 10px,#b4bac0 10px 15px,#9a9a9a 15px 20px,#c2c2c2 20px 25px,#ccc8c2 25px 30px) 0 5px/100% 5px no-repeat,linear-gradient(90deg,#c2c2c2 0px 5px,#d3cfc9 5px 10px,#d1cdc7 10px 15px,#d3d3d3 15px 20px,#ebebeb 20px 25px,#bbbbbb 25px 30px) 0 10px/100% 5px no-repeat"></div>
<div style="position:absolute;left:626px;top:644px;width:40px;height:15px;background:linear-gradient(90deg,#e8e4de 0px 5px,#dbdbdb 5px 10px,#a9a9a9 10px 15px,#ddd9d3 15px 20px,#e1e1e1 20px 25px,#bababa 25px 30px,#aaa6a0 30px 35px,#9ca2a8 35px 40px) 0 0/100% 5px no-repeat,linear-gradient(90deg,#616161 0px 5px,#aaaaaa 5px 10px,#c2c8ce 10px 15px,#898989 15px 20px,#b9b5af 20px 25px,#adb3b9 25px 30px,#c5cbd1 30px 35px,#929292 35px 40px) 0 5px/100% 5px no-repeat,linear-gradient(90deg,#cac6c0 0px 5px,#c4c4c4 5px 10px,#c2c8ce 10px 15px,#cdc9c3 15px 20px,#c2beb8 20px 25px,#dddddd 25px 30px,#e4eaf0 30px 35px,#cad0d6 35px 40px) 0 10px/100% 5px no-repeat"></div>
<div style="position:absolute;left:706px;top:644px;width:145px;height:15px;background:linear-gradient(90deg,#a9a59f 0px 5px,#b5b1ab 5px 10px,#d0d0d0 10px 15px,#d6d6d6 15px 20px,#d9dfe5 20px 25px,#9ea4aa 25px 30px,#bcb8b2 30px 35px,#e6e6e6 35px 40px,#dee4ea 40px 45px,#e5e5e5 45px 50px,#e9e9e9 50px 55px,#ebebeb 55px 60px,#ddd9d3 60px 65px,#a0a0a0 65px 70px,#e1e7ed 70px 75px,#f2eee8 75px 80px,#b4b4b4 80px 85px,#bbbbbb 85px 90px,#dbe1e7 90px 95px,#b1b1b1 95px 100px,#d6d2cc 100px 105px,#c7c7c7 105px 110px,#dedede 110px 115px,#d6d6d6 115px 120px,#c8c8c8 120px 125px,#ededed 125px 130px,#c7cdd3 130px 135px,#c4c4c4 135px 140px,#ddd9d3 140px 145px) 0 0/100% 5px no-repeat,linear-gradient(90deg,#8f8f8f 0px 5px,#9d9d9d 5px 10px,#abb1b7 10px 15px,#9d9d9d 15px 20px,#9f9f9f 20px 25px,#959595 25px 30px,#c6c2bc 30px 35px,#9d9993 35px 40px,#a0a0a0 40px 45px,#aab0b6 45px 50px,#8f8f8f 50px 55px,#a4aab0 55px 60px,#c2c2c2 60px 65px,#9b9b9b 65px 70px,#878787 70px 75px,#5e5e5e 75px 80px,#929292 80px 85px,#b3b3b3 85px 90px,#c0c6cc 90px 95px,#b4b4b4 95px 100px,#c5c5c5 100px 105px,#93999f 105px 110px,#8d8d8d 110px 115px,#9a9a9a 115px 120px,#c4cad0 120px 125px,#635f59 125px 130px,#9c9c9c 130px 135px,#a4a4a4 135px 140px,#a5a19b 140px 145px) 0 5px/100% 5px no-repeat,linear-gradient(90deg,#d1d1d1 0px 5px,#eaeaea 5px 10px,#ebe7e1 10px 15px,#c4c4c4 15px 20px,#e5e1db 20px 25px,#e4e0da 25px 30px,#bebebe 30px 35px,#bdbdbd 35px 40px,#c8c4be 40px 45px,#bebebe 45px 50px,#e2e8ee 50px 55px,#c3bfb9 55px 60px,#cbcbcb 60px 65px,#d8dee4 65px 70px,#e3dfd9 70px 75px,#e1e7ed 75px 80px,#e2ded8 80px 85px,#c0c6cc 85px 90px,#dad6d0 90px 95px,#d6d2cc 95px 100px,#d8d8d8 100px 105px,#d7d7d7 105px 110px,#f2eee8 110px 115px,#e9e9e9 115px 120px,#c7c3bd 120px 125px,#bcc2c8 125px 130px,#cfcfcf 130px 135px,#d0d0d0 135px 140px,#d3cfc9 140px 145px) 0 10px/100% 5px no-repeat"></div>
<div style="position:absolute;left:856px;top:644px;width:25px;height:15px;background:linear-gradient(90deg,#b3b3b3 0px 5px,#d5d5d5 5px 10px,#aeaeae 10px 15px,#cecece 15px 20px,#c6c6c6 20px 25px) 0 0/100% 5px no-repeat,linear-gradient(90deg,#a3a3a3 0px 5px,#959ba1 5px 10px,#c6c6c6 10px 15px,#868686 15px 20px,#868686 20px 25px) 0 5px/100% 5px no-repeat,linear-gradient(90deg,#d8d4ce 0px 5px,#d0ccc6 5px 10px,#d9d9d9 10px 15px,#dedede 15px 20px,#dbdbdb 20px 25px) 0 10px/100% 5px no-repeat"></div>
<div style="position:absolute;left:986px;top:644px;width:35px;height:15px;background:linear-gradient(90deg,#dee4ea 0px 5px,#e0e0e0 5px 10px,#e9e9e9 10px 15px,#bbbbbb 15px 20px,#b2aea8 20px 25px,#9da3a9 25px 30px,#c1c1c1 30px 35px) 0 0/100% 5px no-repeat,linear-gradient(90deg,#a4aab0 0px 5px,#a5a5a5 5px 10px,#b6b6b6 10px 15px,#a19d97 15px 20px,#919191 20px 25px,#bfbfbf 25px 30px,#a5a5a5 30px 35px) 0 5px/100% 5px no-repeat,linear-gradient(90deg,#dadada 0px 5px,#c6ccd2 5px 10px,#dddddd 10px 15px,#c9c9c9 15px 20px,#d4d0ca 20px 25px,#e6e2dc 25px 30px,#d1d1d1 30px 35px) 0 10px/100% 5px no-repeat"></div>
<div style="position:absolute;left:1081px;top:649px;width:45px;height:5px;background:#d9d6d6"></div>
<div style="position:absolute;left:1131px;top:644px;width:30px;height:15px;background:linear-gradient(90deg,#a6a6a6 0px 5px,#a9a9a9 5px 10px,#d6d2cc 10px 15px,#b5bbc1 15px 20px,#c6c6c6 20px 25px,#aaaaaa 25px 30px) 0 0/100% 5px no-repeat,linear-gradient(90deg,#b0b6bc 0px 5px,#8a9096 5px 10px,#b8bec4 10px 15px,#bebab4 15px 20px,#c4cad0 20px 25px,#959ba1 25px 30px) 0 5px/100% 5px no-repeat,linear-gradient(90deg,#e2e2e2 0px 5px,#cecece 5px 10px,#c9c5bf 10px 15px,#ededed 15px 20px,#e6e2dc 20px 25px,#d4d4d4 25px 30px) 0 10px/100% 5px no-repeat"></div>
<div style="position:absolute;left:1166px;top:644px;width:35px;height:15px;background:linear-gradient(90deg,#dfe5eb 0px 5px,#afafaf 5px 10px,#e7e7e7 10px 15px,#c8c4be 15px 20px,#c3bfb9 20px 25px,#b8b8b8 25px 30px,#cbc7c1 30px 35px) 0 0/100% 5px no-repeat,linear-gradient(90deg,#afaba5 0px 5px,#a2a8ae 5px 10px,#bdb9b3 10px 15px,#898989 15px 20px,#a7adb3 20px 25px,#b6b6b6 25px 30px,#959595 30px 35px) 0 5px/100% 5px no-repeat,linear-gradient(90deg,#bababa 0px 5px,#ededed 5px 10px,#d2d2d2 10px 15px,#d5d1cb 15px 20px,#d9d9d9 20px 25px,#c1c1c1 25px 30px,#c0c0c0 30px 35px) 0 10px/100% 5px no-repeat"></div>
<div style="position:absolute;left:1206px;top:644px;width:10px;height:15px;background:linear-gradient(90deg,#d7d7d7 0px 5px,#e2e2e2 5px 10px) 0 0/100% 5px no-repeat,linear-gradient(90deg,#cecece 0px 5px,#d3d3d3 5px 10px) 0 5px/100% 5px no-repeat,linear-gradient(90deg,#d8dee4 0px 5px,#bec4ca 5px 10px) 0 10px/100% 5px no-repeat"></div>
<svg style="position:absolute;left:41px;top:684.5px;" width="16" height="14" viewBox="0 0 16 14"><path d="M8 1.5 L2.8 6.8 L8 12 M13.5 1.5 L8.3 6.8 L13.5 12" fill="none" stroke="#111" stroke-width="1.5"/></svg>
<svg style="position:absolute;left:70px;top:684px;" width="12" height="14" viewBox="0 0 12 14"><path d="M8.5 1.5 L3 6.8 L8.5 12" fill="none" stroke="#111" stroke-width="1.5"/></svg>
<svg style="position:absolute;left:383px;top:684px;" width="12" height="14" viewBox="0 0 12 14"><path d="M3 1.5 L8.5 6.8 L3 12" fill="none" stroke="#111" stroke-width="1.5"/></svg>
<svg style="position:absolute;left:407px;top:684px;" width="16" height="14" viewBox="0 0 16 14"><path d="M2.5 1.5 L7.7 6.8 L2.5 12 M8 1.5 L13.2 6.8 L8 12" fill="none" stroke="#111" stroke-width="1.5"/></svg>
<svg style="position:absolute;left:575px;top:700.5px;" width="66" height="6" viewBox="0 0 66 6"><path d="M0.5 0 V4.5 H64.5 V0" fill="none" stroke="#333" stroke-width="1"/></svg>
<svg style="position:absolute;left:622px;top:687px;" width="13" height="8" viewBox="0 0 13 8"><path d="M1 1.2 L6.2 6.4 L11.4 1.2" fill="none" stroke="#111" stroke-width="1.5"/></svg>
<div style="position:absolute;left:817px;top:781px;width:163px;height:27px;background:#bd2626"></div>
<div style="position:absolute;left:989px;top:781px;width:125px;height:27px;background:#bd2626"></div>
<div style="position:absolute;left:1122px;top:781px;width:113px;height:27px;background:#474747"></div>
<svg style="position:absolute;left:826px;top:787px;" width="16" height="14" viewBox="0 0 16 14"><path d="M2.5 1.5 L7.6 6.6 L2.5 11.7 M8.5 1.5 L13.6 6.6 L8.5 11.7" fill="none" stroke="#fff" stroke-width="2.3"/></svg>
<svg style="position:absolute;left:997px;top:787px;" width="12" height="14" viewBox="0 0 12 14"><path d="M3.5 1.5 L8.6 6.6 L3.5 11.7" fill="none" stroke="#fff" stroke-width="2.3"/></svg>
<svg style="position:absolute;left:1131px;top:787px;" width="15" height="14" viewBox="0 0 15 14"><path d="M2.5 1.8 L12 11.3 M12 1.8 L2.5 11.3" fill="none" stroke="#fff" stroke-width="2.3"/></svg>
<div class="t" style="left:20.10px;top:9.00px;font-size:18.5px;font-weight:bold;color:#000;transform:scaleX(0.8860);transform-origin:0.00px 0;">Schüler suchen</div>
<div class="t" style="left:47.70px;top:45.00px;font-size:15.5px;font-weight:normal;color:#cfcfcf;letter-spacing:-0.062px;">letzte Suche</div>
<div class="t" style="left:198.40px;top:45.00px;font-size:15.5px;font-weight:normal;color:#111;letter-spacing:-0.356px;">Suche zurücksetzen</div>
<div class="t" style="left:41.70px;top:66.00px;font-size:15.5px;font-weight:normal;color:#111;letter-spacing:-0.316px;">Schüler</div>
<div class="t" style="left:41.00px;top:86.00px;font-size:15.5px;font-weight:normal;color:#111;letter-spacing:-0.112px;">Kandidaten</div>
<div class="t" style="left:147.60px;top:86.00px;font-size:15.5px;font-weight:normal;color:#111;">(</div>
<div class="t" style="left:406.70px;top:86.00px;font-size:15.5px;font-weight:normal;color:#111;">)</div>
<div class="t" style="left:192.60px;top:66.00px;font-size:15.5px;font-weight:normal;color:#111;letter-spacing:-0.078px;">Aktive</div>
<div class="t" style="left:192.60px;top:86.00px;font-size:15.5px;font-weight:normal;color:#111;letter-spacing:-0.598px;">ohne SD-R</div>
<div class="t" style="left:316.70px;top:66.00px;font-size:15.5px;font-weight:normal;color:#111;letter-spacing:-0.102px;">Ehemalige</div>
<div class="t" style="left:316.70px;top:86.00px;font-size:15.5px;font-weight:normal;color:#111;letter-spacing:-0.237px;">mit SD-R</div>
<div class="t" style="left:451.30px;top:66.00px;font-size:15.5px;font-weight:normal;color:#111;letter-spacing:0.017px;">Externe</div>
<div class="t" style="left:451.30px;top:86.00px;font-size:15.5px;font-weight:normal;color:#111;letter-spacing:0.046px;">ist Kandidat</div>
<div class="t" style="left:587.50px;top:86.00px;font-size:15.5px;font-weight:normal;color:#111;letter-spacing:-0.152px;">angenommen</div>
<div class="t" style="left:732.20px;top:86.00px;font-size:15.5px;font-weight:normal;color:#111;letter-spacing:0.018px;">auf Warteliste</div>
<div class="t" style="left:877.20px;top:86.00px;font-size:15.5px;font-weight:normal;color:#111;letter-spacing:0.042px;">abgelehnt / desinteressiert</div>
<div class="t" style="left:1198.20px;top:44.00px;font-size:15.5px;font-weight:normal;color:#111;letter-spacing:0.428px;">Hilfe</div>
<div class="t" style="left:204.10px;top:124.00px;font-size:15px;font-weight:bold;color:#000;transform:scaleX(0.8954);transform-origin:0.00px 0;">Suche</div>
<div class="t" style="left:568.40px;top:124.00px;font-size:15.5px;font-weight:normal;color:#111;letter-spacing:-0.114px;">Erweiterte Suche</div>
<div class="t" style="left:983.50px;top:124.00px;font-size:15.5px;font-weight:normal;color:#111;letter-spacing:-0.107px;">Expertensuche</div>
<div class="t" style="left:26.20px;top:164.00px;font-size:15.5px;font-weight:normal;color:#555;letter-spacing:-0.248px;">Nachname</div>
<div class="t" style="left:351.40px;top:164.00px;font-size:15.5px;font-weight:normal;color:#555;letter-spacing:0.055px;">Schulform</div>
<div class="t" style="left:673.50px;top:164.00px;font-size:15.5px;font-weight:normal;color:#555;letter-spacing:-0.018px;">Stufe</div>
<div class="t" style="left:960.20px;top:164.00px;font-size:15.5px;font-weight:normal;color:#555;letter-spacing:-0.320px;">Klasse</div>
<div class="t" style="left:1166.60px;top:203.00px;font-size:15.5px;font-weight:normal;color:#111;letter-spacing:-0.610px;">Suchen</div>
<div class="t" style="left:96.90px;top:254.00px;font-size:15.5px;font-weight:normal;color:#111;">SI</div>
<div class="t" style="left:123.00px;top:254.00px;font-size:15.5px;font-weight:normal;color:#111;letter-spacing:-0.305px;">Nachname</div>
<div class="t" style="left:258.00px;top:254.00px;font-size:15.5px;font-weight:normal;color:#111;letter-spacing:-0.203px;">Vorname</div>
<div class="t" style="left:395.00px;top:254.00px;font-size:15.5px;font-weight:normal;color:#111;">G</div>
<div class="t" style="left:546.80px;top:254.00px;font-size:15.5px;font-weight:normal;color:#111;letter-spacing:-0.242px;">St/Sem</div>
<div class="t" style="left:625.40px;top:254.00px;font-size:15.5px;font-weight:normal;color:#111;letter-spacing:-0.160px;">Klasse</div>
<div class="t" style="left:707.00px;top:254.00px;font-size:15.5px;font-weight:normal;color:#111;letter-spacing:-0.295px;">Schule</div>
<div class="t" style="left:858.70px;top:254.00px;font-size:15.5px;font-weight:normal;color:#111;letter-spacing:-0.042px;">Klassenlehrer</div>
<div class="t" style="left:987.30px;top:254.00px;font-size:15.5px;font-weight:normal;color:#111;letter-spacing:-0.298px;">Status</div>
<div class="t" style="left:1082.40px;top:254.00px;font-size:15.5px;font-weight:normal;color:#111;letter-spacing:0.040px;">Beruf</div>
<div class="t" style="left:453.20px;top:254.00px;font-size:15.5px;font-weight:normal;color:#111;transform:scaleX(0.8977);transform-origin:0.00px 0;">SF/BK</div>
<div class="t" style="left:98.30px;top:684.00px;font-size:15.5px;font-weight:bold;color:#c0272b;">1</div>
<div class="t" style="left:123.60px;top:684.00px;font-size:15.5px;font-weight:normal;color:#111;">2</div>
<div class="t" style="left:148.40px;top:684.00px;font-size:15.5px;font-weight:normal;color:#111;">3</div>
<div class="t" style="left:173.00px;top:684.00px;font-size:15.5px;font-weight:normal;color:#111;">4</div>
<div class="t" style="left:197.80px;top:684.00px;font-size:15.5px;font-weight:normal;color:#111;">5</div>
<div class="t" style="left:222.20px;top:684.00px;font-size:15.5px;font-weight:normal;color:#111;">6</div>
<div class="t" style="left:247.40px;top:684.00px;font-size:15.5px;font-weight:normal;color:#111;">7</div>
<div class="t" style="left:271.60px;top:684.00px;font-size:15.5px;font-weight:normal;color:#111;">8</div>
<div class="t" style="left:296.30px;top:684.00px;font-size:15.5px;font-weight:normal;color:#111;">9</div>
<div class="t" style="left:320.30px;top:684.00px;font-size:15.5px;font-weight:normal;color:#111;letter-spacing:-0.220px;">10</div>
<div class="t" style="left:353.10px;top:684.00px;font-size:15.5px;font-weight:normal;color:#111;letter-spacing:0.644px;">...</div>
<div class="t" style="left:439.00px;top:684.00px;font-size:15.5px;font-weight:normal;color:#111;letter-spacing:-0.004px;">Einträge pro Seite:</div>
<div class="t" style="left:580.10px;top:682.00px;font-size:15.5px;font-weight:normal;color:#111;letter-spacing:-0.120px;">100</div>
<div class="t" style="left:934.70px;top:684.00px;font-size:15.5px;font-weight:normal;color:#111;letter-spacing:-0.302px;">Seite</div>
<div class="t" style="left:973.80px;top:684.00px;font-size:15.5px;font-weight:bold;color:#111;">1</div>
<div class="t" style="left:986.50px;top:684.00px;font-size:15.5px;font-weight:normal;color:#111;letter-spacing:-0.385px;">von</div>
<div class="t" style="left:1015.90px;top:684.00px;font-size:15.5px;font-weight:bold;color:#111;">19</div>
<div class="t" style="left:1031.50px;top:684.00px;font-size:15.5px;font-weight:normal;color:#111;">,</div>
<div class="t" style="left:1039.30px;top:684.00px;font-size:15.5px;font-weight:normal;color:#111;letter-spacing:-0.199px;">Zeilen</div>
<div class="t" style="left:1086.20px;top:684.00px;font-size:15.5px;font-weight:bold;color:#111;">1</div>
<div class="t" style="left:1098.70px;top:684.00px;font-size:15.5px;font-weight:normal;color:#111;letter-spacing:-0.132px;">bis</div>
<div class="t" style="left:1124.30px;top:684.00px;font-size:15.5px;font-weight:bold;color:#111;letter-spacing:0.080px;">100</div>
<div class="t" style="left:1154.80px;top:684.00px;font-size:15.5px;font-weight:normal;color:#111;letter-spacing:-0.135px;">von</div>
<div class="t" style="left:1184.00px;top:684.00px;font-size:15.5px;font-weight:bold;color:#111;letter-spacing:0.213px;">1826</div>
<div class="t" style="left:1219.00px;top:684.00px;font-size:15.5px;font-weight:normal;color:#111;">.</div>
<div class="t" style="left:35.80px;top:727.00px;font-size:15px;font-weight:bold;color:#444;transform:scaleX(0.9805);transform-origin:0.00px 0;">0 von 1826 ausgewählt</div>
<div class="t" style="left:850.00px;top:787.00px;font-size:15.5px;font-weight:normal;color:#fff;letter-spacing:-0.046px;">Alle Übernehmen</div>
<div class="t" style="left:1014.80px;top:787.00px;font-size:15.5px;font-weight:normal;color:#fff;letter-spacing:-0.143px;">Übernehmen</div>
<div class="t" style="left:1151.50px;top:787.00px;font-size:15.5px;font-weight:normal;color:#fff;letter-spacing:-0.256px;">Abbrechen</div>
<div style="position:absolute;left:957px;top:801px;width:182px;height:40px;background:#fff;border:1px solid #555;box-sizing:border-box;width:183px"></div>
<div class="t" style="left:965px;top:808.00px;font-size:12px;font-weight:normal;color:#3a3a3a;">Alle übernehmen</div>
<div class="t" style="left:965px;top:825.00px;font-size:12px;font-weight:normal;color:#3a3a3a;letter-spacing:-0.08px">Drücken Sie: Alt + Umschlt. + Ü</div>
<div style="position:absolute;left:813px;top:774px;width:169px;height:37px;border:2.6px solid #fa0000;box-sizing:border-box;width:172px;height:39px;filter:drop-shadow(2px 3px 1.5px rgba(0,0,0,0.4))"></div>
<svg style="position:absolute;left:885px;top:712px;" width="20" height="64" viewBox="0 0 20 64"><g filter="url(#sh)"><path d="M11 3 L11.3 50" stroke="#fa0000" stroke-width="2.2"/><path d="M7.2 49 L15.2 49 L11.3 59.5 Z" fill="#fa0000"/></g><defs><filter id="sh" x="-50%" y="-20%" width="200%" height="150%"><feDropShadow dx="2" dy="2" stdDeviation="1.2" flood-color="#000" flood-opacity="0.35"/></filter></defs></svg>
<svg style="position:absolute;left:940px;top:785px;" width="24" height="28" viewBox="0 0 24 28"><path d="M6.2 2.2 C7.6 1.2 9.2 2 9.2 3.6 V7.2 C9.6 6.3 11.8 6.2 12.3 7.6 C12.8 6.9 15 6.9 15.5 8.4 C16.2 7.8 18.4 8 18.6 9.7 V18.5 C18.6 21.5 16.8 24.2 14.5 25 H9.8 C8.2 24.3 6.8 22.6 5.8 20.5 L2.3 15.2 C1.5 13.6 3.5 12.3 4.7 13.4 L6.2 15 Z" fill="#fff" stroke="#111" stroke-width="1.1"/><path d="M9.2 7.2 V12.8 M12.3 7.6 V12.8 M15.5 8.4 V12.8" stroke="#111" stroke-width="0.9"/></svg>
</body></html>
